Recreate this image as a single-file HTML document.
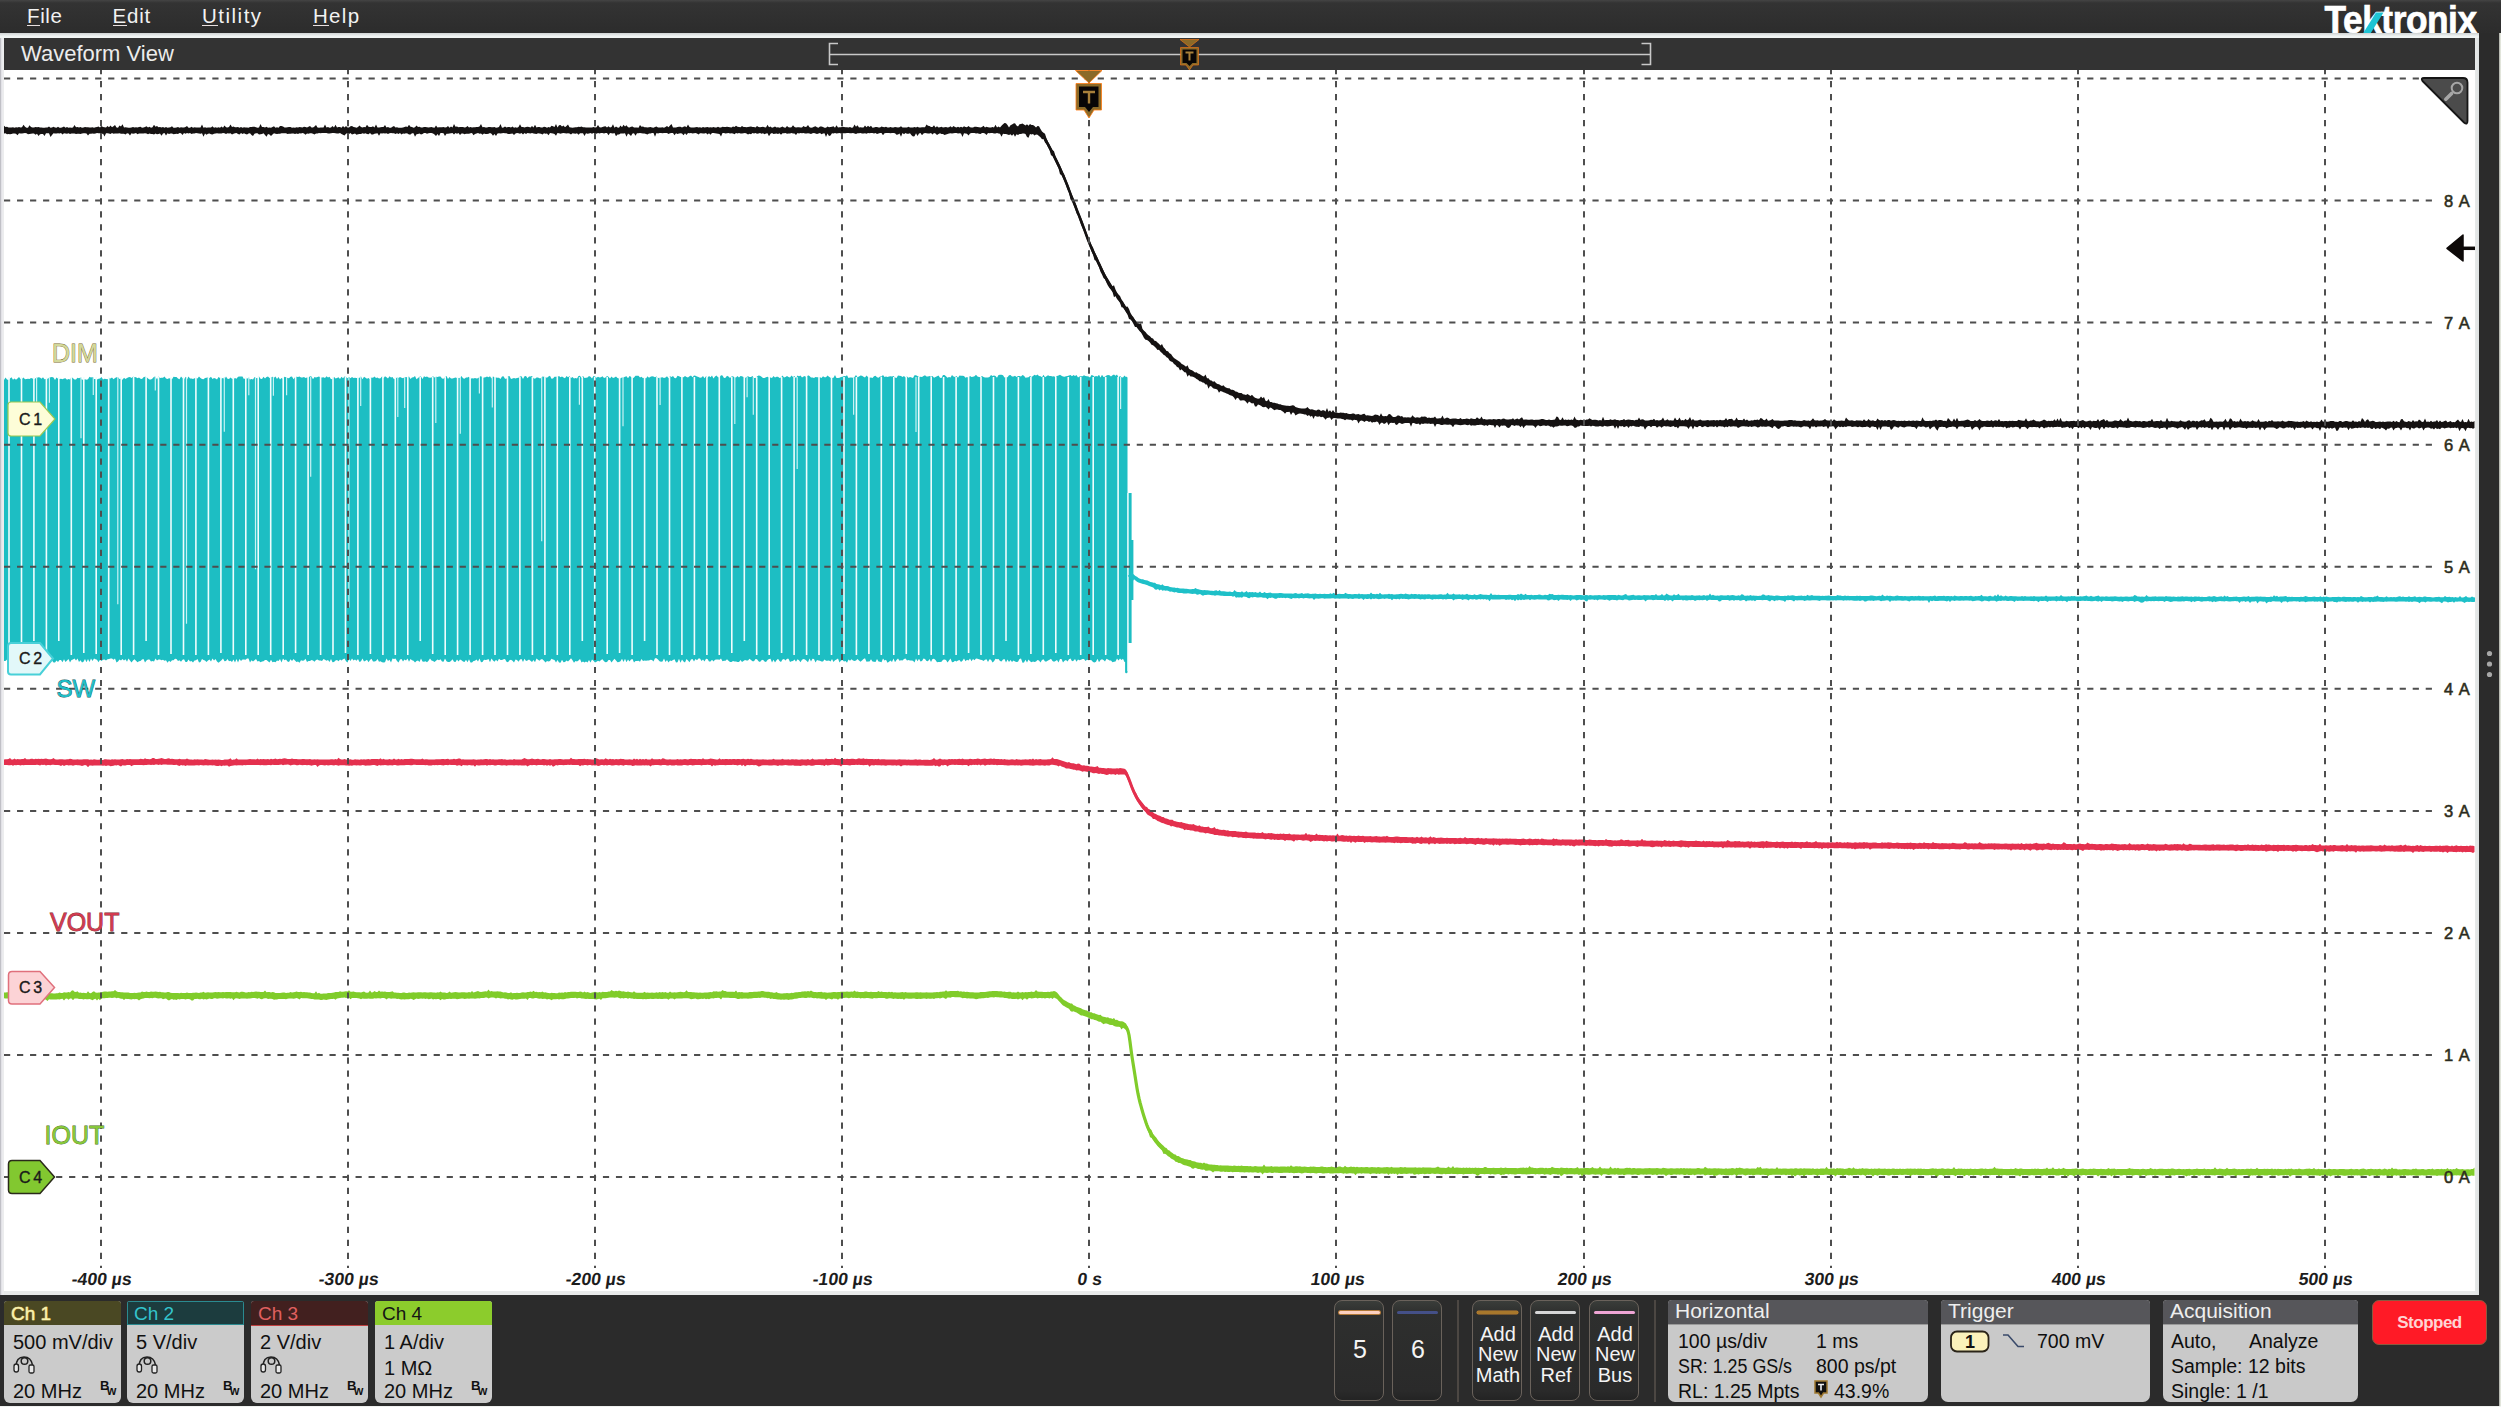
<!DOCTYPE html>
<html><head><meta charset="utf-8">
<style>
html,body{margin:0;padding:0}
body{width:2501px;height:1407px;position:relative;overflow:hidden;background:#2b2b2b;font-family:"Liberation Sans",sans-serif}
.a{position:absolute}
#menubar{left:0;top:0;width:2501px;height:33px;background:linear-gradient(#444 0,#333 3px,#2c2c2c 33px)}
.mi{position:absolute;top:3.5px;color:#f2f2f2;font-size:20.5px;line-height:24px}
.mi u{text-decoration:none;border-bottom:1.5px solid #e8e0e0;display:inline-block;line-height:19px}
#frame{left:0;top:33px;width:2479px;height:1262px;background:linear-gradient(90deg,#c4c4ca 0,#dcdce2 1px,#f0f0f2 3px,#e8eaea 4px,#e8eaea 2474px,#dfe3e3 2479px)}
#tline{left:0;top:33px;width:2479px;height:5px;background:linear-gradient(#cfd3d3 0,#e4e8e8 2px,#f4f8f6 4px,#eef2f2 5px)}
#lstrip{left:0;top:38px;width:1px;height:1257px;background:#c0c0c6}
#hdr{left:4px;top:38px;width:2471px;height:32px;background:#333}
#hdr span{position:absolute;left:17px;top:3px;color:#ececec;font-size:22px;line-height:26px}
#plot{left:4px;top:70px;width:2471px;height:1221px;background:#fff}
#rstrip{left:2498.5px;top:33px;width:2.5px;height:1374px;background:linear-gradient(90deg,#9a9a98 0,#d8dcd0 1px,#f4f6f0 2.5px)}
#bstrip{left:0;top:1406px;width:2501px;height:1px;background:#f0f2f0}
svg{position:absolute;left:0;top:0}
.lbl{position:absolute;font-size:25px;line-height:25px;letter-spacing:0}
.ya{position:absolute;left:2444px;font-size:16px;line-height:16px;color:#333;letter-spacing:0.5px}
.xa{position:absolute;font-size:17px;line-height:17px;font-weight:bold;color:#1c1c1c;text-align:center;width:100px}
/* bottom */
.card{position:absolute;top:1301px;width:117px;height:102px;border-radius:3px 3px 6px 6px;background:#cbcbcb;overflow:hidden}
.card .h{position:absolute;left:0;top:0;width:117px;height:24px}
.card .h span{position:absolute;left:7px;top:2px;font-size:19px;line-height:22px}
.card .t{position:absolute;left:9px;font-size:20px;line-height:22px;color:#111}
.btn{position:absolute;top:1300px;width:50px;height:101px;border:1px solid #6a625b;border-radius:8px;background:linear-gradient(#3a3d3a 0,#2e2f2e 12px,#2a2a2a 90px,#222 101px);box-sizing:border-box}
.btn .bar{position:absolute;left:4px;top:10px;width:41px;height:3px;border-radius:1.5px}
.btn .bt{position:absolute;left:0;width:50px;text-align:center;color:#f4f4f4;font-size:20px;line-height:20.5px}
.sep{position:absolute;top:1300px;width:2px;height:102px;background:#4c4743}
.pan{position:absolute;top:1300px;height:102px;border-radius:4px 4px 7px 7px;background:#c9c9c9;overflow:hidden}
.pan .h{position:absolute;left:0;top:0;width:100%;height:24px;background:#56565a;border-bottom:1px solid #9a9a9a}
.pan .h span{position:absolute;left:7px;top:-1px;color:#eeeeee;font-size:21px;line-height:24px}
.pan .t{position:absolute;font-size:19.5px;line-height:22px;color:#0e0e0e;white-space:nowrap}
</style></head><body>
<div class="a" id="menubar"></div>
<div class="mi" style="left:27px;letter-spacing:0.6px"><u>F</u>ile</div>
<div class="mi" style="left:112.5px;letter-spacing:0.8px"><u>E</u>dit</div>
<div class="mi" style="left:202px;letter-spacing:1.5px"><u>U</u>tility</div>
<div class="mi" style="left:313px;letter-spacing:1.3px"><u>H</u>elp</div>
<svg width="2501" height="40" viewBox="0 0 2501 40" style="left:0;top:0"><g transform="translate(2324.5,33.3) scale(0.905,1)"><text x="0" y="0" font-family="Liberation Sans" font-weight="bold" font-size="39" fill="#fff" stroke="#fff" stroke-width="0.7" letter-spacing="-0.5">Tektronix</text></g>
<path d="M2363,33.5L2376,12.5H2383.5L2370.5,33.5Z" fill="#1ec4d4"/></svg>
<div class="a" id="frame"></div><div class="a" id="tline"></div>
<div class="a" id="lstrip"></div>
<div class="a" id="rstrip"></div><div class="a" id="bstrip"></div>
<div class="a" id="hdr"><span>Waveform View</span></div>
<div class="a" id="plot"></div>

<svg width="2501" height="1407" viewBox="0 0 2501 1407">
  <!-- header timeline -->
  <g stroke="#c8c8c8" fill="none" stroke-width="1.6">
    <path d="M829,54.5H1650.5"/>
    <path d="M838,43.5H829.5V64.5H838"/>
    <path d="M1641.5,43.5H1650.5V64.5H1641.5"/>
  </g>
  <!-- traces -->
  <path d="M4,380 5.5,377.4 7,379.6 8.5,379.9 10,378.5 11.5,377.2 13,379.8 14.5,378.6 16,379.7 17.5,378.6 19,377.1 20.5,378.9 22,378.8 23.5,377.4 25,379.3 26.5,378.9 28,378.8 29.5,379.1 31,378.1 32.5,378.4 34,379.3 35.5,378.2 37,377.8 38.5,377.3 40,377.4 41.5,378.7 43,377.2 44.5,379.2 46,379 47.5,378.7 49,378.1 50.5,377.3 52,377.1 53.5,377.5 55,379.9 56.5,377.6 58,378.7 59.5,379 61,378.7 62.5,379.3 64,378.6 65.5,378.3 67,379.7 68.5,378.9 70,379.4 71.5,377 73,378.3 74.5,379.4 76,379.5 77.5,377.7 79,378.2 80.5,377.6 82,379.8 83.5,379.4 85,379.3 86.5,379.8 88,379.2 89.5,376.8 91,377.4 92.5,377.1 94,378.9 95.5,379.1 97,379.5 98.5,378.7 100,378.6 101.5,376.9 103,379.6 104.5,378.7 106,379 107.5,379.2 109,378.2 110.5,378.5 112,377.4 113.5,379.2 115,378.1 116.5,377.3 118,377.2 119.5,379 121,378.7 122.5,379.7 124,377.7 125.5,378.9 127,378.1 128.5,377.2 130,377.1 131.5,378.1 133,376.7 134.5,376.9 136,377.3 137.5,378.3 139,377.4 140.5,378.8 142,379.1 143.5,377.2 145,376.7 146.5,377.1 148,378.4 149.5,379.4 151,379.4 152.5,378.5 154,376.8 155.5,376.7 157,379.6 158.5,376.6 160,377.9 161.5,377.7 163,377.8 164.5,376.6 166,378.5 167.5,378.9 169,378.3 170.5,378.6 172,379.2 173.5,376.7 175,377 176.5,377 178,378.4 179.5,379.2 181,376.6 182.5,378 184,379.4 185.5,376.7 187,379.6 188.5,376.6 190,378.4 191.5,378.5 193,379 194.5,378.2 196,378.1 197.5,378.6 199,376.6 200.5,378.1 202,379.1 203.5,379.2 205,378 206.5,377.8 208,377.2 209.5,377.9 211,376.7 212.5,378.9 214,378 215.5,378.6 217,379.4 218.5,376.9 220,378.1 221.5,378.6 223,377.9 224.5,379.1 226,376.6 227.5,378.8 229,379.1 230.5,377.4 232,378.8 233.5,379.1 235,378.1 236.5,378.8 238,376.8 239.5,376.4 241,376.5 242.5,376.5 244,379.3 245.5,377.8 247,378.8 248.5,377.7 250,379.4 251.5,379.1 253,379.4 254.5,376.9 256,378 257.5,378.3 259,376.6 260.5,378.7 262,379 263.5,376.7 265,378.4 266.5,376.9 268,376.6 269.5,378 271,377.2 272.5,376.8 274,377.7 275.5,376.4 277,378.9 278.5,377.1 280,379.4 281.5,377.9 283,378.7 284.5,376.7 286,377.2 287.5,378 289,378.3 290.5,376.8 292,376.5 293.5,379.3 295,377.3 296.5,376.8 298,377 299.5,376.6 301,377.5 302.5,377.5 304,377.1 305.5,378 307,377.5 308.5,377.5 310,376.2 311.5,376.4 313,379.2 314.5,377.1 316,377.6 317.5,377 319,376.6 320.5,377.5 322,377.4 323.5,377.2 325,377.9 326.5,376.3 328,377.6 329.5,376.7 331,379.2 332.5,378.7 334,376.8 335.5,378.5 337,378.1 338.5,377.3 340,378.9 341.5,376.7 343,378.3 344.5,376.4 346,377.1 347.5,378.2 349,376.7 350.5,378.3 352,377.1 353.5,377.9 355,377.7 356.5,377.9 358,378.2 359.5,377.7 361,376.5 362.5,379.2 364,376.8 365.5,377.8 367,378.7 368.5,377.9 370,379.2 371.5,377.6 373,377.8 374.5,376.5 376,378.1 377.5,377.4 379,378.6 380.5,378.3 382,376.5 383.5,378.3 385,376.3 386.5,377.3 388,378.4 389.5,376.2 391,377.6 392.5,377 394,379.2 395.5,378.6 397,377.6 398.5,377.9 400,376.9 401.5,377.8 403,378.3 404.5,377.3 406,377 407.5,377.4 409,376.6 410.5,379 412,377.4 413.5,377.2 415,376 416.5,379.2 418,378.1 419.5,376.7 421,376.5 422.5,379 424,376.2 425.5,377 427,376.4 428.5,377.4 430,377.7 431.5,377.5 433,376.2 434.5,377.5 436,376.7 437.5,377.1 439,376.4 440.5,376.4 442,378.4 443.5,378.8 445,377.3 446.5,376.1 448,379 449.5,377 451,378.4 452.5,378.6 454,378 455.5,377.5 457,378.1 458.5,378 460,377.9 461.5,376.1 463,378.2 464.5,378.8 466,377.4 467.5,377.6 469,376.8 470.5,378.7 472,378.2 473.5,378.4 475,378 476.5,378.6 478,378.3 479.5,377.1 481,376.1 482.5,378.1 484,377.6 485.5,377.2 487,376.6 488.5,377.2 490,376.3 491.5,378.6 493,376.6 494.5,377.2 496,377.4 497.5,377.7 499,377.8 500.5,378.9 502,376.4 503.5,376.2 505,378.7 506.5,378.7 508,376.5 509.5,376 511,378.9 512.5,378.5 514,377.9 515.5,378.4 517,377.9 518.5,377.7 520,376.6 521.5,376.2 523,378.9 524.5,376.2 526,376 527.5,378.2 529,376.6 530.5,376.5 532,375.9 533.5,378.2 535,378.7 536.5,377.5 538,377.5 539.5,378.2 541,378.2 542.5,376.5 544,376.8 545.5,377.2 547,377.8 548.5,376.6 550,375.8 551.5,378.8 553,378.4 554.5,376.8 556,376.8 557.5,377.1 559,375.9 560.5,377.3 562,376.4 563.5,377.4 565,378.3 566.5,375.9 568,377.3 569.5,376.2 571,377.9 572.5,377.1 574,378.5 575.5,378 577,378.4 578.5,375.9 580,375.8 581.5,378 583,376 584.5,378 586,377.7 587.5,377.6 589,375.9 590.5,376.7 592,378.6 593.5,376.1 595,376.4 596.5,377.8 598,376.7 599.5,377.4 601,377.2 602.5,376.2 604,378 605.5,377.6 607,376 608.5,376.7 610,378.6 611.5,376.4 613,377.9 614.5,377.6 616,376.5 617.5,378 619,378.6 620.5,378.3 622,377.5 623.5,377.6 625,376.8 626.5,376.2 628,378.3 629.5,376.1 631,376.8 632.5,378.4 634,377.5 635.5,375.8 637,375.8 638.5,375.7 640,377.4 641.5,376.7 643,378.3 644.5,377.6 646,378.4 647.5,376.2 649,377.8 650.5,376.8 652,376.3 653.5,376.6 655,377.3 656.5,376.6 658,377.7 659.5,378.2 661,377.6 662.5,377.3 664,377.9 665.5,377.6 667,376.2 668.5,378.2 670,376.2 671.5,377 673,376.1 674.5,378.1 676,378.2 677.5,375.7 679,376.2 680.5,376.9 682,377.3 683.5,377.2 685,375.9 686.5,376.9 688,377.5 689.5,376.3 691,375.4 692.5,377.3 694,375.4 695.5,375.8 697,376.6 698.5,376.9 700,377.8 701.5,377.4 703,376.1 704.5,378.3 706,376.2 707.5,377.8 709,375.9 710.5,377.2 712,375.6 713.5,378.5 715,376.5 716.5,375.6 718,377.3 719.5,377.6 721,375.3 722.5,375.4 724,378 725.5,377.8 727,375.8 728.5,376.5 730,377.9 731.5,376.5 733,376.3 734.5,377.5 736,377.6 737.5,376.1 739,377.6 740.5,376.1 742,376.3 743.5,376.9 745,378 746.5,376.9 748,376.2 749.5,377.1 751,377.1 752.5,375.9 754,377.9 755.5,377.9 757,376.5 758.5,375.4 760,375.7 761.5,376.8 763,378 764.5,378 766,377.3 767.5,376.8 769,377.4 770.5,377.5 772,378.1 773.5,376.1 775,377.4 776.5,376.7 778,376.8 779.5,377.9 781,377.5 782.5,375.6 784,377.4 785.5,376.9 787,376.1 788.5,377 790,377.5 791.5,375.6 793,377 794.5,376.1 796,378.2 797.5,375.5 799,376.3 800.5,375.5 802,377.4 803.5,376.4 805,375.9 806.5,377.9 808,375.3 809.5,376.1 811,377.5 812.5,377.6 814,378 815.5,377.1 817,377.3 818.5,377.2 820,377.2 821.5,378 823,376.3 824.5,377.3 826,377.3 827.5,375.6 829,376.8 830.5,377.7 832,377.9 833.5,377.8 835,375.1 836.5,377.9 838,378 839.5,377.7 841,377 842.5,376.8 844,376 845.5,376.3 847,375.2 848.5,378.1 850,377.4 851.5,377.5 853,377.7 854.5,377 856,375.1 857.5,377.3 859,376.4 860.5,375.6 862,375.8 863.5,376.8 865,377.5 866.5,375.5 868,377.1 869.5,377.8 871,377.5 872.5,378 874,376.2 875.5,375.7 877,377.2 878.5,377.8 880,376.4 881.5,376.5 883,375.1 884.5,377.1 886,376.6 887.5,377.1 889,376.4 890.5,376.2 892,376.6 893.5,376 895,377.4 896.5,377.9 898,375.5 899.5,375.7 901,375.9 902.5,377.1 904,376.1 905.5,377.6 907,376.6 908.5,377.8 910,377 911.5,377.4 913,377.9 914.5,375.3 916,375.2 917.5,376 919,376.9 920.5,376.8 922,377.1 923.5,375.9 925,375.2 926.5,376.4 928,376.6 929.5,376 931,376.7 932.5,376 934,377.8 935.5,376.9 937,376.2 938.5,375.5 940,377.7 941.5,378 943,375.1 944.5,375.1 946,376.3 947.5,377.7 949,377.1 950.5,377.6 952,374.9 953.5,376.5 955,376.9 956.5,376 958,377.8 959.5,375.5 961,375.7 962.5,375.8 964,376 965.5,377.7 967,377.1 968.5,377.8 970,376 971.5,376.9 973,376.8 974.5,376.2 976,374.8 977.5,376.4 979,376.9 980.5,377.3 982,375.9 983.5,377.1 985,377.5 986.5,377.6 988,377.4 989.5,377 991,375 992.5,376.1 994,375.5 995.5,376.1 997,377.8 998.5,375 1000,374.8 1001.5,374.7 1003,375.3 1004.5,377.4 1006,377.2 1007.5,377.3 1009,375.2 1010.5,374.9 1012,376.6 1013.5,376.5 1015,375.7 1016.5,377 1018,376.1 1019.5,375.9 1021,376.6 1022.5,375.1 1024,375.8 1025.5,377.7 1027,377.5 1028.5,377.2 1030,376.1 1031.5,376.9 1033,376.1 1034.5,374.8 1036,375.6 1037.5,374.6 1039,376.1 1040.5,376.3 1042,377.3 1043.5,374.8 1045,377.2 1046.5,376.3 1048,375.2 1049.5,376.1 1051,376.1 1052.5,376.4 1054,376.3 1055.5,377.3 1057,376 1058.5,375.6 1060,374.8 1061.5,375.8 1063,376.6 1064.5,376.7 1066,376.2 1067.5,376.1 1069,375.6 1070.5,375.1 1072,376.3 1073.5,375.1 1075,376 1076.5,374.9 1078,377.5 1079.5,376.4 1081,376.2 1082.5,376.2 1084,375.3 1085.5,376.1 1087,376.3 1088.5,376.5 1090,377.5 1091.5,374.9 1093,375.5 1094.5,376.8 1096,376 1097.5,376.5 1099,374.7 1100.5,377.5 1102,374.7 1103.5,377.1 1105,376.8 1106.5,375.4 1108,375 1109.5,375.2 1111,376.6 1112.5,375.3 1114,374.5 1115.5,375.8 1117,374.4 1118.5,377.5 1120,376 1121.5,377.2 1123,377.4 1124.5,375.6 1126,377.3 L1126,662.2 1124.5,662.1 1123,658.8 1121.5,659.9 1120,658.5 1118.5,660.4 1117,658.4 1115.5,661.6 1114,661.8 1112.5,662.3 1111,660.6 1109.5,660.5 1108,659.5 1106.5,658.7 1105,661.4 1103.5,659.9 1102,659.2 1100.5,660 1099,662.2 1097.5,658.7 1096,661.7 1094.5,662.5 1093,661.9 1091.5,660.2 1090,659.9 1088.5,660.2 1087,659.7 1085.5,661 1084,659 1082.5,659 1081,659.7 1079.5,660.2 1078,659.6 1076.5,661.7 1075,658.9 1073.5,660.8 1072,661.3 1070.5,658.4 1069,659.2 1067.5,661.4 1066,660 1064.5,660.7 1063,662.5 1061.5,659.1 1060,658.9 1058.5,662.4 1057,659.9 1055.5,661.1 1054,661.8 1052.5,661.1 1051,658.8 1049.5,659.8 1048,660.4 1046.5,661.6 1045,661.4 1043.5,659.2 1042,660 1040.5,662.6 1039,660.4 1037.5,660.1 1036,661.5 1034.5,662.1 1033,661.5 1031.5,662.3 1030,661.3 1028.5,659.6 1027,662.4 1025.5,659.8 1024,662.5 1022.5,662.7 1021,658.5 1019.5,659 1018,661.7 1016.5,661.9 1015,661.4 1013.5,660.5 1012,661.9 1010.5,659.9 1009,662 1007.5,659.6 1006,662.6 1004.5,658.9 1003,659.6 1001.5,661.5 1000,661 998.5,658.9 997,659.3 995.5,658.7 994,661.3 992.5,662.6 991,659.7 989.5,659.3 988,661.9 986.5,659.3 985,659.7 983.5,660.9 982,659.9 980.5,659.7 979,659.3 977.5,658.8 976,658.4 974.5,660.3 973,658.9 971.5,661.2 970,658.5 968.5,660.4 967,659.7 965.5,661.2 964,658.6 962.5,660.7 961,662 959.5,660.1 958,660.6 956.5,661.6 955,660.7 953.5,662.1 952,662.2 950.5,658.6 949,660.6 947.5,662.5 946,660.1 944.5,659.6 943,659.7 941.5,661.8 940,662 938.5,661.9 937,662.2 935.5,660 934,658.8 932.5,659 931,661.9 929.5,659.1 928,661.3 926.5,661.1 925,658.9 923.5,658.6 922,660.9 920.5,661.4 919,658.7 917.5,661.2 916,658.5 914.5,662.4 913,660.7 911.5,660.6 910,660.6 908.5,660 907,660.5 905.5,658.4 904,659 902.5,660.4 901,660.2 899.5,660.7 898,658.6 896.5,659.9 895,662.2 893.5,658.5 892,662 890.5,660.4 889,661.7 887.5,662.7 886,659.7 884.5,660.5 883,658.6 881.5,662.3 880,661.8 878.5,661.5 877,658.9 875.5,661.9 874,661.8 872.5,661.4 871,659.2 869.5,661.4 868,661.4 866.5,661.7 865,658.3 863.5,659 862,660.4 860.5,661.7 859,660.6 857.5,659 856,660.6 854.5,661.1 853,660.4 851.5,659.2 850,660.7 848.5,659.5 847,662.7 845.5,661 844,661.5 842.5,660 841,660.5 839.5,662.6 838,658.6 836.5,659.5 835,660.2 833.5,662.1 832,659 830.5,661.4 829,660.6 827.5,660.8 826,660.8 824.5,659.4 823,661.6 821.5,661.6 820,660.8 818.5,660.6 817,660 815.5,662.6 814,659 812.5,658.8 811,661.6 809.5,658.5 808,662.2 806.5,660.7 805,659.4 803.5,659 802,659.7 800.5,662.2 799,660.2 797.5,659.2 796,661.7 794.5,659.4 793,660.9 791.5,661.2 790,662.1 788.5,658.8 787,658.7 785.5,660.6 784,659.1 782.5,659.6 781,662 779.5,661.1 778,658.8 776.5,660.3 775,662.5 773.5,659.8 772,662.4 770.5,658.8 769,659.1 767.5,659.9 766,661.9 764.5,661.4 763,659.7 761.5,660.2 760,662 758.5,661.2 757,659.3 755.5,659.1 754,661.3 752.5,661.3 751,659.9 749.5,658.7 748,660.5 746.5,660.4 745,659.9 743.5,661.1 742,662 740.5,660 739,662 737.5,662.1 736,661.4 734.5,661.4 733,660.9 731.5,661.9 730,662 728.5,660.8 727,659.3 725.5,660.7 724,660.7 722.5,661.3 721,658.5 719.5,659.7 718,659.5 716.5,659.4 715,659.7 713.5,661.4 712,659.8 710.5,661.4 709,661.4 707.5,658.9 706,658.8 704.5,661.5 703,659.4 701.5,661 700,658.4 698.5,658.6 697,660.2 695.5,659.1 694,661.6 692.5,659 691,659.5 689.5,662.2 688,660.5 686.5,658.9 685,662.4 683.5,661.4 682,659.5 680.5,662.7 679,658.8 677.5,662.3 676,662.6 674.5,659.3 673,660 671.5,660.9 670,660.5 668.5,662.4 667,660 665.5,662 664,658.6 662.5,661.5 661,661.8 659.5,661.2 658,659.5 656.5,658.3 655,658.3 653.5,661.4 652,659.9 650.5,659.7 649,660.4 647.5,660.4 646,660.7 644.5,660.5 643,661.1 641.5,658.9 640,661.7 638.5,660.7 637,661 635.5,660.9 634,662.5 632.5,658.9 631,659.5 629.5,661.5 628,659.6 626.5,662.2 625,658.8 623.5,662 622,658.8 620.5,661.3 619,662.1 617.5,662.3 616,660.6 614.5,658.8 613,660.4 611.5,662.5 610,659.9 608.5,660 607,662.1 605.5,662.2 604,661.2 602.5,659.3 601,660.1 599.5,661.5 598,660.7 596.5,661.7 595,662.6 593.5,660.8 592,659.6 590.5,662.6 589,660.1 587.5,662.6 586,661.5 584.5,662.5 583,661.4 581.5,662.4 580,659.1 578.5,660.6 577,661.4 575.5,661 574,662.7 572.5,660.3 571,658.3 569.5,660.1 568,661.5 566.5,660.4 565,662 563.5,662.2 562,659.7 560.5,662.7 559,662.4 557.5,659.9 556,662.4 554.5,660 553,659.5 551.5,658.8 550,661 548.5,661.6 547,661.1 545.5,662.6 544,660.7 542.5,659.3 541,659.3 539.5,660.8 538,659.7 536.5,658.5 535,662.2 533.5,660 532,662.1 530.5,660.7 529,659.5 527.5,660.6 526,661.1 524.5,658.8 523,662 521.5,658.9 520,659.4 518.5,661.8 517,660 515.5,659.4 514,662.4 512.5,660.7 511,659.7 509.5,660.2 508,662.3 506.5,661.8 505,659.1 503.5,659.2 502,659.9 500.5,660 499,658.7 497.5,661.4 496,659.7 494.5,661.8 493,660.5 491.5,658.5 490,662.3 488.5,659 487,659.7 485.5,660 484,659.7 482.5,662 481,662.2 479.5,658.4 478,661.4 476.5,659.5 475,660.7 473.5,661 472,662.6 470.5,662.5 469,659.2 467.5,662.2 466,659.7 464.5,661.9 463,661.6 461.5,660.3 460,659.5 458.5,661.6 457,659.4 455.5,661.9 454,661.7 452.5,659.3 451,661.1 449.5,662 448,662 446.5,661.3 445,658.6 443.5,661.8 442,661.6 440.5,659.2 439,660.2 437.5,659.4 436,660.8 434.5,661.9 433,661 431.5,660.6 430,658.5 428.5,660.7 427,662.2 425.5,661.3 424,661.8 422.5,661.6 421,658.4 419.5,662.1 418,660.4 416.5,660.9 415,662.6 413.5,660.8 412,660.3 410.5,659.1 409,661.7 407.5,658.6 406,660.5 404.5,659.5 403,661.4 401.5,659.1 400,659.6 398.5,662.6 397,661 395.5,658.6 394,659 392.5,658.4 391,662.5 389.5,659.7 388,661.1 386.5,658.4 385,662.3 383.5,662.6 382,662.2 380.5,661.3 379,661.7 377.5,658.9 376,661.1 374.5,661.4 373,661.4 371.5,658.8 370,659.9 368.5,662.3 367,659.7 365.5,660.7 364,661.6 362.5,658.6 361,661.3 359.5,661.9 358,658.9 356.5,660.8 355,659.6 353.5,660.6 352,658.4 350.5,661 349,658.9 347.5,662.4 346,661.2 344.5,658.5 343,659.3 341.5,660.5 340,659.6 338.5,661.3 337,659.9 335.5,660.4 334,661.9 332.5,662.3 331,658.9 329.5,662.1 328,660 326.5,660.8 325,659.7 323.5,659.1 322,660.9 320.5,660.5 319,660.6 317.5,659.5 316,660.1 314.5,661.7 313,660.4 311.5,659.9 310,661.1 308.5,660.9 307,662 305.5,658.8 304,660.6 302.5,660.8 301,660.3 299.5,662.7 298,661.4 296.5,662.1 295,660.5 293.5,659.1 292,661 290.5,659.2 289,661.9 287.5,661.5 286,659.4 284.5,660.3 283,658.4 281.5,662.6 280,659.1 278.5,660.9 277,660.6 275.5,662.2 274,661.8 272.5,662.3 271,659.7 269.5,662.6 268,661.2 266.5,659.9 265,659.9 263.5,661.2 262,661.4 260.5,662.2 259,660.9 257.5,661.5 256,658.9 254.5,660.2 253,661.6 251.5,660.3 250,662.4 248.5,658.5 247,658.4 245.5,659.8 244,659.4 242.5,659.5 241,661 239.5,658.9 238,662.4 236.5,659.1 235,662.4 233.5,659.6 232,662 230.5,660.7 229,661.3 227.5,659.1 226,661 224.5,661.3 223,658.4 221.5,660.2 220,661.6 218.5,662.7 217,661.4 215.5,659.1 214,660.6 212.5,658.6 211,661.6 209.5,659.6 208,660.6 206.5,662.1 205,660.4 203.5,660 202,659.1 200.5,661.9 199,662.5 197.5,659.1 196,660.3 194.5,660.6 193,662.4 191.5,661.1 190,661.5 188.5,659.5 187,662.1 185.5,662.1 184,659.2 182.5,659.8 181,661.7 179.5,660.2 178,660.9 176.5,658.9 175,658.8 173.5,660.2 172,660.3 170.5,662 169,660.7 167.5,662.7 166,660.3 164.5,660.8 163,659.8 161.5,660.3 160,659.4 158.5,659.4 157,660.6 155.5,658.4 154,661.4 152.5,661 151,661.5 149.5,659.4 148,659.4 146.5,660.4 145,662.6 143.5,658.9 142,659.5 140.5,660.9 139,661.2 137.5,662.3 136,660.8 134.5,659.3 133,660.5 131.5,662.5 130,660.5 128.5,658.5 127,661.7 125.5,659.2 124,660.5 122.5,658.9 121,660.6 119.5,659.6 118,661.4 116.5,662.4 115,658.5 113.5,659.8 112,658.6 110.5,658.5 109,659 107.5,659.2 106,660.6 104.5,659.5 103,659.7 101.5,661.1 100,659.7 98.5,662.3 97,659.7 95.5,659.2 94,658.4 92.5,661 91,658.5 89.5,662 88,658.9 86.5,662.3 85,659 83.5,661.7 82,662.5 80.5,660.3 79,662.1 77.5,658.5 76,660.6 74.5,658.6 73,659.4 71.5,660 70,662.4 68.5,659 67,660.5 65.5,661.9 64,659.3 62.5,662.3 61,660 59.5,660.1 58,662 56.5,660.6 55,662.5 53.5,662.4 52,660.5 50.5,662.5 49,659.6 47.5,659.7 46,659.7 44.5,661.1 43,659 41.5,660.5 40,659.2 38.5,660.8 37,661.4 35.5,660 34,660.4 32.5,660.9 31,662.4 29.5,662.6 28,661.9 26.5,661.9 25,662.2 23.5,660.5 22,661.6 20.5,660.5 19,662 17.5,659.2 16,661.4 14.5,660.7 13,660.6 11.5,660.6 10,659.2 8.5,660.6 7,659.6 5.5,660.9 4,661.1Z" fill="#1dbec3"/>
  <path d="M9,377V655M21.5,377V655M33.9,377V641M46.4,377V655M58.8,377V641M71.3,377V655M83.8,377V653M96.2,377V654M108.7,377V654M121.2,377V655M133.6,377V655M146.1,377V641M158.5,377V655M171,377V654M183.5,377V655M195.9,377V655M208.4,377V655M220.9,377V653M233.3,377V655M245.8,377V655M258.2,377V655M270.7,377V655M283.2,377V655M295.6,377V653M308.1,377V655M320.6,377V655M333,377V655M345.5,377V653M357.9,377V655M370.4,377V654M382.9,377V655M395.3,377V655M407.8,377V655M420.2,377V641M432.7,377V654M445.2,377V655M457.6,377V655M470.1,377V655M482.6,377V655M495,377V655M507.5,377V655M519.9,377V655M532.4,377V655M544.9,377V655M557.3,377V655M569.8,377V655M582.3,377V641M594.7,377V653M607.2,377V654M619.6,377V653M632.1,377V655M644.6,377V641M657,377V655M669.5,377V655M681.9,377V655M694.4,377V655M706.9,377V655M719.3,377V655M731.8,377V653M744.3,377V641M756.7,377V655M769.2,377V655M781.6,377V653M794.1,377V655M806.6,377V655M819,377V655M831.5,377V655M844,377V654M856.4,377V655M868.9,377V654M881.3,377V655M893.8,377V655M906.3,377V654M918.7,377V655M931.2,377V655M943.6,377V655M956.1,377V655M968.6,377V653M981,377V655M993.5,377V655M1006,377V641M1018.4,377V655M1030.9,377V654M1043.3,377V655M1055.8,377V653M1068.3,377V655M1080.7,377V655M1093.2,377V655M1105.7,377V655M1118.1,377V655" stroke="#effdfd" stroke-width="1.6" fill="none"/><path d="M36.6,377V418M49.4,377V402.8M81,377V438.3M93.3,377V394.9M117.8,377V604.2M155.3,377V390.6M186.5,377V623.7M224.3,377V431.7M248.8,377V395.2M255.5,377V569.3M273.4,377V395.7M286.6,377V395.2M310.7,377V476.7M348.9,377V607.5M360.7,377V406.1M397.8,377V417.1M404.7,377V408.1M435.8,377V422.9M460.3,377V433.7M479.4,377V393.6M492.3,377V407.5M541.7,377V541.3M579.4,377V404.8M623,377V426.2M660.1,377V405.1M734.8,377V424.1M747.1,377V397.2M753.3,377V414.8M797.2,377V469M853.6,377V414.8M916,377V432.1M1120.6,377V409" stroke="#c8f2f4" stroke-width="1.2" fill="none"/>
  <path d="M1126.3,378V672" stroke="#1dbec3" stroke-width="2.4" fill="none" stroke-linecap="round"/><path d="M1130,493V643M1131.8,540V600" stroke="#1dbec3" stroke-width="3.2" fill="none"/><path d="M1127.9,493V671" stroke="#effdfd" stroke-width="1.1" fill="none"/>
  <path d="M1131,570.5l1.5,2.8 1.5,1.4 1.5,1.3 1.5,0.7 1.5,1.4 1.5,0.6 1.5,0.5 1.5,0.1 1.5,0.8 1.5,0.1 1.5,0.4 1.5,0.7 1.5,0.7 1.5,0.3 1.5,0.4 1.5,0.1 1.5,1.2 1.5,0.3 1.5,0.2 1.5,0.7 1.5,-0.9 1.5,1.4 1.5,0.3 1.5,0.1 1.5,0.1 1.5,0.8 1.5,0.2 1.5,0.3 1.5,0.1 1.5,0.3 1.5,-0.2 1.5,0.5 1.5,0.2 1.5,0 1.5,0.1 1.5,0.2 1.5,-0 1.5,0.4 1.5,0.1 1.5,0.1 1.5,-0.4 1.5,0 1.5,-0.8 1.5,1 1.5,0.1 1.5,0.6 1.5,0.2 1.5,0.2 1.5,-0.2 1.5,0.3 1.5,-0.1 1.5,0.2 1.5,0.3 1.5,0 1.5,0.2 1.5,-0.3 1.5,-0.3 1.5,0.9 1.5,-1.3 1.5,1.4 1.5,-0 1.5,-0.1 1.5,0.4 1.5,0.1 1.5,0 1.5,-0.1 1.5,0.3 1.5,0 1.5,-1.9 1.5,1.6 1.5,0.4 1.5,0 1.5,0.3 1.5,-1 1.5,1.1 1.5,-0.2 1.5,-1.1 1.5,1.3 1.5,-0.5 1.5,0.4 1.5,-0.4 1.5,0.7 1.5,-0.5 1.5,0.7 1.5,0 1.5,-1.4 1.5,1.5 1.5,0.1 1.5,-1.1 1.5,1.2 1.5,-0.2 1.5,-0.1 1.5,-0.4 1.5,0.8 1.5,0.1 1.5,0 1.5,-0 1.5,0 1.5,-0.2 1.5,0 1.5,0.1 1.5,0.4 1.5,-0 1.5,0 1.5,-0.2 1.5,0 1.5,0.2 1.5,0.1 1.5,-0.5 1.5,-0.2 1.5,0.8 1.5,-0 1.5,-0.2 1.5,-0.6 1.5,0.9 1.5,-0.4 1.5,0.1 1.5,-0.4 1.5,0.5 1.5,0.2 1.5,-0.2 1.5,-0 1.5,-0.2 1.5,0.5 1.5,-0.1 1.5,-0.1 1.5,0.1 1.5,0 1.5,-0.2 1.5,0.3 1.5,0 1.5,0.1 1.5,-0.9 1.5,0.8 1.5,-1.2 1.5,0.9 1.5,0.4 1.5,0 1.5,-0.3 1.5,0.1 1.5,-0 1.5,0.2 1.5,-1.4 1.5,1.1 1.5,0.2 1.5,0 1.5,0.3 1.5,-0.1 1.5,-0.3 1.5,0.2 1.5,0.2 1.5,-0.7 1.5,0.6 1.5,-0.2 1.5,0.2 1.5,-0 1.5,0.1 1.5,-0.2 1.5,0.1 1.5,-1.7 1.5,1.6 1.5,-0.2 1.5,0.3 1.5,-0.4 1.5,0.4 1.5,-1.4 1.5,1.5 1.5,0.1 1.5,-0.2 1.5,0 1.5,0.1 1.5,-0.5 1.5,0.5 1.5,-0.3 1.5,0.4 1.5,-0 1.5,-0.1 1.5,-0 1.5,-0.2 1.5,-0.3 1.5,0.2 1.5,0.3 1.5,-0.9 1.5,0.6 1.5,0.3 1.5,0.2 1.5,-0.8 1.5,0.6 1.5,-0.2 1.5,0 1.5,0.5 1.5,-0.5 1.5,0.3 1.5,-0.2 1.5,0.4 1.5,-0.4 1.5,0.4 1.5,-0.4 1.5,0.1 1.5,0.4 1.5,-0.1 1.5,-0 1.5,-0.1 1.5,0.2 1.5,-0.3 1.5,-0.2 1.5,0.1 1.5,0.4 1.5,-0.2 1.5,-0.1 1.5,-1.7 1.5,1.8 1.5,0.1 1.5,-0.2 1.5,-0.8 1.5,0.9 1.5,-0 1.5,0.1 1.5,-0.4 1.5,0.5 1.5,-0.5 1.5,0.6 1.5,-0.2 1.5,-0.8 1.5,1 1.5,-0.1 1.5,0.2 1.5,0 1.5,-0.7 1.5,0.7 1.5,-0 1.5,-0.3 1.5,-0.6 1.5,0.6 1.5,0.2 1.5,-0.1 1.5,0.1 1.5,0.1 1.5,0 1.5,-1.8 1.5,1.9 1.5,-0.3 1.5,0.1 1.5,0.1 1.5,-0.2 1.5,0.4 1.5,-0.2 1.5,0.1 1.5,-0.1 1.5,0 1.5,-0 1.5,-0.2 1.5,0.1 1.5,0.1 1.5,0.2 1.5,-0.1 1.5,-0.1 1.5,-0.9 1.5,0.8 1.5,-1.3 1.5,1.1 1.5,0.4 1.5,-1.2 1.5,1.2 1.5,0.1 1.5,-0.2 1.5,-0.1 1.5,0.4 1.5,-0.1 1.5,-0 1.5,-0.1 1.5,-0.4 1.5,0.2 1.5,0.4 1.5,-0 1.5,-0.5 1.5,0.2 1.5,0.1 1.5,-1.3 1.5,0.5 1.5,-0.1 1.5,0.8 1.5,-0 1.5,-0 1.5,-0.1 1.5,0.2 1.5,-0.2 1.5,0 1.5,0.1 1.5,0.2 1.5,-0 1.5,0.1 1.5,-0.3 1.5,0.4 1.5,0.1 1.5,-0.1 1.5,-0.2 1.5,0 1.5,-0.1 1.5,0 1.5,0.2 1.5,0.2 1.5,-0.3 1.5,-0.1 1.5,0.4 1.5,-0.5 1.5,0.3 1.5,0.2 1.5,-0.1 1.5,-0.1 1.5,-0 1.5,-0.1 1.5,0.2 1.5,0.1 1.5,-0.5 1.5,0.3 1.5,0.1 1.5,-0.2 1.5,-0.1 1.5,-0.1 1.5,-0 1.5,0.1 1.5,0 1.5,0.4 1.5,-0.7 1.5,0.5 1.5,0.2 1.5,-0.1 1.5,-0.8 1.5,-0.4 1.5,1.4 1.5,-0 1.5,-0.2 1.5,-0.4 1.5,-0.1 1.5,0.6 1.5,0 1.5,-0.1 1.5,-0.1 1.5,0.2 1.5,-0 1.5,-0.5 1.5,0.3 1.5,0 1.5,-0 1.5,0.2 1.5,-0.3 1.5,-0.1 1.5,0.2 1.5,-1.1 1.5,1.3 1.5,0.2 1.5,-0.3 1.5,-1.2 1.5,1.4 1.5,-0.2 1.5,-1.9 1.5,1.1 1.5,0.7 1.5,0.4 1.5,-0 1.5,-1.4 1.5,1 1.5,-0.3 1.5,-1.2 1.5,1.7 1.5,0.1 1.5,0.1 1.5,-0.2 1.5,-0.2 1.5,0.3 1.5,0 1.5,0.1 1.5,-0.6 1.5,0.4 1.5,0.3 1.5,-0.1 1.5,0 1.5,-0.4 1.5,0.5 1.5,-0.1 1.5,-0.6 1.5,0.7 1.5,-0.4 1.5,0.2 1.5,-1.9 1.5,1.9 1.5,-0.7 1.5,0.6 1.5,0.3 1.5,-0.1 1.5,0.1 1.5,-0.4 1.5,0 1.5,0.3 1.5,-0.2 1.5,-0 1.5,-0.3 1.5,0.5 1.5,-0.3 1.5,-0.3 1.5,0.2 1.5,0.6 1.5,-0.1 1.5,-0.5 1.5,0.6 1.5,-1.5 1.5,0.2 1.5,1.2 1.5,0.1 1.5,-0.2 1.5,0.1 1.5,-0.6 1.5,0.6 1.5,-0.2 1.5,0.3 1.5,-0 1.5,0.1 1.5,-0.1 1.5,0 1.5,-1.3 1.5,0.1 1.5,0.9 1.5,0 1.5,-0.5 1.5,0.5 1.5,0.1 1.5,0.1 1.5,0.2 1.5,-0.4 1.5,0.1 1.5,0.2 1.5,0.1 1.5,-0 1.5,-0 1.5,-0.1 1.5,0.1 1.5,-0.7 1.5,0.6 1.5,-0.2 1.5,-0.3 1.5,0.2 1.5,0.4 1.5,0 1.5,-0.2 1.5,0 1.5,-0.1 1.5,0.3 1.5,-0.1 1.5,0.1 1.5,-1.2 1.5,1.1 1.5,-0.2 1.5,-0.7 1.5,0.8 1.5,0 1.5,0.1 1.5,-0.1 1.5,0.1 1.5,0.2 1.5,-0.3 1.5,0.2 1.5,-0.2 1.5,0 1.5,-0.1 1.5,0.1 1.5,0.2 1.5,0.1 1.5,0.1 1.5,-0.2 1.5,-0.8 1.5,0.4 1.5,0.1 1.5,0.3 1.5,0.1 1.5,-0.5 1.5,0.6 1.5,-0.4 1.5,0.2 1.5,0.2 1.5,-0.2 1.5,0.2 1.5,-0.1 1.5,-0.2 1.5,0.1 1.5,-0.1 1.5,0.1 1.5,0.1 1.5,0.1 1.5,-0 1.5,-0.2 1.5,0.2 1.5,-0.6 1.5,0 1.5,0.2 1.5,0.2 1.5,0.3 1.5,-0.2 1.5,-0.3 1.5,0.3 1.5,-1.4 1.5,1.4 1.5,0.2 1.5,-0.6 1.5,0.3 1.5,-0.2 1.5,0.3 1.5,0.2 1.5,-0 1.5,-0.5 1.5,-0.2 1.5,0.5 1.5,-0.1 1.5,0.1 1.5,0.3 1.5,-0.4 1.5,0.3 1.5,0.1 1.5,-0.1 1.5,-0.3 1.5,0.1 1.5,0.3 1.5,-0.4 1.5,0.3 1.5,-0.4 1.5,0.1 1.5,0.3 1.5,-0.3 1.5,0.4 1.5,-0.1 1.5,-0 1.5,0.1 1.5,-0.3 1.5,0.2 1.5,-0.1 1.5,-0.6 1.5,0.9 1.5,-0.3 1.5,-0.1 1.5,0 1.5,0.1 1.5,-0.4 1.5,0.5 1.5,-0.1 1.5,0 1.5,0.2 1.5,-0.2 1.5,0.3 1.5,-0.8 1.5,0.3 1.5,0.4 1.5,-0.1 1.5,-0.3 1.5,0.2 1.5,0.1 1.5,-0.1 1.5,-0 1.5,0.1 1.5,-0.3 1.5,-0.2 1.5,0.6 1.5,0.1 1.5,-0.4 1.5,0.3 1.5,-0.2 1.5,-0.1 1.5,-1.2 1.5,1.4 1.5,0 1.5,0.1 1.5,0.2 1.5,-0.5 1.5,-0.2 1.5,0.7 1.5,-0.1 1.5,-1.3 1.5,1.1 1.5,-2.2 1.5,2.2 1.5,-1 1.5,1.1 1.5,0.2 1.5,-0.9 1.5,0.7 1.5,0.1 1.5,-0.4 1.5,-0.1 1.5,0.4 1.5,-0.1 1.5,0 1.5,0.2 1.5,0.1 1.5,-0.1 1.5,-0.3 1.5,0.4 1.5,-0.4 1.5,0.3 1.5,0.1 1.5,0 1.5,-0.2 1.5,0.2 1.5,-0.5 1.5,0.5 1.5,-0.1 1.5,0.2 1.5,-0.2 1.5,-0.1 1.5,0.2 1.5,-0 1.5,-1.1 1.5,1.2 1.5,-0.1 1.5,0.1 1.5,0 1.5,-0.2 1.5,0.2 1.5,-0.7 1.5,0.7 1.5,0 1.5,-1.6 1.5,1.3 1.5,0.1 1.5,0.1 1.5,-0.1 1.5,-0.1 1.5,0.3 1.5,-0.6 1.5,0.3 1.5,-0.2 1.5,0.4 1.5,0.1 1.5,-0 1.5,-0.4 1.5,0.4 1.5,-0.4 1.5,-0.3 1.5,-0.5 1.5,1.2 1.5,-0.1 1.5,-0.7 1.5,0.7 1.5,0.2 1.5,-0.4 1.5,-0.2 1.5,-0.7 1.5,1.3 1.5,-0.2 1.5,0.1 1.5,0.1 1.5,-0.4 1.5,0.2 1.5,0.2 1.5,-0.1 1.5,-0.2 1.5,0.2 1.5,-0.4 1.5,0.2 1.5,0.4 1.5,-0 1.5,-0.3 1.5,0.2 1.5,0 1.5,-0.1 1.5,-0.2 1.5,0.4 1.5,-0 1.5,-0.2 1.5,-0.2 1.5,-1.4 1.5,0.5 1.5,1.1 1.5,-0.1 1.5,0.3 1.5,-0.3 1.5,0.2 1.5,-0 1.5,-1.7 1.5,1.6 1.5,0.2 1.5,-0.1 1.5,-0.3 1.5,0.2 1.5,-0.3 1.5,0.4 1.5,-0.2 1.5,-0 1.5,0 1.5,-0.1 1.5,0.3 1.5,-0.8 1.5,0.6 1.5,0 1.5,0.1 1.5,0.1 1.5,-0.2 1.5,0.3 1.5,0.1 1.5,-0.3 1.5,0.1 1.5,-0.1 1.5,-0.3 1.5,0.5 1.5,-0.3 1.5,0.1 1.5,0.2 1.5,-0.1 1.5,-0.1 1.5,0.3 1.5,-0.5 1.5,0.2 1.5,0.2 1.5,-0.3 1.5,0.4 1.5,-0.1 1.5,0.1 1.5,-0 1.5,0 1.5,-0.4 1.5,-0.2 1.5,0.4 1.5,-0.1 1.5,-0.5 1.5,0.5 1.5,0.3 1.5,-0.2 1.5,-0.3 1.5,-0.1 1.5,0.7 1.5,-1.6 1.5,1.4 1.5,-0.8 1.5,1 1.5,-0.1 1.5,0 1.5,-0.1 1.5,-0.1 1.5,-0.1 1.5,0.4 1.5,-0.1 1.5,0.1 1.5,-0.3 1.5,-0.3 1.5,0.4 1.5,-0.1 1.5,-0.6 1.5,0.9 1.5,-0.3 1.5,0.1 1.5,-0.1 1.5,-0.3 1.5,0.1 1.5,0.3 1.5,-0.2 1.5,0.1 1.5,-0 1.5,0.1 1.5,0.3 1.5,-0.2 1.5,-0 1.5,-0.3 1.5,0.5 1.5,-1.8 1.5,1.3 1.5,-0.9 1.5,1.4 1.5,-0.5 1.5,-0 1.5,0 1.5,-0.3 1.5,-0.3 1.5,0.9 1.5,-0.1 1.5,0.3 1.5,-0.3 1.5,0.2 1.5,-0 1.5,-0.1 1.5,0 1.5,-0 1.5,-0.1 1.5,0.2 1.5,-0.2 1.5,-0.8 1.5,0.6 1.5,0.3 1.5,0.2 1.5,-0.1 1.5,-0.2 1.5,-0.3 1.5,0.4 1.5,-0 1.5,0.1 1.5,-0.8 1.5,1 1.5,-0.6 1.5,0.3 1.5,-0.5 1.5,0.6 1.5,0.2 1.5,-0 1.5,-0.3 1.5,0.2 1.5,-0 1.5,-0.1 1.5,-0.3 1.5,0.4 1.5,0.1 1.5,-0.4 1.5,-0 1.5,0.3 1.5,-0.2 1.5,-0 1.5,-0 1.5,0.3 1.5,-0.1 1.5,-0.1 1.5,0.2 1.5,-0.1 1.5,0.1 1.5,-1.1 1.5,0.7 1.5,0.4 1.5,0.1 1.5,-0.1 1.5,-0.1 1.5,-0 1.5,-0 1.5,0.1 1.5,-0.8 1.5,0.2 1.5,-1.2 1.5,1.7 1.5,-0.2 1.5,0.2 1.5,0.1 1.5,0.1 1.5,-1.1 1.5,1.1 1.5,-0.1 1.5,-0.3 1.5,0.4 1.5,-0.3 1.5,0.2 1.5,-0.3 1.5,-0.3 1.5,-0.3 1.5,0.7 1.5,-0.6 1.5,0.7 1.5,-0.2 1.5,0.1 1.5,-0.7 1.5,0.8 1.5,-0 1.5,-0.3 1.5,-0.6 1.5,1 1.5,-0.3 1.5,-0.2 1.5,0.4 1.5,0.1 1.5,-0.6 1.5,-0 1.5,0.5 1.5,-0 1.5,-0.2 1.5,0.3 1.5,0.2 1.5,-0.2 1.5,-0.2 1.5,0.1 1.5,-0.4 1.5,0.5 1.5,0 1.5,0.1 1.5,-1.3 1.5,1 1.5,0.1 1.5,-0.3 1.5,0.5 1.5,-0.2 1.5,0.3 1.5,-0.4 1.5,0.4 1.5,0 1.5,-1.3 1.5,1.3 1.5,0 1.5,-0.3 1.5,-1.1 1.5,1.2 1.5,0.3 1.5,-0 1.5,-1 1.5,0.8 1.5,0.2 0,4.2 -1.5,0.2 -1.5,0.2 -1.5,-0.3 -1.5,0.2 -1.5,-0.3 -1.5,0.3 -1.5,1 -1.5,-1.1 -1.5,-0.3 -1.5,-0 -1.5,-0 -1.5,0.2 -1.5,-0.3 -1.5,1.2 -1.5,-1.2 -1.5,0.6 -1.5,-0.1 -1.5,0.4 -1.5,-0.7 -1.5,-0.1 -1.5,0 -1.5,1.7 -1.5,-1 -1.5,-0.7 -1.5,0.1 -1.5,0 -1.5,-0.1 -1.5,-0.1 -1.5,0.3 -1.5,0 -1.5,-0.3 -1.5,0.1 -1.5,0.9 -1.5,-0.7 -1.5,-0 -1.5,0 -1.5,1.4 -1.5,-1.3 -1.5,-0.1 -1.5,-0.4 -1.5,0 -1.5,0.6 -1.5,-0.4 -1.5,0.3 -1.5,-0.3 -1.5,0.1 -1.5,-0.1 -1.5,-0.1 -1.5,-0.1 -1.5,0.2 -1.5,-0 -1.5,0.1 -1.5,0.1 -1.5,-0.2 -1.5,-0.2 -1.5,0 -1.5,-0 -1.5,0.1 -1.5,0.3 -1.5,-0.2 -1.5,0.4 -1.5,-0.2 -1.5,-0.1 -1.5,-0.2 -1.5,-0.1 -1.5,0.3 -1.5,0.1 -1.5,0.3 -1.5,-0.7 -1.5,1.1 -1.5,-1.1 -1.5,-0 -1.5,0.4 -1.5,-0.2 -1.5,0.3 -1.5,-0.4 -1.5,0.1 -1.5,1.2 -1.5,-1.2 -1.5,-0.3 -1.5,0.4 -1.5,-0 -1.5,-0.2 -1.5,0.2 -1.5,-0.1 -1.5,0.3 -1.5,-0.2 -1.5,-0.3 -1.5,-0.1 -1.5,0.5 -1.5,-0.4 -1.5,1 -1.5,-0.5 -1.5,0.2 -1.5,-0.8 -1.5,0.3 -1.5,-0.1 -1.5,0.4 -1.5,-0.5 -1.5,0.1 -1.5,1.3 -1.5,-1.6 -1.5,0.5 -1.5,-0.4 -1.5,0.4 -1.5,-0.2 -1.5,0.2 -1.5,-0.5 -1.5,0.2 -1.5,0.2 -1.5,-0.1 -1.5,0.3 -1.5,0.4 -1.5,-0.7 -1.5,0.1 -1.5,-0.2 -1.5,0.7 -1.5,-0.9 -1.5,0.2 -1.5,-0.1 -1.5,-0 -1.5,0.2 -1.5,-0.1 -1.5,0 -1.5,1 -1.5,-1.2 -1.5,0.4 -1.5,-0.1 -1.5,1.4 -1.5,-1.4 -1.5,0.1 -1.5,-0.1 -1.5,0.1 -1.5,-0.3 -1.5,-0.1 -1.5,0.7 -1.5,-0.2 -1.5,0.4 -1.5,1.3 -1.5,-2 -1.5,0.3 -1.5,-0.3 -1.5,-0.1 -1.5,0.2 -1.5,2 -1.5,-2.4 -1.5,0.4 -1.5,0.1 -1.5,-0.1 -1.5,1.6 -1.5,-1.8 -1.5,-0.1 -1.5,0.9 -1.5,-1 -1.5,0.3 -1.5,-0.2 -1.5,1.7 -1.5,-1.6 -1.5,0 -1.5,-0.2 -1.5,0.1 -1.5,0.1 -1.5,0.1 -1.5,0 -1.5,-0.2 -1.5,-0.1 -1.5,0.3 -1.5,-0.2 -1.5,0.1 -1.5,-0.3 -1.5,0.3 -1.5,0.1 -1.5,0.5 -1.5,-0.6 -1.5,1 -1.5,-1.1 -1.5,0.3 -1.5,-0.4 -1.5,0.1 -1.5,0.1 -1.5,-0 -1.5,0.4 -1.5,-0.1 -1.5,-0.6 -1.5,0 -1.5,0.3 -1.5,0.8 -1.5,-1.1 -1.5,1.2 -1.5,-0.9 -1.5,-0.1 -1.5,-0.2 -1.5,0.1 -1.5,0.3 -1.5,-0.1 -1.5,0.2 -1.5,0 -1.5,-0 -1.5,-0.3 -1.5,-0 -1.5,-0 -1.5,0.6 -1.5,0.1 -1.5,-0.5 -1.5,-0.4 -1.5,0.1 -1.5,1 -1.5,-1.1 -1.5,0.1 -1.5,0 -1.5,0.2 -1.5,-0.2 -1.5,-0.1 -1.5,0.3 -1.5,-0.2 -1.5,0.2 -1.5,-0.2 -1.5,0.1 -1.5,0.2 -1.5,-0.5 -1.5,1.4 -1.5,0.5 -1.5,-0.2 -1.5,-1.1 -1.5,-0.6 -1.5,0.3 -1.5,0.8 -1.5,-1.1 -1.5,0.2 -1.5,-0.1 -1.5,0.5 -1.5,-0.3 -1.5,-0.2 -1.5,-0.1 -1.5,1.1 -1.5,-0.8 -1.5,0.2 -1.5,-0.2 -1.5,-0.2 -1.5,-0.1 -1.5,0.3 -1.5,0.2 -1.5,-0.5 -1.5,0.2 -1.5,-0.1 -1.5,0 -1.5,-0.2 -1.5,0 -1.5,1.1 -1.5,-1.1 -1.5,0.8 -1.5,-0.3 -1.5,-0.5 -1.5,0.2 -1.5,0.3 -1.5,-0.1 -1.5,-0.2 -1.5,0 -1.5,-0.2 -1.5,0.2 -1.5,-0.2 -1.5,-0 -1.5,0.1 -1.5,0.1 -1.5,0.5 -1.5,-0.8 -1.5,0.1 -1.5,-0 -1.5,0 -1.5,0.3 -1.5,-0.3 -1.5,1.4 -1.5,-1.2 -1.5,-0.2 -1.5,0.4 -1.5,-0.4 -1.5,0.2 -1.5,-0.2 -1.5,0.8 -1.5,-0.9 -1.5,0 -1.5,-0 -1.5,0.3 -1.5,-0.3 -1.5,1.4 -1.5,-1 -1.5,-0.4 -1.5,0.2 -1.5,0.1 -1.5,-0.2 -1.5,1.4 -1.5,-1.3 -1.5,-0.1 -1.5,0.4 -1.5,-0.2 -1.5,-0.1 -1.5,-0.2 -1.5,0 -1.5,0.1 -1.5,-0.1 -1.5,0.2 -1.5,-0.1 -1.5,-0 -1.5,-0.1 -1.5,0.4 -1.5,-0.5 -1.5,1.5 -1.5,-1.1 -1.5,-0.3 -1.5,0.1 -1.5,0.1 -1.5,0.1 -1.5,-0.4 -1.5,0.2 -1.5,-0.2 -1.5,0.4 -1.5,-0.2 -1.5,0.3 -1.5,0.7 -1.5,-1 -1.5,-0.1 -1.5,0.1 -1.5,-0.1 -1.5,0.8 -1.5,-0.6 -1.5,-0.2 -1.5,-0.1 -1.5,0.6 -1.5,0.4 -1.5,-0.9 -1.5,-0.1 -1.5,-0.1 -1.5,0.3 -1.5,0.1 -1.5,0.4 -1.5,-0.7 -1.5,0.1 -1.5,-0.1 -1.5,0 -1.5,-0 -1.5,0.1 -1.5,-0.1 -1.5,0.2 -1.5,-0 -1.5,-0.2 -1.5,-0.1 -1.5,0.5 -1.5,-0.4 -1.5,-0.1 -1.5,1.5 -1.5,-1.5 -1.5,0.9 -1.5,-0.5 -1.5,-0.1 -1.5,0 -1.5,-0.1 -1.5,0.1 -1.5,0.1 -1.5,-0 -1.5,0 -1.5,-0.4 -1.5,0.7 -1.5,-0.6 -1.5,2.4 -1.5,-2.6 -1.5,0.1 -1.5,-0.1 -1.5,0.3 -1.5,-0.2 -1.5,0.3 -1.5,-0.2 -1.5,-0.2 -1.5,0.1 -1.5,0.2 -1.5,-0.1 -1.5,-0.1 -1.5,1 -1.5,-0.6 -1.5,-0.5 -1.5,0 -1.5,0.4 -1.5,-0.1 -1.5,-0.2 -1.5,0.1 -1.5,-0 -1.5,0.1 -1.5,-0.3 -1.5,0.4 -1.5,-0.4 -1.5,1.5 -1.5,-1.4 -1.5,-0.2 -1.5,0.2 -1.5,0.2 -1.5,-0 -1.5,0.5 -1.5,-0.8 -1.5,-0.1 -1.5,0.1 -1.5,0.2 -1.5,0.3 -1.5,-0.5 -1.5,0.3 -1.5,-0.3 -1.5,0.3 -1.5,0.9 -1.5,-0 -1.5,-1.4 -1.5,0.4 -1.5,0.4 -1.5,-0.6 -1.5,0.4 -1.5,0 -1.5,-0 -1.5,-0.3 -1.5,-0.2 -1.5,0.2 -1.5,-0.3 -1.5,0.3 -1.5,-0.3 -1.5,0.5 -1.5,-0.5 -1.5,0.1 -1.5,-0 -1.5,-0.1 -1.5,0.4 -1.5,-0.4 -1.5,0.3 -1.5,-0.3 -1.5,0.2 -1.5,0 -1.5,-0 -1.5,-0.2 -1.5,0.1 -1.5,-0.1 -1.5,0.1 -1.5,0.6 -1.5,-0.5 -1.5,-0.1 -1.5,-0 -1.5,-0.1 -1.5,0.1 -1.5,0.2 -1.5,-0 -1.5,-0.3 -1.5,0.3 -1.5,0.4 -1.5,-0.6 -1.5,-0.1 -1.5,0.1 -1.5,-0.1 -1.5,0.2 -1.5,-0.3 -1.5,1.3 -1.5,-1 -1.5,-0.3 -1.5,-0 -1.5,0.1 -1.5,-0.2 -1.5,1.9 -1.5,-1.2 -1.5,-0.2 -1.5,-0.2 -1.5,-0.2 -1.5,0.5 -1.5,-0.3 -1.5,1 -1.5,-1 -1.5,-0.2 -1.5,1.3 -1.5,-0.7 -1.5,-0.7 -1.5,0.1 -1.5,-0 -1.5,0.1 -1.5,-0.1 -1.5,-0.1 -1.5,0.1 -1.5,0 -1.5,1.2 -1.5,-1.1 -1.5,0.5 -1.5,-0.4 -1.5,0.2 -1.5,-0.1 -1.5,1 -1.5,-1.3 -1.5,-0 -1.5,0.5 -1.5,0.2 -1.5,-0.9 -1.5,0.3 -1.5,-0.1 -1.5,0.6 -1.5,-0.7 -1.5,0.2 -1.5,0.6 -1.5,-0.7 -1.5,-0 -1.5,-0 -1.5,-0.2 -1.5,-0 -1.5,1.3 -1.5,0.3 -1.5,-1.6 -1.5,0 -1.5,0.2 -1.5,-0.2 -1.5,0.1 -1.5,-0.2 -1.5,0.3 -1.5,0.9 -1.5,-1.2 -1.5,0.1 -1.5,0.3 -1.5,-0.2 -1.5,0.2 -1.5,-0.1 -1.5,0.2 -1.5,0.7 -1.5,-1.1 -1.5,-0 -1.5,0.4 -1.5,-0.3 -1.5,0.6 -1.5,-0.2 -1.5,-0.4 -1.5,0.6 -1.5,-0.8 -1.5,0.1 -1.5,-0 -1.5,0.1 -1.5,-0.1 -1.5,0.2 -1.5,1.4 -1.5,-1.6 -1.5,0.1 -1.5,0.7 -1.5,-1 -1.5,1.3 -1.5,-1 -1.5,-0.1 -1.5,0.1 -1.5,0.1 -1.5,-0.1 -1.5,-0.3 -1.5,0.2 -1.5,0.4 -1.5,-0.6 -1.5,0.1 -1.5,-0.1 -1.5,0.2 -1.5,1.5 -1.5,-1.7 -1.5,0 -1.5,0.2 -1.5,0.2 -1.5,-0.1 -1.5,-0.2 -1.5,0.1 -1.5,-0.2 -1.5,0.2 -1.5,0.3 -1.5,0.2 -1.5,-0.7 -1.5,-0.1 -1.5,0 -1.5,0.7 -1.5,-0.3 -1.5,-0.2 -1.5,-0.1 -1.5,0.8 -1.5,-0.6 -1.5,0.2 -1.5,-0.4 -1.5,0.2 -1.5,0.8 -1.5,-0.7 -1.5,-0.5 -1.5,0.6 -1.5,-0.4 -1.5,-0.1 -1.5,-0.1 -1.5,0.1 -1.5,1 -1.5,-1 -1.5,0.5 -1.5,-0.5 -1.5,-0 -1.5,0.1 -1.5,-0.1 -1.5,1.8 -1.5,-0.4 -1.5,-1.3 -1.5,0 -1.5,0.2 -1.5,-0.4 -1.5,0.5 -1.5,0.4 -1.5,-0.8 -1.5,0 -1.5,0 -1.5,1.4 -1.5,-1.4 -1.5,0.5 -1.5,-0.3 -1.5,-0.1 -1.5,0.1 -1.5,-0.2 -1.5,-0.1 -1.5,1.6 -1.5,-1.3 -1.5,0.1 -1.5,0.3 -1.5,-0.8 -1.5,-0 -1.5,0.8 -1.5,0.4 -1.5,-1 -1.5,0 -1.5,-0.1 -1.5,-0 -1.5,-0.1 -1.5,0.1 -1.5,-0.2 -1.5,0.3 -1.5,0.1 -1.5,-0.1 -1.5,-0.3 -1.5,0.9 -1.5,-0.9 -1.5,0.2 -1.5,0 -1.5,0.4 -1.5,-0.5 -1.5,0.8 -1.5,-0.6 -1.5,0.9 -1.5,-1.2 -1.5,1.9 -1.5,-1.6 -1.5,0.7 -1.5,-1 -1.5,0.5 -1.5,-0.4 -1.5,0.5 -1.5,-0.7 -1.5,-0 -1.5,0.1 -1.5,0.1 -1.5,0.1 -1.5,-0.1 -1.5,0 -1.5,0.2 -1.5,-0.2 -1.5,-0.2 -1.5,2.1 -1.5,-2.1 -1.5,0.5 -1.5,-0.6 -1.5,0.5 -1.5,-0.5 -1.5,0.3 -1.5,-0.3 -1.5,0.4 -1.5,0.2 -1.5,-0.7 -1.5,0.4 -1.5,-0.1 -1.5,-0.2 -1.5,1.3 -1.5,-0.9 -1.5,-0.3 -1.5,-0 -1.5,0.9 -1.5,-1 -1.5,-0.1 -1.5,-0.1 -1.5,0.3 -1.5,0.1 -1.5,1.1 -1.5,-1.4 -1.5,0 -1.5,-0.1 -1.5,0 -1.5,0.5 -1.5,-0.3 -1.5,0.4 -1.5,-0.5 -1.5,0.1 -1.5,0.2 -1.5,-0.2 -1.5,0.1 -1.5,-0.3 -1.5,0.9 -1.5,-0.5 -1.5,-0.6 -1.5,0.3 -1.5,-0.2 -1.5,0.7 -1.5,-0.3 -1.5,-0.3 -1.5,0.5 -1.5,-0.4 -1.5,-0.2 -1.5,0 -1.5,0.1 -1.5,-0.2 -1.5,-0 -1.5,0.4 -1.5,0.5 -1.5,-0.7 -1.5,0.1 -1.5,-0.2 -1.5,0.2 -1.5,-0.4 -1.5,0.8 -1.5,-0.6 -1.5,0.4 -1.5,-0.3 -1.5,-0.2 -1.5,1.6 -1.5,-1.5 -1.5,0.1 -1.5,-0.3 -1.5,-0 -1.5,0.3 -1.5,-0.4 -1.5,0.3 -1.5,0.1 -1.5,0.3 -1.5,-0.5 -1.5,-0.2 -1.5,0.4 -1.5,-0.5 -1.5,1.1 -1.5,-1 -1.5,0.4 -1.5,0.1 -1.5,-0.5 -1.5,1.6 -1.5,-1.5 -1.5,-0 -1.5,0.3 -1.5,-0.4 -1.5,0.1 -1.5,-0.2 -1.5,0.5 -1.5,-0.2 -1.5,-0.2 -1.5,0.6 -1.5,-0.5 -1.5,-0.2 -1.5,0 -1.5,0 -1.5,-0 -1.5,0.4 -1.5,-0.4 -1.5,-0 -1.5,0.4 -1.5,-0.6 -1.5,0.1 -1.5,0.1 -1.5,0.1 -1.5,0 -1.5,-0.1 -1.5,0.4 -1.5,-0.5 -1.5,0 -1.5,0.2 -1.5,0.2 -1.5,-0.1 -1.5,-0.2 -1.5,1.5 -1.5,-1.6 -1.5,-0 -1.5,0.1 -1.5,-0.2 -1.5,-0.1 -1.5,-0.1 -1.5,0.4 -1.5,-0.3 -1.5,-0 -1.5,0.5 -1.5,-0.5 -1.5,0.2 -1.5,-0 -1.5,-0.4 -1.5,1 -1.5,-0.5 -1.5,-0.4 -1.5,-0.3 -1.5,0.5 -1.5,-0.5 -1.5,0.3 -1.5,-0.2 -1.5,0.2 -1.5,-0.2 -1.5,0.9 -1.5,0 -1.5,-0.7 -1.5,-0.5 -1.5,0.6 -1.5,-0.3 -1.5,1.5 -1.5,-1.6 -1.5,-0 -1.5,0 -1.5,-0.4 -1.5,-0.1 -1.5,0.2 -1.5,0.2 -1.5,-0.6 -1.5,-0 -1.5,0.6 -1.5,-0.6 -1.5,1.2 -1.5,-0.3 -1.5,-1 -1.5,-0.1 -1.5,-0.2 -1.5,1.1 -1.5,-0.5 -1.5,0.2 -1.5,-0.1 -1.5,0.5 -1.5,-1.7 -1.5,0.6 -1.5,-0.6 -1.5,-0 -1.5,-0.1 -1.5,0 -1.5,-0 -1.5,0.1 -1.5,-0.3 -1.5,0 -1.5,-0.2 -1.5,-0.3 -1.5,-0.1 -1.5,0.5 -1.5,-0.4 -1.5,-0.1 -1.5,-0.1 -1.5,-0.3 -1.5,0 -1.5,0.2 -1.5,-0 -1.5,0.7 -1.5,-0.8 -1.5,-0.8 -1.5,0.3 -1.5,0.4 -1.5,-1 -1.5,-0.1 -1.5,0.3 -1.5,-0.2 -1.5,-0.2 -1.5,-0.3 -1.5,0.1 -1.5,-0 -1.5,-0 -1.5,-0.4 -1.5,-0.1 -1.5,0.1 -1.5,-0.2 -1.5,-0.7 -1.5,0.3 -1.5,-0.4 -1.5,-0.6 -1.5,0.3 -1.5,-0.8 -1.5,-0.3 -1.5,0.1 -1.5,-0.4 -1.5,0.4 -1.5,-1.1 -1.5,0.9 -1.5,-1.6 -1.5,0.8 -1.5,-0.2 -1.5,-1.8 -1.5,-0.7 -1.5,-0.6 -1.5,-0.5 -1.5,-0.7 -1.5,-0.4 -1.5,-0.6 -1.5,-0.2 -1.5,-0.6 -1.5,-0.4 -1.5,-0.6 -1.5,-0.7 -1.5,-1.1 -1.5,-1.3 -1.5,-0.9 -1.5,-3.2z" fill="#1ec0c8"/>
  <path d="M1129,575Q1131,578 1134,579" stroke="#1ec0c8" stroke-width="3" fill="none"/>
  <path d="M4,125.8l1.5,1.3 1.5,-0.4 1.5,0.8 1.5,-0 1.5,0.1 1.5,-0.3 1.5,0.4 1.5,-0.5 1.5,0.2 1.5,-0.4 1.5,0.5 1.5,-0.2 1.5,-2.6 1.5,2 1.5,1.1 1.5,-0.1 1.5,-2.4 1.5,1.7 1.5,0.4 1.5,0.2 1.5,-0.5 1.5,0.2 1.5,-0.3 1.5,0.6 1.5,0 1.5,0.2 1.5,-0.1 1.5,-0.1 1.5,0 1.5,-1.2 1.5,1.3 1.5,-0.2 1.5,-0.8 1.5,0.9 1.5,0.1 1.5,-1 1.5,1.1 1.5,-0.1 1.5,-0.4 1.5,-0.9 1.5,1.4 1.5,-0.9 1.5,0.9 1.5,-0.2 1.5,0.1 1.5,-0.3 1.5,-2.5 1.5,2.3 1.5,-0.3 1.5,0.5 1.5,-0.3 1.5,0.6 1.5,-0.1 1.5,-0.5 1.5,0.1 1.5,-0 1.5,0.3 1.5,0 1.5,-0.3 1.5,0.5 1.5,-0.4 1.5,-0.4 1.5,-0.5 1.5,1 1.5,-1.3 1.5,0.9 1.5,0.3 1.5,0.1 1.5,-1.4 1.5,1.2 1.5,-1.7 1.5,1.8 1.5,-1.1 1.5,-1.2 1.5,2.4 1.5,0.4 1.5,-2.3 1.5,1.1 1.5,-2.4 1.5,3.2 1.5,-0.1 1.5,0.1 1.5,0.4 1.5,-0 1.5,-0.3 1.5,-0.5 1.5,0.5 1.5,-0.2 1.5,0.1 1.5,-0.5 1.5,-0.1 1.5,0.9 1.5,-0.2 1.5,-0.4 1.5,-0.9 1.5,1.2 1.5,-0.6 1.5,0.9 1.5,-0.4 1.5,-2.6 1.5,2 1.5,-0.8 1.5,1.4 1.5,-0.2 1.5,0.4 1.5,-0.5 1.5,0.8 1.5,-0.7 1.5,0.7 1.5,-0.3 1.5,-0.2 1.5,-1 1.5,1.5 1.5,-0.1 1.5,-0.1 1.5,-0.7 1.5,0.8 1.5,-0.5 1.5,0.2 1.5,0.1 1.5,-0.4 1.5,-1.1 1.5,1.7 1.5,0.1 1.5,-1 1.5,0.9 1.5,-0.4 1.5,0.2 1.5,-0.1 1.5,0.2 1.5,-0.1 1.5,-2.9 1.5,3.2 1.5,-0.5 1.5,0.4 1.5,-0.1 1.5,-0 1.5,-0 1.5,-1.4 1.5,1.6 1.5,-0.5 1.5,0.4 1.5,-0.4 1.5,0.4 1.5,-1.3 1.5,1.3 1.5,-2.2 1.5,1.8 1.5,0.2 1.5,-0.6 1.5,-2.3 1.5,2.4 1.5,-0.5 1.5,0.8 1.5,-0 1.5,-0.3 1.5,0.8 1.5,-0.7 1.5,0.7 1.5,-0.5 1.5,0.2 1.5,-0.1 1.5,0.3 1.5,-0.6 1.5,-0.1 1.5,-0.2 1.5,-0 1.5,0.5 1.5,0.5 1.5,-0.4 1.5,-3.4 1.5,3.1 1.5,0 1.5,0.5 1.5,-0.8 1.5,1 1.5,-0.2 1.5,0.1 1.5,-0.6 1.5,-0.8 1.5,1.5 1.5,-0.5 1.5,0.4 1.5,-1.6 1.5,-0.2 1.5,0.7 1.5,1 1.5,-0.2 1.5,-0.1 1.5,-0.3 1.5,0.1 1.5,0.7 1.5,-0.3 1.5,0.2 1.5,-0.5 1.5,0.4 1.5,-0.6 1.5,0.3 1.5,0.2 1.5,-0.8 1.5,0.4 1.5,0.5 1.5,-0.8 1.5,-0.7 1.5,1.3 1.5,0.1 1.5,-1 1.5,-1.5 1.5,2.5 1.5,0.2 1.5,-0.1 1.5,-0.2 1.5,0.1 1.5,-3 1.5,3.1 1.5,-0.5 1.5,0.6 1.5,-0.1 1.5,-1.5 1.5,1.5 1.5,-2.9 1.5,2.7 1.5,-0.4 1.5,-0 1.5,0.7 1.5,-1.8 1.5,1.7 1.5,-1.7 1.5,1.6 1.5,0.1 1.5,-1.3 1.5,-0.2 1.5,1 1.5,0.2 1.5,0.4 1.5,-0.7 1.5,-1.6 1.5,1.6 1.5,0.6 1.5,-0.7 1.5,0.4 1.5,-2.5 1.5,1.9 1.5,0.2 1.5,0.2 1.5,-0.8 1.5,1.3 1.5,-3.2 1.5,3.2 1.5,0 1.5,-0.4 1.5,-0.3 1.5,0.2 1.5,-2.2 1.5,2.6 1.5,-0.4 1.5,0.6 1.5,0 1.5,-0.9 1.5,-0.7 1.5,1.3 1.5,-0.2 1.5,0.5 1.5,-0 1.5,0 1.5,-0.3 1.5,-0.3 1.5,-0.5 1.5,0.3 1.5,-2.1 1.5,1.9 1.5,0.2 1.5,0.8 1.5,-0.4 1.5,-1.8 1.5,1.6 1.5,-0.4 1.5,0.9 1.5,-0 1.5,-0.5 1.5,0 1.5,0.1 1.5,0.4 1.5,-0.3 1.5,-0.2 1.5,0.4 1.5,0.2 1.5,-2.3 1.5,2 1.5,-0.1 1.5,0 1.5,-0.1 1.5,-0.2 1.5,0.4 1.5,-0.2 1.5,-1.2 1.5,1.7 1.5,-1.3 1.5,1 1.5,-3.5 1.5,2.8 1.5,-0.3 1.5,0.8 1.5,-0.3 1.5,0 1.5,-0 1.5,0.6 1.5,-0.3 1.5,-1.3 1.5,1.6 1.5,-0.6 1.5,0.5 1.5,-0.2 1.5,-0 1.5,-0.1 1.5,-0.2 1.5,-0.4 1.5,-2.5 1.5,3.3 1.5,-0.4 1.5,0.7 1.5,-0.1 1.5,-0.5 1.5,-0 1.5,0.2 1.5,0 1.5,-0.2 1.5,0.7 1.5,-0.1 1.5,-0.6 1.5,-2.9 1.5,3.6 1.5,-0.1 1.5,-1 1.5,0.9 1.5,-0.4 1.5,0 1.5,0.3 1.5,-0.8 1.5,1.1 1.5,-0.4 1.5,0.4 1.5,-0.8 1.5,-2.6 1.5,2.6 1.5,0 1.5,0.7 1.5,-0.5 1.5,-0.4 1.5,0.4 1.5,0.3 1.5,-1.3 1.5,1.4 1.5,-2.8 1.5,2.8 1.5,-0.5 1.5,0 1.5,0.5 1.5,-0.1 1.5,-0.7 1.5,0.3 1.5,0.7 1.5,-0.8 1.5,0.5 1.5,-1.7 1.5,0.5 1.5,0.8 1.5,-3.1 1.5,3.7 1.5,-2.4 1.5,-0.2 1.5,1.4 1.5,-0.8 1.5,1.7 1.5,-1.4 1.5,-1.5 1.5,2.8 1.5,0.2 1.5,0.3 1.5,-0.2 1.5,-0.2 1.5,-0 1.5,-0.5 1.5,0.2 1.5,-0.4 1.5,0.7 1.5,-0.1 1.5,0.4 1.5,0 1.5,-0 1.5,-0.1 1.5,0.1 1.5,-0.6 1.5,0.6 1.5,-0.4 1.5,-2.2 1.5,2.3 1.5,0.3 1.5,-0.7 1.5,-0.5 1.5,-0.1 1.5,1.2 1.5,-1.2 1.5,1.2 1.5,-0.6 1.5,-2.6 1.5,3.4 1.5,-1.1 1.5,0.9 1.5,0.2 1.5,-2.2 1.5,1.7 1.5,-2.4 1.5,1.6 1.5,-1.2 1.5,2 1.5,0.2 1.5,-0.6 1.5,-0.3 1.5,1 1.5,-0 1.5,-0 1.5,0.2 1.5,-2.6 1.5,1.7 1.5,-0.2 1.5,0.7 1.5,0 1.5,0.3 1.5,-0.4 1.5,-0.2 1.5,0.6 1.5,0.1 1.5,-0.7 1.5,-0.5 1.5,0.9 1.5,0.2 1.5,-0.2 1.5,-0.1 1.5,0.4 1.5,-0.7 1.5,-0.9 1.5,1.2 1.5,-1.7 1.5,-1.5 1.5,3.3 1.5,0.2 1.5,-0.1 1.5,-0.4 1.5,-0.4 1.5,0 1.5,0.7 1.5,-0.6 1.5,-0.5 1.5,1 1.5,-2.7 1.5,2.3 1.5,0.7 1.5,-0.1 1.5,-0.1 1.5,-0.2 1.5,-0.1 1.5,0.5 1.5,-0.3 1.5,0.4 1.5,-0.6 1.5,0.4 1.5,-0.3 1.5,-0.1 1.5,0.3 1.5,-0.1 1.5,0.3 1.5,-0.5 1.5,0.3 1.5,-0 1.5,-0.6 1.5,0.8 1.5,-0.1 1.5,-0.8 1.5,0.2 1.5,0.2 1.5,-0.3 1.5,0.3 1.5,0.2 1.5,0.3 1.5,-1.1 1.5,0.4 1.5,-1.2 1.5,1.1 1.5,0.2 1.5,0.2 1.5,-1.3 1.5,1.1 1.5,0 1.5,0.3 1.5,-0.3 1.5,-0.3 1.5,-0.3 1.5,0.6 1.5,0.1 1.5,0.5 1.5,-1.5 1.5,0.8 1.5,0.3 1.5,-0.3 1.5,-0.2 1.5,0.6 1.5,0.3 1.5,-2.9 1.5,2.6 1.5,-0.9 1.5,1.3 1.5,-0.5 1.5,-0.7 1.5,1.1 1.5,-0.4 1.5,0.5 1.5,-0.5 1.5,-0.8 1.5,1 1.5,0.3 1.5,-1.7 1.5,1.2 1.5,0.2 1.5,-0.1 1.5,-2 1.5,1.7 1.5,0.4 1.5,-0.2 1.5,0 1.5,0.2 1.5,0.1 1.5,-1.6 1.5,1.1 1.5,-0.2 1.5,-1.7 1.5,2.2 1.5,0.4 1.5,-0.2 1.5,-0.8 1.5,-0.5 1.5,1 1.5,0.5 1.5,-1.2 1.5,0 1.5,0.4 1.5,0.8 1.5,-0 1.5,-1.3 1.5,0.9 1.5,-0.3 1.5,-0.2 1.5,-0.6 1.5,1.5 1.5,-2.5 1.5,2.4 1.5,-0.4 1.5,-0 1.5,-0.5 1.5,0.4 1.5,0.2 1.5,-0.1 1.5,0.2 1.5,-0.5 1.5,0.8 1.5,-0.3 1.5,-2.8 1.5,2.1 1.5,-1.5 1.5,2.4 1.5,-0.3 1.5,0.3 1.5,-0.2 1.5,-1.9 1.5,1.8 1.5,-1.6 1.5,1.2 1.5,-1.1 1.5,1.9 1.5,-0.2 1.5,-0.5 1.5,0.1 1.5,0.4 1.5,0.1 1.5,-1.2 1.5,0.5 1.5,0.4 1.5,-0.5 1.5,0.8 1.5,-0.2 1.5,-0.3 1.5,0.3 1.5,-0 1.5,-0.3 1.5,0.2 1.5,0.2 1.5,-0.3 1.5,-0.9 1.5,1.1 1.5,0.2 1.5,-0 1.5,-0.2 1.5,-0.6 1.5,0.6 1.5,0.2 1.5,-0.1 1.5,-0.5 1.5,0.5 1.5,-0.8 1.5,0.7 1.5,0 1.5,-0.1 1.5,-0.1 1.5,0.1 1.5,-2.8 1.5,1.3 1.5,0.3 1.5,0.8 1.5,-0 1.5,-1.6 1.5,2.3 1.5,-1.4 1.5,1.3 1.5,-0.2 1.5,-0.6 1.5,0.9 1.5,-0.4 1.5,-0.3 1.5,0.7 1.5,-0.4 1.5,-0.9 1.5,1.2 1.5,-1.5 1.5,1.1 1.5,0.4 1.5,-0.8 1.5,0.8 1.5,-0.8 1.5,0.8 1.5,-1.2 1.5,0.8 1.5,0.1 1.5,-1.3 1.5,1.4 1.5,0.3 1.5,-0.1 1.5,-0.8 1.5,0 1.5,0.3 1.5,0.2 1.5,0.4 1.5,-0.6 1.5,-1.3 1.5,1.9 1.5,-0.8 1.5,0.5 1.5,0.1 1.5,0.2 1.5,-0.6 1.5,0.4 1.5,-2.6 1.5,2.7 1.5,-1.1 1.5,1 1.5,-1.6 1.5,-1.6 1.5,-1.1 1.5,0.2 1.5,1.7 1.5,2.4 1.5,-2.2 1.5,-0.8 1.5,-1 1.5,-0.1 1.5,2.3 1.5,0.9 1.5,-2.3 1.5,-0.2 1.5,-0.4 1.5,1 1.5,0.9 1.5,-1.3 1.5,1.6 1.5,-1.7 1.5,0.9 1.5,0 1.5,0.9 1.5,1.5 1.5,-1.4 1.5,0.3 1.5,2.7 1.5,2.6 1.5,1.2 1.5,0.9 1.5,4.8 1.5,3.2 1.5,2.6 1.5,3 1.5,2.8 1.5,1.2 1.5,4.9 1.5,3.1 1.5,3 1.5,3 1.5,3.4 1.5,3.9 1.5,2.4 1.5,4.2 1.5,3.8 1.5,3.5 1.5,4.8 1.5,3.7 1.5,3.2 1.5,3.8 1.5,3.6 1.5,4.8 1.5,3.8 1.5,3.2 1.5,3.9 1.5,4.7 1.5,3.5 1.5,4.6 1.5,3.6 1.5,3.7 1.5,3.7 1.5,2.3 1.5,4 1.5,3.1 1.5,2.9 1.5,3.9 1.5,2.6 1.5,3.6 1.5,3.3 1.5,3 1.5,2.8 1.5,2.1 1.5,2.6 1.5,2.5 1.5,2.5 1.5,-1 1.5,4.1 1.5,3 1.5,2.2 1.5,1.4 1.5,3.5 1.5,2 1.5,2.4 1.5,2.8 1.5,-0.2 1.5,2.5 1.5,4 1.5,2.6 1.5,1.7 1.5,2.4 1.5,1.8 1.5,1.5 1.5,1.1 1.5,-0.9 1.5,5.7 1.5,1.9 1.5,1.1 1.5,2 1.5,1.3 1.5,1.1 1.5,1.6 1.5,0.5 1.5,2.3 1.5,0.2 1.5,1.7 1.5,1.2 1.5,1.8 1.5,-1.6 1.5,3.3 1.5,1.5 1.5,2.1 1.5,0.4 1.5,2 1.5,0.7 1.5,2.3 1.5,1.6 1.5,1.2 1.5,0.9 1.5,1.1 1.5,0.9 1.5,1.8 1.5,0.8 1.5,0.8 1.5,1.3 1.5,-1.4 1.5,3.5 1.5,0.9 1.5,0.6 1.5,1 1.5,1.2 1.5,-0.2 1.5,1.2 1.5,0.5 1.5,1 1.5,1 1.5,0.5 1.5,-2 1.5,3.8 1.5,-0.1 1.5,2 1.5,0.4 1.5,1.1 1.5,-0.5 1.5,1.9 1.5,0.8 1.5,0.4 1.5,0.9 1.5,0.9 1.5,-0.8 1.5,1.8 1.5,0.6 1.5,0.6 1.5,-0 1.5,1.5 1.5,-0.1 1.5,0.6 1.5,1.1 1.5,0.4 1.5,1 1.5,0.3 1.5,-0.2 1.5,1.4 1.5,0.3 1.5,0.3 1.5,-1 1.5,1.2 1.5,1 1.5,-1.3 1.5,1.6 1.5,1.3 1.5,0.6 1.5,0.4 1.5,-0.1 1.5,-2 1.5,1.6 1.5,-1.2 1.5,3.7 1.5,0.5 1.5,-2.1 1.5,2.9 1.5,0 1.5,0.7 1.5,0.1 1.5,0.4 1.5,0.2 1.5,0.8 1.5,0.1 1.5,0.6 1.5,0.4 1.5,0.2 1.5,0.2 1.5,0 1.5,0.4 1.5,-0.4 1.5,-0.5 1.5,0.2 1.5,1.7 1.5,0.3 1.5,0.5 1.5,0.3 1.5,0.2 1.5,0.1 1.5,-0 1.5,-0.2 1.5,-1.4 1.5,1.9 1.5,0.8 1.5,-0.3 1.5,0.4 1.5,0.5 1.5,0.3 1.5,-1.1 1.5,0.4 1.5,1.2 1.5,-0.7 1.5,-0.1 1.5,1.3 1.5,-3.4 1.5,3.6 1.5,-1.5 1.5,2 1.5,-2.1 1.5,2.2 1.5,0.3 1.5,0.2 1.5,0.2 1.5,-0.6 1.5,0.4 1.5,0 1.5,0.5 1.5,-0.4 1.5,0.8 1.5,0.3 1.5,0.1 1.5,-0.5 1.5,-0.1 1.5,1 1.5,-0.2 1.5,-0.2 1.5,0.6 1.5,0.1 1.5,-0.9 1.5,-0.1 1.5,1.6 1.5,-0.1 1.5,0.1 1.5,0.4 1.5,0.1 1.5,-0.3 1.5,-1 1.5,0.1 1.5,0.4 1.5,1.1 1.5,-2.9 1.5,2.7 1.5,0.3 1.5,-0.3 1.5,0.3 1.5,-2.1 1.5,-0.3 1.5,1.5 1.5,1.6 1.5,0 1.5,-0.2 1.5,-1.4 1.5,0.1 1.5,1.1 1.5,-0.6 1.5,1.4 1.5,-0.1 1.5,0.2 1.5,-0.3 1.5,0.4 1.5,-0.2 1.5,-2.2 1.5,1.9 1.5,0.6 1.5,-0.5 1.5,0.3 1.5,0.3 1.5,-1.4 1.5,0.4 1.5,-0.2 1.5,0.1 1.5,1.2 1.5,-0.3 1.5,0.5 1.5,-0.3 1.5,-0.1 1.5,-1.1 1.5,1.8 1.5,0.1 1.5,-0.3 1.5,-0 1.5,-2.7 1.5,3.3 1.5,-0.5 1.5,-0.8 1.5,0.6 1.5,0.9 1.5,-0.3 1.5,-0.1 1.5,0 1.5,-0.1 1.5,0.4 1.5,0.2 1.5,-1.2 1.5,1.3 1.5,-0.2 1.5,-0 1.5,-0.4 1.5,0.1 1.5,0.5 1.5,-0.9 1.5,0.5 1.5,0.3 1.5,-0 1.5,-1.8 1.5,1.2 1.5,0.5 1.5,-2.5 1.5,2.7 1.5,-0.3 1.5,0.5 1.5,0.1 1.5,-0.3 1.5,0.1 1.5,0.2 1.5,-0.5 1.5,0.3 1.5,0.1 1.5,-0.4 1.5,0 1.5,0.6 1.5,-0.8 1.5,-0.4 1.5,0.9 1.5,0.3 1.5,0 1.5,-0.3 1.5,-0 1.5,-1 1.5,1.5 1.5,-0.9 1.5,-0.3 1.5,0.8 1.5,-1.1 1.5,-1.1 1.5,2.5 1.5,-0.2 1.5,0.1 1.5,0.2 1.5,0 1.5,-0.2 1.5,-0.2 1.5,0.5 1.5,-0.1 1.5,0 1.5,-0.1 1.5,-0.1 1.5,-0.5 1.5,-0 1.5,0.5 1.5,0.5 1.5,-0.2 1.5,-0.5 1.5,0.7 1.5,-0.1 1.5,-0.2 1.5,-0.2 1.5,-3 1.5,0.5 1.5,2.6 1.5,0.2 1.5,-2.6 1.5,2.7 1.5,-0.4 1.5,0.3 1.5,-0.4 1.5,0.5 1.5,-0.4 1.5,0.5 1.5,-3.5 1.5,2.8 1.5,0.5 1.5,0.4 1.5,-0.6 1.5,0.3 1.5,0.3 1.5,-0.1 1.5,-0.8 1.5,-0 1.5,-1.2 1.5,1 1.5,0.9 1.5,-0.4 1.5,0.1 1.5,0.1 1.5,0.5 1.5,-0.3 1.5,0.3 1.5,-3.6 1.5,3.4 1.5,-0.2 1.5,-0.1 1.5,0.2 1.5,-0.8 1.5,0.8 1.5,-0.3 1.5,-0.5 1.5,0.6 1.5,0 1.5,0.5 1.5,-0.4 1.5,0 1.5,-1 1.5,1.3 1.5,-0.5 1.5,-0.2 1.5,0.2 1.5,0.3 1.5,-0.1 1.5,0.4 1.5,-0.7 1.5,0.3 1.5,-2.4 1.5,2.5 1.5,-0.8 1.5,0.1 1.5,1.2 1.5,-0 1.5,-0.1 1.5,-0.2 1.5,-0.5 1.5,0.2 1.5,-1.3 1.5,1.7 1.5,-0.5 1.5,0.5 1.5,-0.2 1.5,-0.4 1.5,-2.4 1.5,3.1 1.5,-0.3 1.5,-1 1.5,1.2 1.5,-0.1 1.5,0.1 1.5,-0 1.5,-2.8 1.5,2.4 1.5,0.1 1.5,-2.5 1.5,3 1.5,-0.5 1.5,0.3 1.5,-1.7 1.5,1.6 1.5,-0.8 1.5,-2.4 1.5,3.5 1.5,-1.6 1.5,1.5 1.5,-0 1.5,0 1.5,-0.4 1.5,-0.5 1.5,0.8 1.5,0.2 1.5,-0.2 1.5,-0.1 1.5,-0.3 1.5,0.4 1.5,-0.1 1.5,-0.1 1.5,-0.2 1.5,0.4 1.5,-0.3 1.5,0.3 1.5,-0.6 1.5,0.4 1.5,-0 1.5,-0.1 1.5,-2.2 1.5,2.3 1.5,-1.1 1.5,-0.2 1.5,-0.1 1.5,1.8 1.5,-0.4 1.5,-2.8 1.5,2.6 1.5,-0 1.5,0.1 1.5,0.1 1.5,-1.6 1.5,1.8 1.5,-0.9 1.5,1.2 1.5,0 1.5,-0.5 1.5,0.2 1.5,-0.6 1.5,0.2 1.5,-0.6 1.5,0.8 1.5,-2.1 1.5,0.4 1.5,1.5 1.5,0.3 1.5,-1.7 1.5,2.1 1.5,-0.2 1.5,-0.5 1.5,-1 1.5,1.4 1.5,0.2 1.5,-0.1 1.5,0.1 1.5,0.1 1.5,0 1.5,0 1.5,-0.1 1.5,-0 1.5,-0.2 1.5,-0.3 1.5,-0.2 1.5,0.1 1.5,0.6 1.5,-0.3 1.5,0.4 1.5,-0 1.5,0 1.5,0.2 1.5,-0.2 1.5,-0.8 1.5,0.7 1.5,0.2 1.5,-0.4 1.5,0.5 1.5,-0.9 1.5,-1.7 1.5,2 1.5,0.3 1.5,-0.3 1.5,0.5 1.5,-0.2 1.5,-0 1.5,-0.6 1.5,-0.9 1.5,1.2 1.5,0.3 1.5,-0 1.5,-0 1.5,0.3 1.5,-1.6 1.5,1.2 1.5,0.4 1.5,-0.1 1.5,0 1.5,-0.4 1.5,0.4 1.5,0.1 1.5,-3.3 1.5,1.7 1.5,1.2 1.5,0.1 1.5,-0.4 1.5,0.5 1.5,0.2 1.5,-0.6 1.5,0.2 1.5,-0 1.5,0.1 1.5,0.3 1.5,-1.6 1.5,1.4 1.5,0.2 1.5,-1.9 1.5,1.5 1.5,0.3 1.5,-0.6 1.5,0.7 1.5,0.1 1.5,-2.4 1.5,1.5 1.5,0.5 1.5,-0.6 1.5,0.8 1.5,-0.9 1.5,0.9 1.5,-0.9 1.5,0.2 1.5,0.6 1.5,-0.4 1.5,-0.2 1.5,0.5 1.5,0.5 1.5,-0.3 1.5,0.2 1.5,-0.3 1.5,0.3 1.5,-0.6 1.5,0.6 1.5,0 1.5,-0.4 1.5,0.5 1.5,-0.3 1.5,-0.4 1.5,0.5 1.5,-0.4 1.5,0.3 1.5,0.1 1.5,0 1.5,-3.7 1.5,3 1.5,0.8 1.5,0.1 1.5,-0.1 1.5,-0.3 1.5,0.4 1.5,-0.5 1.5,0 1.5,-1 1.5,1.2 1.5,-0.8 1.5,-0.1 1.5,0.4 1.5,0.6 1.5,-0.1 1.5,0.4 1.5,-3.3 1.5,1.7 1.5,1.6 1.5,-0 1.5,-2.6 1.5,2.5 1.5,-3.4 1.5,3.3 1.5,-0 1.5,-0.3 1.5,0 1.5,-0.2 1.5,-0.4 1.5,-0.7 1.5,0.7 1.5,1 1.5,-0.1 1.5,-0.1 1.5,-1 1.5,1.2 1.5,-0.5 1.5,-1.7 1.5,1.7 1.5,0.4 1.5,-0.1 1.5,-0 1.5,-0.5 1.5,0.4 1.5,0.1 1.5,-0.8 1.5,1.2 1.5,-0.8 1.5,-0.2 1.5,0.7 1.5,-2.1 1.5,2.4 1.5,-0.4 1.5,0.4 1.5,-0.3 1.5,0 1.5,0.3 1.5,-0.6 1.5,0.2 1.5,-0.2 1.5,0.2 1.5,0.2 1.5,-0 1.5,-1.4 1.5,0.5 1.5,0.4 1.5,0.2 1.5,0 1.5,-2.5 1.5,2.8 1.5,0.2 1.5,-0.8 1.5,-0.1 1.5,-0.8 1.5,1 1.5,0.7 1.5,0 1.5,0.1 1.5,-0.5 1.5,-0.5 1.5,-1 1.5,0.8 1.5,1.1 1.5,-0.5 1.5,0.3 1.5,-0.3 1.5,0.2 1.5,-1.7 1.5,2 1.5,-2.8 1.5,2.7 1.5,-3.4 1.5,3.5 1.5,0.2 1.5,-0.1 1.5,-0.6 1.5,0.5 1.5,-0 1.5,-0.3 1.5,-0 1.5,-0.3 1.5,0.5 1.5,-0.1 1.5,0.1 1.5,-0.1 1.5,-0.5 1.5,-0.5 1.5,0.8 1.5,0.5 1.5,-0.1 1.5,-0.5 1.5,-0.3 1.5,0.9 1.5,-0.6 1.5,0.1 1.5,0.2 1.5,-2.2 1.5,2.6 1.5,-1.2 1.5,-0.6 1.5,-0.8 1.5,2.3 1.5,-1.5 1.5,1.7 1.5,0.1 1.5,-0.1 1.5,-0.1 1.5,-0.7 1.5,-0.1 1.5,0.5 1.5,-0.1 1.5,-1.8 1.5,1.7 1.5,0.7 1.5,-1 1.5,0.2 1.5,-3.3 1.5,3.4 1.5,0.2 1.5,0.6 1.5,-0.4 1.5,-0.4 1.5,0.1 1.5,0.3 1.5,-0.3 1.5,0.8 1.5,-0.8 1.5,0.2 1.5,0.4 1.5,-0.1 1.5,-0.7 1.5,0.3 1.5,-2.3 1.5,2.9 1.5,-0.4 1.5,-0.1 1.5,-0 1.5,0.2 1.5,-1.4 1.5,1.6 1.5,0.1 1.5,0 1.5,-3.9 1.5,3.2 1.5,0.6 1.5,-0.8 1.5,0.6 1.5,-0 1.5,0.2 1.5,0.1 1.5,0 1.5,-1.4 1.5,1.1 1.5,0.2 1.5,0.2 1.5,-0.1 1.5,-1 1.5,-0.3 1.5,1.5 1.5,-1.1 1.5,0.1 1.5,0.8 1.5,-0.9 1.5,1 1.5,-0.8 1.5,-0.6 1.5,0.1 1.5,-1.2 1.5,2.3 1.5,-0.2 1.5,-0.4 1.5,-3.1 1.5,1.1 1.5,2.8 1.5,0.1 1.5,-0.2 1.5,0.1 1.5,-0.2 1.5,0.1 1.5,0.1 1.5,-0.8 1.5,-2.1 1.5,2.9 1.5,-0.1 1.5,-3.4 1.5,0.9 1.5,2.4 1.5,-0.5 1.5,0.8 1.5,-0.5 1.5,0.5 1.5,-3.2 1.5,2.6 1.5,0.4 1.5,-0.6 1.5,0.4 1.5,-0.3 1.5,0.6 1.5,-0.3 1.5,-1.1 1.5,0.9 1.5,0.2 1.5,0.4 1.5,-2.9 1.5,2.8 1.5,-0 1.5,0 1.5,-0.1 1.5,-0.6 1.5,0.9 1.5,-1.2 1.5,0.6 1.5,-1.3 1.5,1.5 1.5,0 1.5,-0.1 1.5,-0.1 1.5,0.3 1.5,-0.2 1.5,-0.8 1.5,1 1.5,0.1 1.5,-0.3 1.5,-0.6 1.5,0.3 1.5,0 1.5,0.2 1.5,0.2 1.5,0.3 1.5,-0.2 1.5,0.3 1.5,-0.1 1.5,0 1.5,-0.9 1.5,1 1.5,-1.5 1.5,1 1.5,0.5 1.5,-0.7 1.5,0.8 1.5,-0.2 1.5,0.2 1.5,-0.4 1.5,0.4 1.5,-0.2 1.5,-2.3 1.5,2.2 1.5,-0.4 1.5,0.2 1.5,0.3 1.5,-0.3 1.5,-0.5 1.5,0 1.5,0.1 1.5,0.7 1.5,-0.1 1.5,0.2 1.5,-0.9 1.5,0.1 1.5,0.8 1.5,-0.4 1.5,-0.6 1.5,0.1 1.5,0.5 1.5,0.3 1.5,-0 1.5,-1.6 1.5,1.5 1.5,-0.1 1.5,0.3 1.5,-0.9 1.5,0.8 1.5,-3.9 1.5,1.7 1.5,2.3 1.5,-2 1.5,-0.6 1.5,2.2 1.5,-0.3 1.5,-0.5 1.5,0.3 1.5,1.1 1.5,-0.2 1.5,-0.1 1.5,-0.3 1.5,0.4 1.5,-0.4 1.5,0.5 1.5,-0.2 1.5,-0.3 1.5,-0 1.5,-0 1.5,0.4 1.5,-1.2 1.5,1.4 1.5,-1.2 1.5,1.2 1.5,0.1 1.5,-3 1.5,-0.2 1.5,2.2 1.5,0.5 1.5,0.4 1.5,-1 1.5,0.4 1.5,0.4 1.5,-2 1.5,1.9 1.5,-0.6 1.5,0.4 1.5,-2 1.5,1 1.5,1.3 1.5,-0.1 1.5,-3.2 1.5,3.4 1.5,-0.4 1.5,0.3 1.5,-1.2 1.5,1.4 1.5,-0.7 1.5,0.1 1.5,-1.5 1.5,2.2 1.5,-1.7 1.5,1.5 1.5,-0.3 1.5,-0.6 1.5,-0.6 1.5,1.7 1.5,-0.5 1.5,-0.6 1.5,1.1 1.5,-0.2 1.5,0.2 1.5,-1.4 1.5,-1.4 1.5,2.1 1.5,0.5 1.5,-3 1.5,3.2 1.5,-0.1 1.5,0.2 1.5,-3.5 1.5,3.3 1.5,-0.6 1.5,0.4 1.5,-0.9 0,7 -1.5,0.7 -1.5,-0.6 -1.5,0.2 -1.5,-0.5 -1.5,0.3 -1.5,3.2 -1.5,-2.7 -1.5,-0.7 -1.5,0.3 -1.5,3 -1.5,-3.6 -1.5,0.6 -1.5,-0.6 -1.5,0.3 -1.5,-0.2 -1.5,0.5 -1.5,-0.6 -1.5,0.2 -1.5,0.2 -1.5,0.6 -1.5,-0.9 -1.5,0.1 -1.5,1.5 -1.5,-0.9 -1.5,0.5 -1.5,-1.1 -1.5,1.8 -1.5,-1.3 -1.5,0.4 -1.5,-1 -1.5,-0.1 -1.5,0.1 -1.5,0.2 -1.5,2.6 -1.5,-3 -1.5,0.6 -1.5,0.5 -1.5,-1.1 -1.5,-0 -1.5,1.1 -1.5,0 -1.5,-1 -1.5,2.8 -1.5,-2.5 -1.5,0.4 -1.5,-0.8 -1.5,0.2 -1.5,0 -1.5,2.8 -1.5,-2.5 -1.5,-0.5 -1.5,0.5 -1.5,0.2 -1.5,2.4 -1.5,-3.1 -1.5,0.2 -1.5,1.1 -1.5,-0.3 -1.5,2 -1.5,-1.6 -1.5,-0.6 -1.5,-0.7 -1.5,1.6 -1.5,-0.9 -1.5,-0.1 -1.5,1.1 -1.5,-1.8 -1.5,1.6 -1.5,-0.4 -1.5,-1.1 -1.5,0.4 -1.5,-0.6 -1.5,0.5 -1.5,-0.5 -1.5,0.2 -1.5,0.3 -1.5,-0.5 -1.5,0.8 -1.5,-0.5 -1.5,0.2 -1.5,0.5 -1.5,0.3 -1.5,-1.2 -1.5,2.8 -1.5,-2.7 -1.5,0.2 -1.5,-0.3 -1.5,0.4 -1.5,-0.5 -1.5,0.2 -1.5,2.8 -1.5,0.5 -1.5,-3.5 -1.5,0.6 -1.5,0.7 -1.5,-0.9 -1.5,1 -1.5,-1.3 -1.5,1.4 -1.5,-1.1 -1.5,-0.2 -1.5,-0.3 -1.5,3.8 -1.5,-3.1 -1.5,0.2 -1.5,-0.6 -1.5,-0 -1.5,1.9 -1.5,-2.1 -1.5,0.1 -1.5,0.3 -1.5,-0.1 -1.5,1.2 -1.5,-1.5 -1.5,-0.1 -1.5,0.8 -1.5,-0.4 -1.5,0.2 -1.5,-0.6 -1.5,3 -1.5,-2.9 -1.5,0.7 -1.5,-0.8 -1.5,0.5 -1.5,-0.5 -1.5,0.4 -1.5,0.7 -1.5,-0.2 -1.5,-0.6 -1.5,-0.3 -1.5,1.3 -1.5,0.3 -1.5,-0.9 -1.5,-0.6 -1.5,0.2 -1.5,0 -1.5,-0.2 -1.5,-0 -1.5,0.5 -1.5,2.4 -1.5,-2.5 -1.5,-0.3 -1.5,3 -1.5,-3 -1.5,0.2 -1.5,0.2 -1.5,-0.5 -1.5,0.5 -1.5,-0.1 -1.5,0 -1.5,-0.1 -1.5,1.4 -1.5,-1.4 -1.5,0.3 -1.5,-0.3 -1.5,-0.2 -1.5,-0.3 -1.5,0.3 -1.5,0.2 -1.5,0.3 -1.5,-0.9 -1.5,0.8 -1.5,2.1 -1.5,-2.8 -1.5,0.2 -1.5,-0.2 -1.5,3.3 -1.5,-3.4 -1.5,0 -1.5,0.5 -1.5,2.1 -1.5,-2 -1.5,-0.5 -1.5,0.4 -1.5,2.7 -1.5,-2.9 -1.5,0.9 -1.5,-1 -1.5,0 -1.5,0.7 -1.5,-0.9 -1.5,0.7 -1.5,-0.8 -1.5,0.7 -1.5,2.3 -1.5,-2.7 -1.5,0.2 -1.5,-0.3 -1.5,0.6 -1.5,0.5 -1.5,1.6 -1.5,-2.6 -1.5,2.5 -1.5,-1.8 -1.5,-1 -1.5,0.6 -1.5,0.1 -1.5,1.1 -1.5,-1.1 -1.5,-0.3 -1.5,-0.4 -1.5,0.2 -1.5,0.5 -1.5,-0.1 -1.5,2.4 -1.5,-2.3 -1.5,-0.3 -1.5,0.5 -1.5,0.2 -1.5,0.8 -1.5,-1.5 -1.5,0.4 -1.5,0.1 -1.5,-0.3 -1.5,-0.5 -1.5,0.1 -1.5,0.6 -1.5,-0.8 -1.5,0.5 -1.5,0.3 -1.5,0.1 -1.5,-0.5 -1.5,-0.2 -1.5,-0 -1.5,-0.2 -1.5,0.8 -1.5,-0.5 -1.5,-0.2 -1.5,-0.1 -1.5,0.7 -1.5,0.1 -1.5,0.1 -1.5,-0.3 -1.5,-0.1 -1.5,-0.2 -1.5,-0.1 -1.5,-0.3 -1.5,1.9 -1.5,-1.5 -1.5,0.5 -1.5,0.2 -1.5,-0.2 -1.5,-0.7 -1.5,0.6 -1.5,-0.5 -1.5,-0.2 -1.5,2.2 -1.5,-2.2 -1.5,0.3 -1.5,2.9 -1.5,-2.7 -1.5,0.4 -1.5,0.1 -1.5,-0.4 -1.5,-0.6 -1.5,2.9 -1.5,-2.3 -1.5,-0.7 -1.5,0.1 -1.5,1.5 -1.5,-1.7 -1.5,1.5 -1.5,-1.2 -1.5,1.1 -1.5,-1.1 -1.5,-0.1 -1.5,-0.1 -1.5,2.4 -1.5,-2 -1.5,1 -1.5,-1.6 -1.5,0.4 -1.5,0.5 -1.5,-0.1 -1.5,0.5 -1.5,-1.2 -1.5,0.1 -1.5,-0.2 -1.5,0.2 -1.5,0.2 -1.5,0.4 -1.5,-0.7 -1.5,0.6 -1.5,-0.7 -1.5,0.8 -1.5,-0 -1.5,0.9 -1.5,-1.4 -1.5,-0.3 -1.5,1.7 -1.5,-1.5 -1.5,0.4 -1.5,-0.3 -1.5,-0.1 -1.5,0.3 -1.5,-0.1 -1.5,0.1 -1.5,2 -1.5,-1.7 -1.5,-0.8 -1.5,0.3 -1.5,0.1 -1.5,2.5 -1.5,-2.4 -1.5,-0.1 -1.5,-0.3 -1.5,0.5 -1.5,0.3 -1.5,-0.9 -1.5,1 -1.5,-0.1 -1.5,0.8 -1.5,-1.8 -1.5,0.9 -1.5,-0.5 -1.5,-0.3 -1.5,0.4 -1.5,-0.3 -1.5,0.3 -1.5,-0.5 -1.5,1.1 -1.5,-1 -1.5,0.3 -1.5,0 -1.5,0.1 -1.5,-0.3 -1.5,-0.2 -1.5,0.7 -1.5,0.3 -1.5,2.9 -1.5,-3.1 -1.5,-0.7 -1.5,0.3 -1.5,1.3 -1.5,1.8 -1.5,-3.5 -1.5,0.4 -1.5,-0 -1.5,-0.1 -1.5,0.8 -1.5,-1.1 -1.5,0 -1.5,0 -1.5,0.2 -1.5,2.6 -1.5,-2.4 -1.5,-0.2 -1.5,-0.2 -1.5,0.3 -1.5,0.1 -1.5,0.6 -1.5,1 -1.5,-1.5 -1.5,-0.1 -1.5,-0.2 -1.5,0.3 -1.5,0.1 -1.5,3.6 -1.5,-1.8 -1.5,-2.4 -1.5,0.2 -1.5,0.9 -1.5,1.9 -1.5,-3.2 -1.5,0.8 -1.5,0.2 -1.5,-0.8 -1.5,-0.2 -1.5,0.6 -1.5,-0.4 -1.5,-0.2 -1.5,2.8 -1.5,-1.9 -1.5,-0.2 -1.5,-0.1 -1.5,-0.6 -1.5,0 -1.5,0.2 -1.5,0.1 -1.5,0.8 -1.5,-0.3 -1.5,-0.5 -1.5,-0.4 -1.5,1.5 -1.5,-0.5 -1.5,-0.8 -1.5,0.1 -1.5,2.2 -1.5,1.2 -1.5,-3.3 -1.5,0.2 -1.5,-0.3 -1.5,-0.2 -1.5,0.2 -1.5,0.1 -1.5,3.3 -1.5,-3.5 -1.5,3.4 -1.5,-3 -1.5,0 -1.5,-0.4 -1.5,-0 -1.5,1.5 -1.5,-0.9 -1.5,-0.5 -1.5,0.5 -1.5,-0.2 -1.5,0.4 -1.5,-0.3 -1.5,-0.6 -1.5,0.9 -1.5,-0.5 -1.5,-0.3 -1.5,0.2 -1.5,0.4 -1.5,-0.8 -1.5,-0.1 -1.5,0 -1.5,0.7 -1.5,-0.4 -1.5,0.8 -1.5,-0.9 -1.5,0.8 -1.5,-0.9 -1.5,1.1 -1.5,2 -1.5,-2.8 -1.5,-0.3 -1.5,0.1 -1.5,0.1 -1.5,2.6 -1.5,-2.9 -1.5,0.2 -1.5,0.6 -1.5,-0.7 -1.5,0.3 -1.5,-0.1 -1.5,-0.1 -1.5,1 -1.5,-1.2 -1.5,0.5 -1.5,-0.4 -1.5,2.9 -1.5,-2.3 -1.5,-0.4 -1.5,0 -1.5,-0.3 -1.5,0.5 -1.5,0.8 -1.5,-0.5 -1.5,-0.6 -1.5,0.4 -1.5,-0.2 -1.5,0.2 -1.5,-0.6 -1.5,0.4 -1.5,0.4 -1.5,0.1 -1.5,-0.8 -1.5,-0.2 -1.5,0.4 -1.5,0.1 -1.5,1.7 -1.5,0.8 -1.5,-0.8 -1.5,-1.8 -1.5,-0.4 -1.5,2.2 -1.5,-1.1 -1.5,-0.8 -1.5,-0.1 -1.5,0.4 -1.5,0.1 -1.5,-0.2 -1.5,0.1 -1.5,-0.5 -1.5,1 -1.5,0.2 -1.5,-0.9 -1.5,-0.3 -1.5,0.4 -1.5,0.3 -1.5,-0.6 -1.5,0.7 -1.5,-0.6 -1.5,0.2 -1.5,-0.3 -1.5,-0.1 -1.5,0.4 -1.5,0.6 -1.5,0.8 -1.5,-1.5 -1.5,-0 -1.5,-0.3 -1.5,0.4 -1.5,0.1 -1.5,-0.7 -1.5,1.2 -1.5,-0.6 -1.5,1 -1.5,-1 -1.5,-0.1 -1.5,-0.3 -1.5,0.1 -1.5,1.2 -1.5,-1.5 -1.5,1 -1.5,-0.5 -1.5,-0.1 -1.5,0.2 -1.5,0.7 -1.5,-0.5 -1.5,-0.8 -1.5,0.8 -1.5,0.4 -1.5,-1.1 -1.5,-0.2 -1.5,1.3 -1.5,-0.3 -1.5,-0.9 -1.5,3.6 -1.5,-3.4 -1.5,0.4 -1.5,2.5 -1.5,-2.3 -1.5,-0.2 -1.5,-0.3 -1.5,-0 -1.5,0 -1.5,-0.1 -1.5,2.4 -1.5,-1.9 -1.5,0.5 -1.5,-1.1 -1.5,0.3 -1.5,0.5 -1.5,-0.5 -1.5,-0.2 -1.5,0.3 -1.5,-0.6 -1.5,0.6 -1.5,1.3 -1.5,-1.6 -1.5,0.4 -1.5,1.1 -1.5,-1.6 -1.5,0 -1.5,-0 -1.5,1.1 -1.5,-1.2 -1.5,-0.1 -1.5,1.4 -1.5,2.4 -1.5,-3.2 -1.5,0.1 -1.5,-0.6 -1.5,0.9 -1.5,-0.1 -1.5,-0 -1.5,-0.6 -1.5,-0.4 -1.5,0.6 -1.5,-0.5 -1.5,2 -1.5,-1.9 -1.5,0.5 -1.5,0.7 -1.5,-1.3 -1.5,0.5 -1.5,-0.6 -1.5,3.3 -1.5,-3.3 -1.5,2.9 -1.5,-2.9 -1.5,-0.1 -1.5,0.4 -1.5,0.1 -1.5,0.4 -1.5,-0.4 -1.5,-0.4 -1.5,1 -1.5,-0.2 -1.5,-0.7 -1.5,0.5 -1.5,0 -1.5,0.1 -1.5,-0.5 -1.5,-0.3 -1.5,0.8 -1.5,-0.7 -1.5,0.1 -1.5,0.1 -1.5,-0.1 -1.5,0.1 -1.5,-0.3 -1.5,-0.1 -1.5,1 -1.5,-0.1 -1.5,1.2 -1.5,0 -1.5,-1.8 -1.5,-0.3 -1.5,0 -1.5,0.5 -1.5,0.2 -1.5,-0.7 -1.5,-0 -1.5,0.2 -1.5,-0 -1.5,-0.2 -1.5,0.6 -1.5,0.2 -1.5,-0 -1.5,1.3 -1.5,-1.3 -1.5,0.3 -1.5,-0.9 -1.5,-0.2 -1.5,0.3 -1.5,-0.4 -1.5,-0.1 -1.5,0.5 -1.5,0.3 -1.5,-0.9 -1.5,0.4 -1.5,2.4 -1.5,-2.2 -1.5,-0.3 -1.5,-0.1 -1.5,-0 -1.5,0 -1.5,-0.2 -1.5,0.8 -1.5,2.1 -1.5,-2.7 -1.5,1.7 -1.5,-1.7 -1.5,0.1 -1.5,-0.4 -1.5,0.8 -1.5,-0.7 -1.5,-0.2 -1.5,2.2 -1.5,0.7 -1.5,-0.5 -1.5,-1.7 -1.5,-0.4 -1.5,0.4 -1.5,-0.4 -1.5,2.2 -1.5,-2.2 -1.5,-0.4 -1.5,3 -1.5,-2.7 -1.5,-0 -1.5,-0.4 -1.5,-0.1 -1.5,1.1 -1.5,-0.9 -1.5,0.8 -1.5,-0.6 -1.5,-0.5 -1.5,0 -1.5,0.2 -1.5,-0 -1.5,0.5 -1.5,0.2 -1.5,-0.3 -1.5,0.4 -1.5,-1.1 -1.5,0.7 -1.5,-0.4 -1.5,-0.3 -1.5,0.2 -1.5,0.2 -1.5,0.3 -1.5,-0.2 -1.5,-0.4 -1.5,-0.3 -1.5,0.4 -1.5,2.4 -1.5,-2 -1.5,-0.7 -1.5,0.3 -1.5,0 -1.5,-0.3 -1.5,0.1 -1.5,0.3 -1.5,0.1 -1.5,-0.7 -1.5,-0.3 -1.5,0.1 -1.5,2.9 -1.5,-3.3 -1.5,0 -1.5,0.4 -1.5,-0.6 -1.5,0.2 -1.5,-0.2 -1.5,-0 -1.5,0.5 -1.5,-0.6 -1.5,1.6 -1.5,-1.4 -1.5,0.3 -1.5,-0.2 -1.5,-0.6 -1.5,-0.1 -1.5,3.7 -1.5,-3.6 -1.5,-0 -1.5,0 -1.5,-0.1 -1.5,0.5 -1.5,0.5 -1.5,-0.8 -1.5,-0.4 -1.5,1.7 -1.5,0.6 -1.5,-2.3 -1.5,0.1 -1.5,-0.1 -1.5,0.1 -1.5,2.4 -1.5,-3.2 -1.5,1.1 -1.5,0.9 -1.5,-1.4 -1.5,0 -1.5,2.4 -1.5,-3.1 -1.5,-0.4 -1.5,0.7 -1.5,-0.3 -1.5,0.7 -1.5,-1.5 -1.5,0.7 -1.5,-1 -1.5,-0.1 -1.5,1.3 -1.5,-1.2 -1.5,-0.4 -1.5,0.5 -1.5,2.4 -1.5,-3.1 -1.5,-0.4 -1.5,-0.1 -1.5,1 -1.5,-1.1 -1.5,0.1 -1.5,-0.4 -1.5,-0.2 -1.5,1 -1.5,-0.9 -1.5,-0.3 -1.5,-0.5 -1.5,0.1 -1.5,-0.2 -1.5,-0.2 -1.5,-0.2 -1.5,0.3 -1.5,1.8 -1.5,-2.5 -1.5,0.2 -1.5,0.1 -1.5,1.8 -1.5,-2 -1.5,-0.9 -1.5,0.4 -1.5,-0.9 -1.5,0.4 -1.5,-0.3 -1.5,-0.6 -1.5,3.2 -1.5,-3.2 -1.5,1 -1.5,-1.8 -1.5,0.9 -1.5,-1.4 -1.5,-0.1 -1.5,-0.4 -1.5,-0.2 -1.5,-0.2 -1.5,0.2 -1.5,0.6 -1.5,1.1 -1.5,-2.8 -1.5,-0.1 -1.5,2.4 -1.5,-3.2 -1.5,0.3 -1.5,-0.2 -1.5,1.8 -1.5,-1.7 -1.5,-1 -1.5,-1 -1.5,-0.1 -1.5,-0.5 -1.5,-0 -1.5,0.9 -1.5,-1 -1.5,-1.2 -1.5,-0.6 -1.5,2 -1.5,-1.8 -1.5,-1 -1.5,0.6 -1.5,-0.2 -1.5,-1.3 -1.5,-0.7 -1.5,-0.5 -1.5,2 -1.5,-0.2 -1.5,-3.5 -1.5,0.7 -1.5,-1.2 -1.5,-0.8 -1.5,2.1 -1.5,-2 -1.5,-1.1 -1.5,-0.4 -1.5,0.2 -1.5,0 -1.5,-2.1 -1.5,-0.5 -1.5,2.1 -1.5,-2.5 -1.5,-1.3 -1.5,-0.6 -1.5,-0.6 -1.5,-0.8 -1.5,-0.5 -1.5,-0.8 -1.5,-0.5 -1.5,-0.7 -1.5,-0.7 -1.5,1.8 -1.5,-2.9 -1.5,-0.7 -1.5,-0.4 -1.5,-0.5 -1.5,-1.6 -1.5,-0.7 -1.5,2.9 -1.5,-4.4 -1.5,0.2 -1.5,-1.9 -1.5,-0.2 -1.5,-1.1 -1.5,-0.2 -1.5,-1.4 -1.5,-0.9 -1.5,-1.1 -1.5,-0.9 -1.5,-0.4 -1.5,-0.1 -1.5,-1.7 -1.5,2.1 -1.5,-4.2 -1.5,-0.3 -1.5,-1.5 -1.5,-1.5 -1.5,1.3 -1.5,-3.1 -1.5,-0.4 -1.5,-2 -1.5,-1.2 -1.5,-1.8 -1.5,-0.7 -1.5,-1 -1.5,-2.4 -1.5,-0.7 -1.5,-1.7 -1.5,-0.9 -1.5,-1.7 -1.5,-1.3 -1.5,-1.9 -1.5,0.2 -1.5,-2.1 -1.5,-1.4 -1.5,-1.3 -1.5,-0.5 -1.5,-2.2 -1.5,-1.5 -1.5,-0.9 -1.5,-0.4 -1.5,-1.8 -1.5,-2.8 -1.5,-2.5 -1.5,-1.6 -1.5,-1.9 -1.5,-2 -1.5,-0 -1.5,-3 -1.5,-2.8 -1.5,-1.9 -1.5,-0.3 -1.5,-4.5 -1.5,-2.3 -1.5,-2.5 -1.5,-2.4 -1.5,-0.1 -1.5,-4.6 -1.5,-1.9 -1.5,-1.8 -1.5,-2.9 -1.5,1.1 -1.5,-5.3 -1.5,-2.2 -1.5,-1.6 -1.5,-2.4 -1.5,-3 -1.5,-3.5 -1.5,-1.2 -1.5,-3.5 -1.5,-2.8 -1.5,-4.5 -1.5,-3.2 -1.5,-3.2 -1.5,-0.7 -1.5,-5.7 -1.5,-2.9 -1.5,-4.2 -1.5,-3.7 -1.5,-3.8 -1.5,-4.2 -1.5,-4.1 -1.5,-3.5 -1.5,-3.2 -1.5,-4.8 -1.5,-4.3 -1.5,-2.5 -1.5,-4.8 -1.5,-3.8 -1.5,-4 -1.5,-1.2 -1.5,-6.6 -1.5,-3.3 -1.5,-4.2 -1.5,-3.7 -1.5,-3.6 -1.5,-3 -1.5,-0.8 -1.5,-6.1 -1.5,-2.9 -1.5,-3.1 -1.5,-3.1 -1.5,-3.1 -1.5,-0.7 -1.5,-5.2 -1.5,-2.9 -1.5,-2.9 -1.5,-1.8 -1.5,-3.4 -1.5,0.2 -1.5,-2 -1.5,-1.1 -1.5,-1.3 -1.5,-0.3 -1.5,0.9 -1.5,-1.3 -1.5,0.5 -1.5,-0.5 -1.5,3.6 -1.5,-0.6 -1.5,-3.1 -1.5,-0.6 -1.5,0.2 -1.5,0.3 -1.5,0.1 -1.5,0.9 -1.5,-0.6 -1.5,2.5 -1.5,-2.8 -1.5,1.7 -1.5,-1.5 -1.5,0.7 -1.5,-0.5 -1.5,-0.4 -1.5,-0.1 -1.5,-0.2 -1.5,3.1 -1.5,-3.1 -1.5,-0.1 -1.5,-0.5 -1.5,0.4 -1.5,0 -1.5,-0.5 -1.5,0 -1.5,0.2 -1.5,-0.2 -1.5,1.9 -1.5,-1.4 -1.5,-0.5 -1.5,-0 -1.5,0.9 -1.5,-0.1 -1.5,-0.5 -1.5,0.2 -1.5,-0.4 -1.5,-0.2 -1.5,0 -1.5,0.6 -1.5,2 -1.5,-1.7 -1.5,-0.3 -1.5,-0.2 -1.5,3.7 -1.5,-3.4 -1.5,-0.3 -1.5,0.1 -1.5,-0.3 -1.5,-0.2 -1.5,0.4 -1.5,0.3 -1.5,-0.4 -1.5,0.2 -1.5,0.5 -1.5,0.6 -1.5,0.4 -1.5,-1 -1.5,0 -1.5,-0.6 -1.5,0.8 -1.5,1 -1.5,-1.5 -1.5,-0.7 -1.5,1.7 -1.5,-1.5 -1.5,0.3 -1.5,0.1 -1.5,-0.2 -1.5,-0.3 -1.5,0.5 -1.5,1.8 -1.5,-2.2 -1.5,0.5 -1.5,2.5 -1.5,-2.8 -1.5,2.9 -1.5,0.2 -1.5,-1.2 -1.5,-2 -1.5,0.5 -1.5,0.1 -1.5,-0.8 -1.5,1.3 -1.5,-1.2 -1.5,3.6 -1.5,-3.2 -1.5,1.1 -1.5,0.2 -1.5,-1.5 -1.5,-0.3 -1.5,0.1 -1.5,0.1 -1.5,-0.2 -1.5,-0 -1.5,0 -1.5,0.2 -1.5,2.1 -1.5,-2.2 -1.5,0 -1.5,0.4 -1.5,0.4 -1.5,-0.9 -1.5,0.5 -1.5,-0.6 -1.5,0 -1.5,0.4 -1.5,-0.4 -1.5,0.9 -1.5,-0.5 -1.5,0.1 -1.5,0 -1.5,-0.3 -1.5,0.2 -1.5,-0.1 -1.5,0.7 -1.5,-0.3 -1.5,-0.6 -1.5,0.2 -1.5,-0 -1.5,-0.2 -1.5,0.1 -1.5,0.1 -1.5,0.1 -1.5,-0.1 -1.5,0.3 -1.5,-0.4 -1.5,0.2 -1.5,0.1 -1.5,-0.3 -1.5,0.3 -1.5,-0.2 -1.5,2.4 -1.5,0.3 -1.5,-2.4 -1.5,3.4 -1.5,-3.7 -1.5,0.4 -1.5,0.7 -1.5,-1.4 -1.5,0.6 -1.5,0.4 -1.5,-0.4 -1.5,-0.4 -1.5,0.1 -1.5,0.9 -1.5,-0.7 -1.5,-0.1 -1.5,0.2 -1.5,0.1 -1.5,-0.7 -1.5,0.3 -1.5,-0.1 -1.5,0.5 -1.5,-0.6 -1.5,2 -1.5,-1.6 -1.5,0.2 -1.5,-0.6 -1.5,0.4 -1.5,-0 -1.5,0.3 -1.5,-0.6 -1.5,0.2 -1.5,0 -1.5,1.5 -1.5,-1.5 -1.5,0.8 -1.5,-0.6 -1.5,0.3 -1.5,0.3 -1.5,-1 -1.5,0.6 -1.5,2.5 -1.5,-2.9 -1.5,0.1 -1.5,0.8 -1.5,-1 -1.5,0.6 -1.5,-0.7 -1.5,0.3 -1.5,0.4 -1.5,-0.8 -1.5,0.5 -1.5,-0.5 -1.5,1.2 -1.5,-0.5 -1.5,0.7 -1.5,-0.9 -1.5,-0.5 -1.5,0.2 -1.5,0.4 -1.5,-0.1 -1.5,-0.5 -1.5,0.4 -1.5,-0.4 -1.5,1.2 -1.5,-0.6 -1.5,-0.4 -1.5,0.3 -1.5,-0.4 -1.5,0.1 -1.5,0.3 -1.5,-0.4 -1.5,-0.2 -1.5,3.6 -1.5,-2.6 -1.5,-0.2 -1.5,-0.3 -1.5,-0.2 -1.5,-0.1 -1.5,0 -1.5,1.6 -1.5,-1.4 -1.5,1.1 -1.5,-1.4 -1.5,0.6 -1.5,-0.2 -1.5,-0.2 -1.5,0.1 -1.5,1.1 -1.5,-0.9 -1.5,-0.4 -1.5,0.1 -1.5,0.2 -1.5,-0.4 -1.5,0.3 -1.5,-0.4 -1.5,2 -1.5,-1.6 -1.5,2 -1.5,-1.8 -1.5,-0.2 -1.5,0.2 -1.5,0.4 -1.5,-0.7 -1.5,2 -1.5,-2.2 -1.5,0.1 -1.5,0.2 -1.5,0.6 -1.5,-0.8 -1.5,-0.1 -1.5,0.1 -1.5,0.2 -1.5,-0.3 -1.5,-0 -1.5,0.4 -1.5,-0.3 -1.5,3.6 -1.5,-3.6 -1.5,0 -1.5,0.4 -1.5,-0.1 -1.5,1.2 -1.5,-0.5 -1.5,-0.5 -1.5,-0 -1.5,-0.3 -1.5,-0.3 -1.5,0.3 -1.5,-0 -1.5,2.5 -1.5,-2.5 -1.5,0.3 -1.5,2.3 -1.5,-1.3 -1.5,-1 -1.5,3.1 -1.5,-3.5 -1.5,0.4 -1.5,-0.2 -1.5,0.1 -1.5,0.9 -1.5,0.2 -1.5,1.6 -1.5,-3.1 -1.5,0.3 -1.5,-0.1 -1.5,-0.2 -1.5,2.2 -1.5,-2.3 -1.5,0 -1.5,0.6 -1.5,-0.6 -1.5,-0 -1.5,0.6 -1.5,-0.6 -1.5,0.8 -1.5,-0.5 -1.5,-0.3 -1.5,0.7 -1.5,-0.7 -1.5,0.4 -1.5,0.4 -1.5,-0.5 -1.5,2.8 -1.5,-2.9 -1.5,0 -1.5,0.1 -1.5,1.5 -1.5,-1.5 -1.5,0.4 -1.5,-0.3 -1.5,-0.2 -1.5,1.2 -1.5,-0.8 -1.5,-0.3 -1.5,0.2 -1.5,-0.3 -1.5,-0.2 -1.5,0.3 -1.5,0.4 -1.5,-0.4 -1.5,-0.3 -1.5,2.7 -1.5,-1.7 -1.5,-0.4 -1.5,-0.3 -1.5,-0.3 -1.5,2.2 -1.5,-1.7 -1.5,0.3 -1.5,-0.6 -1.5,1.3 -1.5,-0.8 -1.5,-0.3 -1.5,-0.1 -1.5,0.7 -1.5,-0.3 -1.5,-0.3 -1.5,-0.4 -1.5,0.5 -1.5,-0.2 -1.5,-0.2 -1.5,0.9 -1.5,-0.9 -1.5,1.3 -1.5,-1.3 -1.5,0.6 -1.5,-0.4 -1.5,-0.3 -1.5,0.5 -1.5,1.5 -1.5,-1.6 -1.5,0.4 -1.5,0.3 -1.5,-0 -1.5,-0.8 -1.5,-0.1 -1.5,-0.2 -1.5,0.3 -1.5,0.2 -1.5,-0.2 -1.5,0.1 -1.5,2.5 -1.5,-2 -1.5,1.8 -1.5,-2 -1.5,-0.6 -1.5,0.6 -1.5,0.3 -1.5,-0.1 -1.5,-0.5 -1.5,1.3 -1.5,-1.1 -1.5,0.2 -1.5,-0.8 -1.5,0.4 -1.5,0.5 -1.5,1.4 -1.5,-2.2 -1.5,0.1 -1.5,0.6 -1.5,-0 -1.5,-0.1 -1.5,0.5 -1.5,-0.8 -1.5,0.1 -1.5,1.5 -1.5,-1.9 -1.5,0.7 -1.5,-0.7 -1.5,1.5 -1.5,-1.6 -1.5,0.3 -1.5,0.1 -1.5,0.4 -1.5,0 -1.5,2.2 -1.5,-2.8 -1.5,-0.2 -1.5,0 -1.5,3.1 -1.5,-2.1 -1.5,2.1 -1.5,-1.7 -1.5,-0.8 -1.5,-0.6 -1.5,-0 -1.5,0.2 -1.5,0.6 -1.5,-0.7 -1.5,0 -1.5,0.8 -1.5,0.7 -1.5,-1.2 -1.5,0.5 -1.5,0.4 -1.5,2.4 -1.5,-3.5 -1.5,0 -1.5,1.2 -1.5,-0 -1.5,-1 -1.5,-0.2 -1.5,0.5 -1.5,-0.3 -1.5,1 -1.5,-1.3 -1.5,0.8 -1.5,-0.7 -1.5,0.9 -1.5,-0.8 -1.5,-0.1 -1.5,-0.1 -1.5,0.1 -1.5,0.7 -1.5,-0.6 -1.5,0.1 -1.5,-0.2 -1.5,0.2 -1.5,-0.2 -1.5,2.5 -1.5,-2.5 -1.5,0.3 -1.5,0.3 -1.5,0.7 -1.5,-0.1 -1.5,-1.4 -1.5,1.3 -1.5,-0.4 -1.5,-0.6 -1.5,0.4 -1.5,-0.5 -1.5,0.7 -1.5,0 -1.5,0.3 -1.5,0.5 -1.5,-1.1 -1.5,0.5 -1.5,0.3 -1.5,-1.3 -1.5,1 -1.5,-1 -1.5,0.6 -1.5,1.7 -1.5,-0.7 -1.5,-0.6 -1.5,-1 -1.5,0.3 -1.5,-0 -1.5,-0.1 -1.5,-0.2 -1.5,-0 -1.5,0.2 -1.5,0.1 -1.5,0.1 -1.5,-0.5 -1.5,0.1 -1.5,0 -1.5,-0.1 -1.5,0.2 -1.5,-0.1 -1.5,0.5 -1.5,-0.2 -1.5,1.1 -1.5,-0.8 -1.5,-0.4 -1.5,-0 -1.5,0.4 -1.5,-0.3 -1.5,1.4 -1.5,-1.2 -1.5,-0.5 -1.5,0.4 -1.5,-0.3 -1.5,0.9 -1.5,-0.7 -1.5,0.7 -1.5,-0.5 -1.5,-0.2 -1.5,0.3 -1.5,0.1 -1.5,0.1 -1.5,-0.7 -1.5,-0 -1.5,-0 -1.5,0 -1.5,0.6 -1.5,0 -1.5,0.2 -1.5,-0.3 -1.5,-0.4 -1.5,1.2 -1.5,1.4 -1.5,-1.4 -1.5,-0.5 -1.5,2.8 -1.5,-1.7 -1.5,-1.9 -1.5,0.7 -1.5,0.3 -1.5,0.4 -1.5,-1.4 -1.5,0.1 -1.5,0.5 -1.5,2.3 -1.5,-1.1 -1.5,-1.8 -1.5,0.3 -1.5,1.1 -1.5,-0.5 -1.5,-0.9 -1.5,0.7 -1.5,-0.8 -1.5,1.5 -1.5,-0.6 -1.5,-0.9 -1.5,0.2 -1.5,0.4 -1.5,0.9 -1.5,-1.4 -1.5,0.2 -1.5,-0.1 -1.5,0.8 -1.5,-0.9 -1.5,-0.1 -1.5,0.4 -1.5,0 -1.5,0 -1.5,-0.3 -1.5,0.2 -1.5,0.4 -1.5,0.6 -1.5,-0.1 -1.5,-0.9 -1.5,0.4 -1.5,0.9 -1.5,-1.2 -1.5,3.2 -1.5,-3.4 -1.5,0.5 -1.5,-0.2 -1.5,-0.4 -1.5,-0.1 -1.5,0.3 -1.5,0.2 -1.5,0.4 -1.5,-0.9 -1.5,0.3 -1.5,-0.3 -1.5,0.6 -1.5,-0.6 -1.5,1.9 -1.5,-1.8 -1.5,-0.1 -1.5,0.8 -1.5,-0.1 -1.5,0.1 -1.5,0.3 -1.5,-0.6 -1.5,-0.1 -1.5,0.5 -1.5,-0.7 -1.5,2.1 -1.5,-2.3 -1.5,0.3 -1.5,2.3 -1.5,-2.1 -1.5,0.4 -1.5,0.2 -1.5,-0.8 -1.5,1.2 -1.5,-0.7 -1.5,-0 -1.5,-0.5 -1.5,0.8 -1.5,-0.6 -1.5,-0.4 -1.5,0.4 -1.5,-0.1 -1.5,0.1 -1.5,-0.1 -1.5,0.8 -1.5,-1.2 -1.5,0.5 -1.5,0.2 -1.5,-0.6 -1.5,2.3 -1.5,-1.9 -1.5,-0.4 -1.5,1.3 -1.5,-0.8 -1.5,-0 -1.5,-0 -1.5,-0.4 -1.5,0.1 -1.5,0.1 -1.5,-0.1 -1.5,0.4 -1.5,-0.7 -1.5,0.8 -1.5,-0.5 -1.5,-0.2 -1.5,-0 -1.5,3.4 -1.5,-3.1 -1.5,0.9 -1.5,-1.2 -1.5,0.1 -1.5,-0.2 -1.5,0.3 -1.5,0.4 -1.5,-0.2 -1.5,0.1 -1.5,-0 -1.5,1.9 -1.5,-2.2 -1.5,-0.1 -1.5,-0.1 -1.5,0.3 -1.5,0.4 -1.5,-0.2 -1.5,-0 -1.5,0.3 -1.5,-0.6 -1.5,0 -1.5,0.2 -1.5,0.5 -1.5,-0.8 -1.5,0.5 -1.5,-0.3 -1.5,-0.3 -1.5,1.3 -1.5,-1.4 -1.5,0.4 -1.5,-0.3 -1.5,0.4 -1.5,-0.2 -1.5,-0.2 -1.5,1.8 -1.5,2.1 -1.5,-3.9 -1.5,0.1 -1.5,0 -1.5,2.7 -1.5,-2.1 -1.5,0 -1.5,0.4 -1.5,1.6 -1.5,-2.2 -1.5,1 -1.5,-1.3 -1.5,-0 -1.5,0.4 -1.5,0.1 -1.5,0.4 -1.5,-1.1 -1.5,-0.1 -1.5,0.1 -1.5,0.2 -1.5,0.1 -1.5,-0.2 -1.5,1.9 -1.5,-1.4 -1.5,-0.3 -1.5,-0.1 -1.5,0.6 -1.5,0.2 -1.5,-0.1 -1.5,0.1 -1.5,-0.9 -1.5,0.3z" fill="#151212"/>
  <path d="M1037,130.9 1038.5,131.5 1040,132.5 1041.5,133.9 1043,135.7 1044.5,137.9 1046,140.6 1047.5,143.5 1049,146.4 1050.5,149.2 1052,152 1053.5,155 1055,158 1056.5,161.1 1058,164.2 1059.5,167.5 1061,170.7 1062.5,174.1 1064,177.5 1065.5,181.1 1067,184.8 1068.5,188.7 1070,192.6 1071.5,196.6 1073,200.5 1074.5,204.3 1076,208 1077.5,211.8 1079,215.6 1080.5,219.4 1082,223.3 1083.5,227.3 1085,231.4 1086.5,235.5 1088,239.5 1089.5,243.3 1091,246.9 1092.5,250.3 1094,253.6 1095.5,256.8 1097,259.9 1098.5,263.1 1100,266.3 1101.5,269.4 1103,272.5 1104.5,275.5 1106,278.4 1107.5,281.2 1109,283.8 1110.5,286.2 1112,288.5 1113.5,290.7 1115,292.8 1116.5,294.9 1118,297.1 1119.5,299.3 1121,301.6 1122.5,303.9 1124,306.2 1125.5,308.6 1127,310.9 1128.5,313.2 1130,315.5 1131.5,317.7 1133,319.8 1134.5,321.9 1136,323.8 1137.5,325.7 1139,327.6 1140.5,329.4 1142,331.2 1143.5,332.9 1145,334.5 1146.5,336.1 1148,337.7 1149.5,339.2 1151,340.7 1152.5,342.1 1154,343.3 1155.5,344.5 1157,345.6 1158.5,346.7 1160,347.9 1161.5,349.1 1163,350.4 1164.5,351.7 1166,353.1 1167.5,354.5 1169,355.9 1170.5,357.3 1172,358.7 1173.5,360.1 1175,361.5 1176.5,362.8 1178,364 1179.5,365.2 1181,366.3 1182.5,367.4 1184,368.4 1185.5,369.4 1187,370.4 1188.5,371.4 1190,372.3 1191.5,373.2 1193,374 1194.5,374.9 1196,375.7 1197.5,376.5 1199,377.3 1200.5,378.1 1202,378.9 1203.5,379.7 1205,380.5 1206.5,381.3 1208,382.1 1209.5,382.8 1211,383.6 1212.5,384.3 1214,385.1 1215.5,385.8 1217,386.5 1218.5,387.2 1220,387.9 1221.5,388.5 1223,389.2 1224.5,389.9 1226,390.5 1227.5,391.2 1229,391.8 1230.5,392.4 1232,393 1233.5,393.6 1235,394.2 1236.5,394.8 1238,395.3 1239.5,395.8" stroke="#151212" stroke-width="2.6" fill="none" stroke-linejoin="round"/>
  <path d="M4,759.5l1.5,-0.2 1.5,-0.1 1.5,-0.1 1.5,-1.1 1.5,1.4 1.5,0.1 1.5,-0.9 1.5,0.8 1.5,-0.5 1.5,0.4 1.5,0 1.5,-0.2 1.5,0 1.5,-1.1 1.5,1.3 1.5,-0 1.5,-0.1 1.5,-0.4 1.5,-0 1.5,0.4 1.5,-0.4 1.5,0.2 1.5,-0.3 1.5,0.3 1.5,-0.3 1.5,0.4 1.5,-0.3 1.5,-0.2 1.5,0.5 1.5,0.1 1.5,-0 1.5,-0.3 1.5,-0.9 1.5,1.2 1.5,0.2 1.5,-0 1.5,-0.1 1.5,-0.1 1.5,0.1 1.5,0.3 1.5,-0.1 1.5,-0.3 1.5,0.1 1.5,-0.5 1.5,0.3 1.5,0.4 1.5,-0.1 1.5,0 1.5,-0.1 1.5,0.3 1.5,-0.1 1.5,0.1 1.5,-0.3 1.5,-0 1.5,-0.1 1.5,-0 1.5,0.5 1.5,-0.2 1.5,0.3 1.5,-0.6 1.5,0.4 1.5,0.2 1.5,-0.1 1.5,-0.3 1.5,0.6 1.5,0 1.5,-0.8 1.5,0.1 1.5,0.3 1.5,0 1.5,0.2 1.5,-0.5 1.5,0.1 1.5,-0.1 1.5,0.1 1.5,0.2 1.5,-0 1.5,-0.4 1.5,-0.1 1.5,0.3 1.5,0.1 1.5,-0.5 1.5,0.2 1.5,-0.3 1.5,0.4 1.5,-0.1 1.5,0 1.5,-0 1.5,0.1 1.5,-0.1 1.5,-0.5 1.5,0.2 1.5,0.4 1.5,-1.1 1.5,0.8 1.5,0 1.5,0.3 1.5,-0.3 1.5,-1 1.5,0 1.5,1.1 1.5,-0.2 1.5,-0.1 1.5,-0.3 1.5,-0.4 1.5,0.5 1.5,0.3 1.5,0.1 1.5,-0.4 1.5,-0.3 1.5,0.8 1.5,-0.3 1.5,0.3 1.5,0.1 1.5,0 1.5,0.1 1.5,-0.6 1.5,0.5 1.5,0.1 1.5,-0 1.5,-0.1 1.5,-0.7 1.5,0.8 1.5,0.1 1.5,0 1.5,0.3 1.5,-0.4 1.5,0.3 1.5,-0.3 1.5,0.2 1.5,-0.1 1.5,0.2 1.5,0.1 1.5,-0.7 1.5,0.2 1.5,0.2 1.5,0.3 1.5,-0 1.5,-0.2 1.5,0.2 1.5,-0.2 1.5,0.2 1.5,-0.1 1.5,0.2 1.5,0.1 1.5,0 1.5,-0.4 1.5,0.1 1.5,-0 1.5,-0.3 1.5,-1 1.5,1.6 1.5,-0.3 1.5,0 1.5,-1.3 1.5,1.2 1.5,-0.1 1.5,0.2 1.5,-0.1 1.5,-0.1 1.5,-0 1.5,0.1 1.5,-0.3 1.5,-0.2 1.5,0.2 1.5,0.1 1.5,-0.1 1.5,0.2 1.5,-0.8 1.5,0.8 1.5,-0.3 1.5,0.2 1.5,-0.4 1.5,0.4 1.5,0 1.5,-0.2 1.5,0.3 1.5,-0.6 1.5,0.4 1.5,-0.2 1.5,-0.4 1.5,0.6 1.5,-0.3 1.5,-0.2 1.5,0.4 1.5,-0.7 1.5,-0.1 1.5,0.2 1.5,0.5 1.5,0.1 1.5,-0.1 1.5,-0.4 1.5,0.4 1.5,-0 1.5,-0 1.5,0.2 1.5,0.1 1.5,0 1.5,-0.2 1.5,0 1.5,0.1 1.5,-0 1.5,0.1 1.5,-0.4 1.5,0.7 1.5,-0.1 1.5,-0.2 1.5,0.1 1.5,-0.1 1.5,0.2 1.5,-0.1 1.5,0.1 1.5,-0.1 1.5,0.1 1.5,-0 1.5,0 1.5,-0 1.5,-0.3 1.5,0.1 1.5,0.2 1.5,-0.4 1.5,0.4 1.5,-1.8 1.5,1.4 1.5,0.5 1.5,-0.1 1.5,-0.4 1.5,0.4 1.5,0.2 1.5,-0.1 1.5,-0.3 1.5,0.5 1.5,-0.1 1.5,-0.4 1.5,0.3 1.5,-0.2 1.5,0.3 1.5,-0.5 1.5,0.4 1.5,-0.3 1.5,0.1 1.5,-0.2 1.5,-0.1 1.5,0.4 1.5,-0.5 1.5,-0 1.5,0.1 1.5,0 1.5,-0 1.5,0.2 1.5,-1.1 1.5,1.2 1.5,-0.6 1.5,0.8 1.5,-0.1 1.5,-0.1 1.5,-0.4 1.5,0.5 1.5,0.1 1.5,-1 1.5,0.8 1.5,-0 1.5,-0.6 1.5,0.6 1.5,-0.3 1.5,0.3 1.5,-0.5 1.5,0.1 1.5,0.1 1.5,0 1.5,-0.3 1.5,0 1.5,0.2 1.5,0.3 1.5,-0 1.5,-0.1 1.5,0.1 1.5,-0.1 1.5,-0.6 1.5,0.9 1.5,-0.3 1.5,0.1 1.5,0.1 1.5,0.1 1.5,0 1.5,0.1 1.5,-0.1 1.5,-0.3 1.5,0 1.5,0.1 1.5,-0.1 1.5,-0.1 1.5,-0.2 1.5,0.4 1.5,-0.2 1.5,-0.3 1.5,0.6 1.5,-0.2 1.5,-0 1.5,-0.5 1.5,0.6 1.5,-0.4 1.5,-0.3 1.5,0 1.5,0.9 1.5,-0.2 1.5,0.2 1.5,-0.1 1.5,0.1 1.5,-0 1.5,0.1 1.5,-0.2 1.5,-0.1 1.5,0.3 1.5,0.1 1.5,-0.3 1.5,0 1.5,-0.2 1.5,0.2 1.5,-0.1 1.5,-0.3 1.5,0.1 1.5,0.4 1.5,-0.4 1.5,0.4 1.5,-0.2 1.5,0.2 1.5,-0 1.5,0 1.5,-0.3 1.5,0 1.5,-0.2 1.5,0.5 1.5,-0.2 1.5,0.4 1.5,-0 1.5,-0.1 1.5,0 1.5,0.1 1.5,-0.8 1.5,0.5 1.5,0.1 1.5,-0.1 1.5,-0 1.5,0.1 1.5,-0.7 1.5,-0.9 1.5,0.9 1.5,0.4 1.5,-0 1.5,-0.2 1.5,-0.4 1.5,0.4 1.5,0.3 1.5,-0.2 1.5,-0.3 1.5,0.4 1.5,0.2 1.5,-0.3 1.5,-0.2 1.5,0.4 1.5,0.2 1.5,-0.1 1.5,-0.3 1.5,0.4 1.5,-0 1.5,-0.3 1.5,0.1 1.5,-0.1 1.5,-0.3 1.5,0.2 1.5,0.1 1.5,0.3 1.5,-0.3 1.5,0 1.5,0.1 1.5,-0 1.5,-1.6 1.5,1.4 1.5,0 1.5,0.2 1.5,-0.1 1.5,-0.3 1.5,0.2 1.5,-0.1 1.5,-0.1 1.5,-0.1 1.5,0.5 1.5,-0.3 1.5,0.3 1.5,0 1.5,0.2 1.5,-0.1 1.5,-0.2 1.5,-0.9 1.5,0.7 1.5,0.6 1.5,-0.3 1.5,-0 1.5,0.2 1.5,-1.2 1.5,0.6 1.5,0.5 1.5,-0.6 1.5,0.4 1.5,-0.1 1.5,0.4 1.5,-0.4 1.5,0.1 1.5,-0 1.5,-0.4 1.5,0.3 1.5,-0.1 1.5,0.4 1.5,0.1 1.5,0 1.5,-0.3 1.5,0.4 1.5,0.1 1.5,-1.3 1.5,1 1.5,-0.6 1.5,0.9 1.5,-0.9 1.5,0.8 1.5,-0.5 1.5,0.4 1.5,-0.7 1.5,0.6 1.5,0.1 1.5,0.1 1.5,-1.3 1.5,1 1.5,-0.1 1.5,0 1.5,-0 1.5,-0.2 1.5,0.4 1.5,-1.2 1.5,0.3 1.5,0.7 1.5,0.2 1.5,0.2 1.5,-0.4 1.5,0.4 1.5,-0.1 1.5,0.1 1.5,0 1.5,-0.6 1.5,0.6 1.5,-0.4 1.5,0.4 1.5,-0.3 1.5,-0.4 1.5,0.3 1.5,0.2 1.5,-0.4 1.5,-0.3 1.5,0.4 1.5,-0.1 1.5,0.1 1.5,0.2 1.5,-0.4 1.5,0.2 1.5,0.2 1.5,-1 1.5,0.9 1.5,0.1 1.5,-0 1.5,-0.4 1.5,-0.4 1.5,0.3 1.5,0.3 1.5,0.2 1.5,0.1 1.5,0 1.5,-1.1 1.5,1.1 1.5,-0.4 1.5,0.3 1.5,-0.3 1.5,-0.1 1.5,0.4 1.5,-0.2 1.5,0.2 1.5,-0.2 1.5,-0.1 1.5,0.2 1.5,-0.2 1.5,-0 1.5,0.2 1.5,-0.1 1.5,-0.4 1.5,0.6 1.5,0 1.5,-0.5 1.5,0.5 1.5,-0.5 1.5,0.4 1.5,0.3 1.5,0.1 1.5,-0.3 1.5,0.3 1.5,-0.2 1.5,0.1 1.5,-0.2 1.5,0.2 1.5,0 1.5,0.2 1.5,-0.3 1.5,-0 1.5,0.1 1.5,-0.7 1.5,0.6 1.5,0.1 1.5,-0.1 1.5,0.2 1.5,-0.1 1.5,-0.8 1.5,0.7 1.5,0.2 1.5,0 1.5,-0.4 1.5,0.5 1.5,-0.5 1.5,0.1 1.5,0.3 1.5,-0.4 1.5,0.4 1.5,0.2 1.5,-0.2 1.5,-0.4 1.5,0.4 1.5,0 1.5,-0.1 1.5,-0.5 1.5,0.7 1.5,-0.2 1.5,-0.9 1.5,0.9 1.5,0 1.5,-0.1 1.5,-0.1 1.5,0 1.5,-0 1.5,-0.1 1.5,0.2 1.5,-1 1.5,0.7 1.5,-0 1.5,-0 1.5,-0.4 1.5,0.5 1.5,-1.4 1.5,1.1 1.5,0.1 1.5,0.2 1.5,-0.1 1.5,-0.1 1.5,0.1 1.5,0.1 1.5,-0.4 1.5,0.3 1.5,-0.1 1.5,-0.2 1.5,-0.1 1.5,0.4 1.5,0.1 1.5,-0.5 1.5,-0.5 1.5,0.6 1.5,-0.1 1.5,-0.4 1.5,0.7 1.5,-0.2 1.5,0.1 1.5,0.2 1.5,-0 1.5,-0.2 1.5,0.3 1.5,-0.1 1.5,0.1 1.5,-0.5 1.5,0.8 1.5,-0.2 1.5,-0 1.5,-0.1 1.5,0.3 1.5,-0 1.5,0 1.5,-0.1 1.5,0.1 1.5,0.1 1.5,-0.2 1.5,0.3 1.5,-0.2 1.5,-0.3 1.5,0.2 1.5,0 1.5,0 1.5,0.2 1.5,0.1 1.5,-0.1 1.5,0.2 1.5,-0 1.5,-0.1 1.5,-0.3 1.5,-0.1 1.5,0.4 1.5,-0.2 1.5,0.1 1.5,0.3 1.5,-0.2 1.5,0 1.5,0.1 1.5,-0.1 1.5,0.2 1.5,-0.1 1.5,-0.6 1.5,-1.2 1.5,1.4 1.5,0.3 1.5,-0.4 1.5,-0.7 1.5,0.6 1.5,0.2 1.5,-0.2 1.5,0.2 1.5,-0 1.5,-0.3 1.5,0.1 1.5,-0.1 1.5,0.2 1.5,-0.2 1.5,0.2 1.5,-0.3 1.5,-0.2 1.5,0.5 1.5,-0.7 1.5,0.7 1.5,-0.1 1.5,0.1 1.5,-0 1.5,-0.5 1.5,0.3 1.5,0.1 1.5,-0.2 1.5,0.1 1.5,-0.7 1.5,0.4 1.5,0.4 1.5,-0.2 1.5,-0.2 1.5,-0.4 1.5,0.7 1.5,-0.1 1.5,-0.3 1.5,-0.2 1.5,0.5 1.5,-0.4 1.5,0.4 1.5,0.1 1.5,-0.2 1.5,0.4 1.5,-0.4 1.5,0.6 1.5,-0.6 1.5,0.5 1.5,0.2 1.5,0.1 1.5,-0.3 1.5,-0.1 1.5,0.2 1.5,0.2 1.5,-0.6 1.5,0.5 1.5,-0.1 1.5,0.2 1.5,-0.3 1.5,0.2 1.5,-0.4 1.5,0.2 1.5,0.2 1.5,-0.6 1.5,0.6 1.5,-1 1.5,1.1 1.5,-0.6 1.5,0.4 1.5,-0.3 1.5,-0.2 1.5,0.5 1.5,0 1.5,0 1.5,-0 1.5,-0.2 1.5,-0 1.5,-0.2 1.5,-1.9 1.5,1.8 1.5,0.1 1.5,-0.1 1.5,0.6 1.5,0.3 1.5,0.5 1.5,0.5 1.5,0.7 1.5,0.5 1.5,0.5 1.5,-0.6 1.5,1 1.5,0.2 1.5,0.1 1.5,0.5 1.5,0.5 1.5,-0.9 1.5,0.3 1.5,1.2 1.5,0.5 1.5,-0.2 1.5,0.6 1.5,0 1.5,0.3 1.5,0.4 1.5,0.1 1.5,0.1 1.5,0.2 1.5,-0.1 1.5,-0.9 1.5,1.8 1.5,0.1 1.5,0.3 1.5,-0.1 1.5,0.3 1.5,0.1 1.5,-0.3 1.5,0.1 1.5,0.1 1.5,0.2 1.5,-0 1.5,0.1 1.5,-0.3 1.5,0.3 1.5,-0.7 1.5,0.4 1.5,0.3 1.5,0.2 1.5,1 1.5,2.8 1.5,3.8 1.5,4.2 1.5,4.1 1.5,3.5 1.5,3 1.5,2.6 1.5,3 1.5,2.4 1.5,1.7 1.5,1.8 1.5,2.1 1.5,1.8 1.5,0.5 1.5,1.9 1.5,0.5 1.5,1.9 1.5,0.9 1.5,1.1 1.5,0.6 1.5,1.1 1.5,0.5 1.5,0.5 1.5,0.9 1.5,-0.1 1.5,1.4 1.5,0.3 1.5,0.3 1.5,0.9 1.5,0 1.5,0 1.5,1.2 1.5,0.3 1.5,0.5 1.5,0.1 1.5,0.4 1.5,-0.2 1.5,0.7 1.5,0.3 1.5,0.4 1.5,0.3 1.5,0.5 1.5,-0.1 1.5,0.4 1.5,-0.5 1.5,1 1.5,0.5 1.5,0.3 1.5,-0.7 1.5,1.3 1.5,0.1 1.5,0.3 1.5,0.2 1.5,-0.2 1.5,-0.3 1.5,1.3 1.5,0.3 1.5,-0.2 1.5,-0.9 1.5,1.9 1.5,-0.2 1.5,0.6 1.5,0.3 1.5,0.2 1.5,-0.2 1.5,0.4 1.5,0.3 1.5,-0.2 1.5,0.7 1.5,0.1 1.5,0.1 1.5,0 1.5,-0 1.5,0.3 1.5,0.1 1.5,0.3 1.5,-0.1 1.5,0.3 1.5,-0.1 1.5,-0.3 1.5,0.6 1.5,0.2 1.5,-0 1.5,0.1 1.5,-0.1 1.5,0.2 1.5,0.3 1.5,-0.2 1.5,0.4 1.5,-0.2 1.5,-0.9 1.5,1.2 1.5,0.1 1.5,0.1 1.5,-0.5 1.5,0.3 1.5,-0.2 1.5,0.5 1.5,0.3 1.5,0.1 1.5,-0.1 1.5,0.1 1.5,-0.4 1.5,0.6 1.5,-0.7 1.5,0.6 1.5,-0 1.5,-0 1.5,-0.4 1.5,0.8 1.5,-0 1.5,-0.2 1.5,0.4 1.5,-0.1 1.5,-0.1 1.5,0.3 1.5,-0.2 1.5,-0.1 1.5,0 1.5,-1.7 1.5,2 1.5,-0.5 1.5,0.5 1.5,0.1 1.5,0.1 1.5,0 1.5,-1.4 1.5,1.4 1.5,-0.1 1.5,0.3 1.5,-0.1 1.5,0.2 1.5,-0.3 1.5,0.4 1.5,0.1 1.5,-0.1 1.5,0.2 1.5,-0.3 1.5,0.2 1.5,0.1 1.5,-2.1 1.5,2.3 1.5,-0.3 1.5,-0.3 1.5,0.2 1.5,0.4 1.5,-0.2 1.5,0.4 1.5,-0.5 1.5,0.4 1.5,0.1 1.5,-0.1 1.5,0.2 1.5,0.1 1.5,-0.5 1.5,0.4 1.5,0.1 1.5,-0.4 1.5,0.6 1.5,0 1.5,-0.1 1.5,0.1 1.5,-0.2 1.5,0.4 1.5,0.1 1.5,-0.4 1.5,-0.3 1.5,0.7 1.5,-0.2 1.5,0.3 1.5,-0.3 1.5,-0.2 1.5,0.3 1.5,-0.8 1.5,1.1 1.5,0.2 1.5,0.1 1.5,-0.1 1.5,-0.2 1.5,-0.3 1.5,0.1 1.5,0.1 1.5,0.2 1.5,0.2 1.5,-0.1 1.5,0.1 1.5,-0.1 1.5,0.2 1.5,0.1 1.5,0 1.5,-0.3 1.5,0.4 1.5,0.1 1.5,-0.8 1.5,0.9 1.5,-0.2 1.5,-1 1.5,1.2 1.5,-0.1 1.5,-0.2 1.5,0.4 1.5,-0.1 1.5,-1.3 1.5,1.5 1.5,-0.9 1.5,0.6 1.5,0.4 1.5,-0.2 1.5,0.1 1.5,-0.3 1.5,0.2 1.5,0.2 1.5,-0 1.5,-0.1 1.5,0.2 1.5,0 1.5,0 1.5,-0 1.5,-0.1 1.5,0 1.5,0.3 1.5,-0.1 1.5,-0.4 1.5,0.5 1.5,0 1.5,-1.3 1.5,1.1 1.5,0.3 1.5,-0.2 1.5,-0.1 1.5,-0.1 1.5,0.4 1.5,-0.1 1.5,-0.3 1.5,-0.1 1.5,0.6 1.5,-0.4 1.5,0.5 1.5,0.1 1.5,-0.6 1.5,0.4 1.5,-0 1.5,0.2 1.5,-0.1 1.5,-0.2 1.5,0.2 1.5,0.1 1.5,0.2 1.5,-0.4 1.5,0.4 1.5,-0.2 1.5,0.2 1.5,-0.2 1.5,-0.1 1.5,0.2 1.5,-0.1 1.5,0.1 1.5,0.1 1.5,-0.1 1.5,-0 1.5,0.2 1.5,0.2 1.5,0 1.5,-0.4 1.5,-0.2 1.5,0.6 1.5,0.1 1.5,-0.3 1.5,-0.3 1.5,0.1 1.5,0.6 1.5,-0.4 1.5,-0.1 1.5,0.2 1.5,-0.3 1.5,0.7 1.5,-0.9 1.5,0.2 1.5,0.6 1.5,-0 1.5,0.2 1.5,-0 1.5,0 1.5,0.1 1.5,-1.3 1.5,1 1.5,-0.6 1.5,0.9 1.5,-0 1.5,0.1 1.5,-0.5 1.5,0.4 1.5,-0.2 1.5,0.2 1.5,-0.1 1.5,-0.1 1.5,0.1 1.5,0.3 1.5,-0 1.5,-0.5 1.5,0.5 1.5,-0.4 1.5,0.2 1.5,-0.1 1.5,-0.1 1.5,0.3 1.5,0.3 1.5,0.1 1.5,-0.5 1.5,0.1 1.5,0.3 1.5,0.1 1.5,-0.2 1.5,0.3 1.5,-0.1 1.5,0 1.5,-0.1 1.5,-0 1.5,0.3 1.5,-1.3 1.5,0.9 1.5,0.1 1.5,0.1 1.5,0.1 1.5,0.2 1.5,-0.1 1.5,0.1 1.5,-0.1 1.5,-0.1 1.5,-0.9 1.5,0.4 1.5,0.7 1.5,-0.3 1.5,-0 1.5,-0.4 1.5,0.7 1.5,0.1 1.5,0.1 1.5,-0.1 1.5,-0.1 1.5,-0.1 1.5,0.3 1.5,0 1.5,-1.8 1.5,1.7 1.5,-0.2 1.5,0.4 1.5,-0 1.5,0 1.5,-0.3 1.5,0.2 1.5,0.2 1.5,-0.1 1.5,-0.1 1.5,0.2 1.5,-0.1 1.5,0.1 1.5,0.1 1.5,-1 1.5,0.7 1.5,0.4 1.5,-0.4 1.5,0.4 1.5,-0 1.5,-0.5 1.5,0.5 1.5,-0 1.5,-0 1.5,-0.3 1.5,-0.5 1.5,0.3 1.5,0.3 1.5,-0.1 1.5,0.3 1.5,-0.1 1.5,0.2 1.5,-0.2 1.5,0 1.5,0 1.5,-0.4 1.5,0.4 1.5,-0 1.5,0.3 1.5,0.2 1.5,-0.9 1.5,0.9 1.5,-0.4 1.5,0.3 1.5,-0.4 1.5,0.6 1.5,-0.6 1.5,0.5 1.5,-0 1.5,0 1.5,-0 1.5,0.1 1.5,-0.2 1.5,0.3 1.5,-0.3 1.5,0.3 1.5,-1.5 1.5,0.7 1.5,0.8 1.5,-0.2 1.5,0.2 1.5,-0.5 1.5,0.1 1.5,-0 1.5,-0.1 1.5,0.6 1.5,-0.1 1.5,0.1 1.5,0 1.5,-0.3 1.5,-0.1 1.5,0.5 1.5,-0.6 1.5,0.7 1.5,-0.5 1.5,0.5 1.5,-0.2 1.5,0.1 1.5,-0.3 1.5,-0.3 1.5,-0 1.5,0.6 1.5,-1.1 1.5,0.7 1.5,0.4 1.5,-0.1 1.5,0.4 1.5,-0.1 1.5,-0.1 1.5,-0.3 1.5,0.3 1.5,0 1.5,-0.2 1.5,-0.3 1.5,0.5 1.5,0.1 1.5,-0.1 1.5,-0 1.5,-0 1.5,-0.3 1.5,0.7 1.5,-0.5 1.5,0.3 1.5,-0.1 1.5,0.2 1.5,-0.2 1.5,-0.1 1.5,0.3 1.5,-0.1 1.5,-0.8 1.5,0.9 1.5,-0.1 1.5,0.3 1.5,-0.1 1.5,-0.4 1.5,-0.8 1.5,1.2 1.5,0 1.5,0 1.5,0.1 1.5,-0.1 1.5,0.2 1.5,-0.1 1.5,-0.2 1.5,0.4 1.5,-0.1 1.5,-0.2 1.5,0.2 1.5,0.1 1.5,-0.8 1.5,0.8 1.5,-0.6 1.5,0.6 1.5,0.1 1.5,-0.5 1.5,0.5 1.5,-0.6 1.5,0.5 1.5,-0.2 1.5,0.3 1.5,0 1.5,-0.4 1.5,0.2 1.5,0.2 1.5,-0.5 1.5,0.3 1.5,0 1.5,-0.5 1.5,0.6 1.5,-0.3 1.5,0.5 1.5,-0 1.5,-0 1.5,-0.2 1.5,-0.2 1.5,0.2 1.5,0.3 1.5,0.1 1.5,-0.1 1.5,-0.6 1.5,0.5 1.5,-0.3 1.5,0.3 1.5,-0.5 1.5,0.3 1.5,-0 1.5,0.3 1.5,0.1 1.5,-0.1 1.5,-0.5 1.5,0.4 1.5,0.2 1.5,0.1 1.5,-0.1 1.5,0.1 1.5,-0.2 1.5,-0.1 1.5,0.2 1.5,-0.4 1.5,0.3 1.5,0.1 1.5,-0.1 1.5,0.3 1.5,0.1 1.5,-0.5 1.5,0.2 1.5,0.2 1.5,-1 1.5,0.7 1.5,0.2 1.5,-0 1.5,0.1 1.5,-0 1.5,-1.3 1.5,1.2 1.5,0 1.5,0.1 1.5,-0 1.5,0.2 1.5,-0.4 1.5,0.2 1.5,0.1 1.5,-0 1.5,0.1 1.5,-0.2 1.5,0.3 1.5,-0.8 1.5,0.4 1.5,0.2 1.5,0.1 1.5,-0 1.5,-0 1.5,0.1 1.5,-0.1 1.5,-1.1 1.5,0.2 1.5,0.9 1.5,-0.1 1.5,0.1 1.5,-0.2 1.5,0.3 1.5,-0.3 1.5,0.4 1.5,-0 1.5,-1.5 1.5,0.8 1.5,0.7 1.5,0.1 1.5,-0.2 1.5,0.2 1.5,-0.4 1.5,0.1 1.5,-0.2 1.5,0.3 1.5,-0.2 1.5,0.2 1.5,-0.1 1.5,0.2 1.5,0.2 1.5,-0.1 1.5,0.1 1.5,-0.2 1.5,-0.1 1.5,0.3 1.5,-0 1.5,-0 1.5,-0.2 1.5,0.1 1.5,0.1 1.5,0 1.5,-0.2 1.5,0.3 1.5,-0.8 1.5,0.8 1.5,0 1.5,-0.4 1.5,0.3 1.5,-0 1.5,-0.4 1.5,0.5 1.5,-0.3 1.5,-0.3 1.5,-0.5 1.5,0.7 1.5,0.3 1.5,0 1.5,-0 1.5,-0.3 1.5,0.4 1.5,-0.6 1.5,-0.6 1.5,0.8 1.5,0.5 1.5,-0.4 1.5,0.4 1.5,0.1 1.5,-0.2 1.5,0.1 1.5,0.2 1.5,-0.1 1.5,-1.8 1.5,0.4 1.5,1.3 1.5,0.1 1.5,0 1.5,-0.2 1.5,0.3 1.5,-0.4 1.5,0.4 1.5,0 1.5,-0.5 1.5,-0.1 1.5,0.5 1.5,-0.2 1.5,0.3 1.5,-0.2 1.5,-1.6 1.5,1.2 1.5,0.3 1.5,-0.1 1.5,0.1 1.5,0.2 1.5,0.2 1.5,0 1.5,-0.3 1.5,0.1 1.5,0.1 1.5,0.2 1.5,-0.5 1.5,0 1.5,0.4 1.5,-0 1.5,-0.8 1.5,0.3 1.5,0.3 1.5,-0.1 1.5,0.2 1.5,0 1.5,0.3 1.5,-0.2 1.5,0 1.5,-0.4 1.5,0.5 1.5,-0 1.5,-1.3 1.5,1.2 1.5,0.2 1.5,-0.2 1.5,0.2 1.5,-0.2 1.5,-0.1 1.5,0.3 1.5,-0.4 1.5,-0 1.5,0.5 1.5,-0 1.5,-1 1.5,0.7 1.5,-0 1.5,0.2 1.5,-0.6 1.5,0.4 1.5,0.2 1.5,0 1.5,0 1.5,-0.1 1.5,0.1 1.5,0.1 1.5,-0.8 1.5,0.4 1.5,0.5 1.5,-0.3 1.5,-0.1 1.5,0.3 1.5,-0.6 1.5,0.3 1.5,-0.2 1.5,0.1 1.5,0 1.5,0.5 1.5,-1.4 1.5,1.3 1.5,0.1 1.5,-0 1.5,-0.9 1.5,0.2 1.5,0.7 1.5,0.1 1.5,-0 1.5,-0 1.5,-0.1 1.5,0 1.5,0.2 1.5,-0.1 1.5,-0.4 1.5,0.2 1.5,0.1 1.5,0.1 1.5,0 1.5,-0.4 1.5,-0.1 1.5,0.6 1.5,-0.3 1.5,-0.1 1.5,0 1.5,0.3 1.5,-0.1 1.5,-0.3 1.5,0.5 1.5,-0.1 1.5,-0.1 1.5,-0.2 1.5,0.1 1.5,-0.1 1.5,0.5 1.5,-0.3 1.5,-0.1 1.5,0.4 1.5,-0 1.5,0.1 1.5,-0 1.5,-0.3 1.5,0.1 1.5,-0.6 1.5,0.6 1.5,0.1 1.5,-0.5 1.5,0.6 1.5,-0.3 1.5,0.1 1.5,0.2 1.5,0.1 1.5,-0.6 1.5,0.3 1.5,0.1 1.5,-0.7 1.5,0.5 1.5,-0.3 1.5,0.5 1.5,0.3 1.5,-0.5 1.5,0.3 1.5,-0 1.5,-0.4 1.5,0.2 1.5,0.2 1.5,-0.1 1.5,-0.2 1.5,0.4 1.5,-0.1 1.5,-0.1 1.5,0.2 1.5,-0 1.5,-0.3 1.5,0.2 1.5,-0.3 1.5,0.3 1.5,0.1 1.5,-0 1.5,0 1.5,0.2 1.5,-0.4 1.5,-0 1.5,0.4 1.5,-0.4 1.5,0.3 1.5,-1.4 1.5,1.2 1.5,-0 1.5,0.1 1.5,-0 1.5,-1.5 1.5,1.8 1.5,-0.1 1.5,0.1 1.5,-0.2 1.5,0.2 1.5,-0.1 1.5,-0.5 1.5,0.5 1.5,-0.5 1.5,-0 1.5,0.6 1.5,-0 1.5,-0.1 1.5,-0.1 1.5,-0.2 1.5,0.5 1.5,0 1.5,-1.6 1.5,1.6 1.5,-0.1 1.5,-0.5 1.5,0.4 1.5,-0.1 1.5,-0 1.5,0.4 1.5,-0.3 1.5,0.3 1.5,-0.3 1.5,0.1 1.5,0.2 1.5,-0.2 1.5,0.1 1.5,-0 1.5,-0.3 1.5,0.3 1.5,0.2 1.5,-0.1 1.5,-0 1.5,0.1 1.5,-0.7 1.5,0.4 1.5,0.3 1.5,-1.4 1.5,1.1 1.5,0.3 1.5,-0.2 1.5,0.1 1.5,-0.4 1.5,0.5 1.5,-0.1 1.5,-0.3 1.5,0.2 1.5,-0.3 1.5,-0.5 1.5,1 1.5,-0.6 1.5,-0.8 1.5,1.4 1.5,-0.3 1.5,0.2 1.5,0.2 1.5,-0.2 1.5,0.2 1.5,-0.3 1.5,-0.6 1.5,1 1.5,-0.9 1.5,0.7 1.5,0.1 1.5,-0.1 1.5,0.2 1.5,0 1.5,-0.2 1.5,0.3 1.5,-0.2 1.5,0.2 1.5,-0.4 1.5,0.1 1.5,0.3 1.5,-0.5 1.5,0.3 1.5,-0.1 1.5,0 1.5,-0.2 1.5,-0 1.5,0.5 1.5,0.1 1.5,-0.6 1.5,0.6 1.5,-0.5 1.5,-0.4 1.5,0.8 1.5,-0.2 1.5,-0.1 1.5,0.2 1.5,-0 1.5,0.1 1.5,-0.3 1.5,0.4 1.5,-0.7 1.5,0.3 1.5,-0 1.5,0.4 0,5.8 -1.5,1.1 -1.5,-0.9 -1.5,-0.2 -1.5,-0 -1.5,-0.1 -1.5,0.4 -1.5,-0.6 -1.5,0.9 -1.5,-0.8 -1.5,0.3 -1.5,-0.3 -1.5,0.4 -1.5,-0.3 -1.5,0 -1.5,-0.2 -1.5,0.1 -1.5,-0 -1.5,1.2 -1.5,-1.2 -1.5,-0.1 -1.5,0.8 -1.5,-0.8 -1.5,0.2 -1.5,-0.3 -1.5,0.2 -1.5,-0.1 -1.5,0.1 -1.5,-0.2 -1.5,0.5 -1.5,-0.5 -1.5,-0.1 -1.5,0 -1.5,-0 -1.5,0.4 -1.5,-0.2 -1.5,-0.2 -1.5,0.4 -1.5,-0.5 -1.5,0.1 -1.5,-0 -1.5,1.4 -1.5,-1.1 -1.5,-0.2 -1.5,-0.2 -1.5,0.1 -1.5,-0.1 -1.5,0.5 -1.5,-0.5 -1.5,0.4 -1.5,0 -1.5,-0.1 -1.5,-0.3 -1.5,0.3 -1.5,-0.1 -1.5,-0.3 -1.5,0.3 -1.5,-0.3 -1.5,-0 -1.5,-0 -1.5,0.1 -1.5,0.2 -1.5,0.1 -1.5,-0.3 -1.5,-0.2 -1.5,0.2 -1.5,0.2 -1.5,-0.3 -1.5,-0 -1.5,0.3 -1.5,-0.2 -1.5,0 -1.5,0 -1.5,0 -1.5,0.3 -1.5,-0.4 -1.5,0.5 -1.5,-0.4 -1.5,-0.3 -1.5,1.7 -1.5,-1.4 -1.5,-0.1 -1.5,0 -1.5,0.2 -1.5,-0.4 -1.5,0.8 -1.5,-0.5 -1.5,-0.1 -1.5,0.2 -1.5,-0.1 -1.5,-0.1 -1.5,-0.1 -1.5,-0.1 -1.5,-0.1 -1.5,0.8 -1.5,-0.5 -1.5,0.2 -1.5,0.3 -1.5,-0.6 -1.5,0.5 -1.5,-0.5 -1.5,0.4 -1.5,-0.7 -1.5,0.3 -1.5,0.5 -1.5,0.6 -1.5,-0.5 -1.5,-0.9 -1.5,-0 -1.5,0 -1.5,0.4 -1.5,-0.1 -1.5,-0.1 -1.5,0 -1.5,-0.2 -1.5,0.4 -1.5,-0.2 -1.5,-0.3 -1.5,0.2 -1.5,0.8 -1.5,-0.7 -1.5,0.7 -1.5,-0.8 -1.5,-0.2 -1.5,0.1 -1.5,-0.1 -1.5,-0 -1.5,0.4 -1.5,-0.5 -1.5,0.4 -1.5,-0.3 -1.5,1.2 -1.5,-1.1 -1.5,0.2 -1.5,0.2 -1.5,-0.6 -1.5,0 -1.5,0.2 -1.5,0.4 -1.5,0.4 -1.5,-0.9 -1.5,0.2 -1.5,-0.3 -1.5,0.1 -1.5,0.2 -1.5,-0.3 -1.5,0.1 -1.5,0.3 -1.5,-0.4 -1.5,0 -1.5,0.1 -1.5,-0.2 -1.5,0.1 -1.5,-0.1 -1.5,0.1 -1.5,0.2 -1.5,0.1 -1.5,-0.4 -1.5,0.1 -1.5,0.6 -1.5,-0.6 -1.5,-0.1 -1.5,-0.1 -1.5,0.1 -1.5,0.2 -1.5,-0.3 -1.5,0.1 -1.5,-0.1 -1.5,0 -1.5,-0.1 -1.5,0.3 -1.5,-0.1 -1.5,-0.1 -1.5,0 -1.5,0.3 -1.5,-0.4 -1.5,0.4 -1.5,-0.1 -1.5,-0.1 -1.5,0.1 -1.5,-0.3 -1.5,0.1 -1.5,0 -1.5,-0.1 -1.5,0.1 -1.5,-0.2 -1.5,0 -1.5,0.3 -1.5,-0.3 -1.5,0.1 -1.5,0 -1.5,0.7 -1.5,-0.4 -1.5,-0.2 -1.5,-0.2 -1.5,0.5 -1.5,-0.5 -1.5,0 -1.5,0.4 -1.5,-0.3 -1.5,-0.2 -1.5,0.2 -1.5,-0 -1.5,0.3 -1.5,-0.2 -1.5,-0.2 -1.5,-0.2 -1.5,0.7 -1.5,-0.4 -1.5,0.1 -1.5,0.4 -1.5,-0.7 -1.5,1.3 -1.5,-1 -1.5,0.1 -1.5,0.1 -1.5,-0.3 -1.5,0.6 -1.5,-0.9 -1.5,-0 -1.5,0.1 -1.5,-0.2 -1.5,0.1 -1.5,0.3 -1.5,0.4 -1.5,-0.8 -1.5,0.7 -1.5,-0.7 -1.5,0.3 -1.5,-0.2 -1.5,0.3 -1.5,-0.3 -1.5,0.2 -1.5,-0.3 -1.5,0.4 -1.5,-0.3 -1.5,-0.2 -1.5,0.5 -1.5,0.7 -1.5,-0.9 -1.5,-0.1 -1.5,0.7 -1.5,-0.8 -1.5,0.3 -1.5,-0.2 -1.5,0.1 -1.5,-0.2 -1.5,0.5 -1.5,-0.2 -1.5,0.4 -1.5,-0.7 -1.5,-0.1 -1.5,0.3 -1.5,-0.1 -1.5,-0.3 -1.5,0 -1.5,0 -1.5,0.1 -1.5,-0.1 -1.5,0 -1.5,0 -1.5,1.2 -1.5,-0.7 -1.5,-0.6 -1.5,0.1 -1.5,0.3 -1.5,-0.1 -1.5,-0.3 -1.5,0.5 -1.5,-0.3 -1.5,-0.2 -1.5,0.2 -1.5,0.2 -1.5,-0.4 -1.5,0.4 -1.5,-0.3 -1.5,0.1 -1.5,-0.2 -1.5,0.6 -1.5,-0.7 -1.5,0.3 -1.5,-0.3 -1.5,0.6 -1.5,-0.2 -1.5,-0.3 -1.5,-0.1 -1.5,0 -1.5,0.2 -1.5,0.6 -1.5,-0.6 -1.5,-0 -1.5,0.4 -1.5,0.2 -1.5,-0.8 -1.5,-0.1 -1.5,0.1 -1.5,1.1 -1.5,-0.8 -1.5,-0.3 -1.5,-0.1 -1.5,1 -1.5,-1 -1.5,0.2 -1.5,0.2 -1.5,-0.5 -1.5,0.1 -1.5,0.2 -1.5,-0.2 -1.5,0 -1.5,1.3 -1.5,-1.2 -1.5,0.2 -1.5,-0.5 -1.5,0.1 -1.5,-0.1 -1.5,0.3 -1.5,-0.3 -1.5,0.2 -1.5,-0 -1.5,-0.2 -1.5,0.6 -1.5,-0.7 -1.5,0.1 -1.5,0 -1.5,-0.1 -1.5,-0 -1.5,0.1 -1.5,0.2 -1.5,0.1 -1.5,-0.2 -1.5,-0.2 -1.5,-0 -1.5,0.1 -1.5,-0.1 -1.5,0.3 -1.5,-0.5 -1.5,0 -1.5,0.4 -1.5,0.2 -1.5,-0.6 -1.5,0 -1.5,0 -1.5,0.1 -1.5,0.3 -1.5,-0.2 -1.5,0.1 -1.5,-0 -1.5,-0.3 -1.5,0.1 -1.5,-0 -1.5,0.3 -1.5,-0.4 -1.5,-0.1 -1.5,0.2 -1.5,0.2 -1.5,0 -1.5,-0 -1.5,-0.1 -1.5,-0.4 -1.5,0.3 -1.5,-0.1 -1.5,0.1 -1.5,0 -1.5,-0.3 -1.5,0.7 -1.5,-0.7 -1.5,0 -1.5,0.3 -1.5,-0.3 -1.5,0.3 -1.5,-0.4 -1.5,0.3 -1.5,-0.3 -1.5,0.3 -1.5,1.1 -1.5,-1.4 -1.5,0.5 -1.5,-0.5 -1.5,0.5 -1.5,-0.5 -1.5,0.5 -1.5,-0.4 -1.5,0.3 -1.5,-0.5 -1.5,0.5 -1.5,-0.5 -1.5,-0 -1.5,0.1 -1.5,-0.1 -1.5,0 -1.5,0.5 -1.5,-0.4 -1.5,-0.2 -1.5,-0 -1.5,0 -1.5,0.2 -1.5,-0.1 -1.5,-0.2 -1.5,0.1 -1.5,0.1 -1.5,-0 -1.5,-0.2 -1.5,0.4 -1.5,1 -1.5,-1.5 -1.5,0.2 -1.5,-0.2 -1.5,0.6 -1.5,-0.3 -1.5,0.1 -1.5,-0.3 -1.5,0.4 -1.5,0 -1.5,0.7 -1.5,-0.9 -1.5,0.3 -1.5,-0.6 -1.5,0.1 -1.5,0.1 -1.5,-0.2 -1.5,-0.1 -1.5,0.1 -1.5,-0.1 -1.5,-0.1 -1.5,0.2 -1.5,-0.1 -1.5,-0 -1.5,0.1 -1.5,-0.2 -1.5,0.1 -1.5,-0.1 -1.5,0.7 -1.5,-0.7 -1.5,0.1 -1.5,-0.2 -1.5,1.2 -1.5,-1.1 -1.5,0.3 -1.5,-0.3 -1.5,-0.1 -1.5,0.3 -1.5,-0.3 -1.5,0 -1.5,-0.1 -1.5,0.1 -1.5,0.1 -1.5,-0 -1.5,-0.1 -1.5,-0.2 -1.5,1.2 -1.5,-1.1 -1.5,-0.1 -1.5,0.1 -1.5,-0 -1.5,0.2 -1.5,-0.1 -1.5,-0 -1.5,-0.3 -1.5,1 -1.5,-0.9 -1.5,0.8 -1.5,-0.6 -1.5,-0.3 -1.5,0.8 -1.5,-0.9 -1.5,0.4 -1.5,0.1 -1.5,-0.5 -1.5,-0.1 -1.5,0.3 -1.5,0 -1.5,0 -1.5,0.2 -1.5,-0.4 -1.5,0.9 -1.5,-0.7 -1.5,0.1 -1.5,-0 -1.5,-0.5 -1.5,0.1 -1.5,0.3 -1.5,-0.4 -1.5,0 -1.5,1.4 -1.5,-1.3 -1.5,-0.2 -1.5,0.1 -1.5,0.3 -1.5,-0.4 -1.5,0.1 -1.5,-0 -1.5,0.2 -1.5,-0.2 -1.5,0.3 -1.5,-0.4 -1.5,0.1 -1.5,0.2 -1.5,-0.4 -1.5,0.2 -1.5,-0 -1.5,-0.1 -1.5,1.2 -1.5,-1.2 -1.5,-0.2 -1.5,0.3 -1.5,-0.1 -1.5,-0 -1.5,0.1 -1.5,-0.3 -1.5,-0.1 -1.5,-0.1 -1.5,0.1 -1.5,0.2 -1.5,0 -1.5,-0.1 -1.5,0 -1.5,-0.1 -1.5,-0.1 -1.5,0.2 -1.5,-0.1 -1.5,-0.1 -1.5,0.1 -1.5,-0.3 -1.5,0 -1.5,1 -1.5,-0.6 -1.5,0.1 -1.5,-0.5 -1.5,0 -1.5,0.7 -1.5,-0.5 -1.5,-0.1 -1.5,-0.2 -1.5,-0.1 -1.5,0.2 -1.5,-0.2 -1.5,0.6 -1.5,-0.3 -1.5,-0.3 -1.5,0.2 -1.5,-0.2 -1.5,-0.1 -1.5,1 -1.5,-0.9 -1.5,0.2 -1.5,-0.2 -1.5,-0.1 -1.5,0.5 -1.5,0.3 -1.5,-0.3 -1.5,-0.5 -1.5,-0 -1.5,-0 -1.5,-0 -1.5,0.2 -1.5,-0.4 -1.5,0.1 -1.5,0 -1.5,0.7 -1.5,-0.5 -1.5,-0.4 -1.5,-0 -1.5,0.1 -1.5,0.3 -1.5,-0 -1.5,-0.4 -1.5,0.1 -1.5,-0.1 -1.5,-0 -1.5,0 -1.5,0.1 -1.5,-0.3 -1.5,0.3 -1.5,-0.1 -1.5,-0.1 -1.5,0.7 -1.5,-0.3 -1.5,0.1 -1.5,-0.5 -1.5,-0.2 -1.5,-0 -1.5,0.2 -1.5,-0.3 -1.5,0.1 -1.5,0.6 -1.5,-0.6 -1.5,0.4 -1.5,-0.2 -1.5,-0.2 -1.5,-0 -1.5,0 -1.5,-0.3 -1.5,0.4 -1.5,-0.1 -1.5,-0.3 -1.5,0.1 -1.5,0 -1.5,0.2 -1.5,-0.3 -1.5,-0.1 -1.5,1.1 -1.5,-0.3 -1.5,-0.7 -1.5,0.5 -1.5,-0.7 -1.5,0.1 -1.5,0.3 -1.5,-0.4 -1.5,-0 -1.5,0.4 -1.5,-0.2 -1.5,-0.1 -1.5,-0.2 -1.5,0.2 -1.5,0.7 -1.5,-0.8 -1.5,0 -1.5,-0.1 -1.5,-0 -1.5,-0.2 -1.5,0.2 -1.5,0 -1.5,-0.1 -1.5,-0.3 -1.5,0 -1.5,0.5 -1.5,-0.2 -1.5,-0.2 -1.5,0.3 -1.5,-0.2 -1.5,0.5 -1.5,-0.7 -1.5,-0.1 -1.5,0.2 -1.5,0.1 -1.5,0 -1.5,0.5 -1.5,-0.5 -1.5,-0.3 -1.5,0.4 -1.5,-0.3 -1.5,-0.2 -1.5,-0.1 -1.5,-0 -1.5,0.2 -1.5,0 -1.5,-0.1 -1.5,-0.1 -1.5,0.1 -1.5,0.3 -1.5,0.9 -1.5,-1.4 -1.5,0.5 -1.5,-0.7 -1.5,1.6 -1.5,-1.3 -1.5,0.2 -1.5,-0.2 -1.5,-0.4 -1.5,0.2 -1.5,0.4 -1.5,0 -1.5,-0.5 -1.5,-0 -1.5,-0.2 -1.5,0.1 -1.5,0.9 -1.5,-0.7 -1.5,-0.2 -1.5,-0.3 -1.5,0 -1.5,0.1 -1.5,0.3 -1.5,-0.4 -1.5,-0.1 -1.5,0.1 -1.5,0.3 -1.5,-0 -1.5,-0.3 -1.5,0.2 -1.5,0.2 -1.5,-0.6 -1.5,0.1 -1.5,0.4 -1.5,-0.6 -1.5,0.4 -1.5,-0.3 -1.5,0.2 -1.5,-0 -1.5,0 -1.5,0.3 -1.5,-0.7 -1.5,-0.1 -1.5,1 -1.5,-0.9 -1.5,0 -1.5,0.1 -1.5,1.2 -1.5,-1.4 -1.5,0.3 -1.5,0 -1.5,-0.3 -1.5,0.6 -1.5,-0.2 -1.5,-0.6 -1.5,-0 -1.5,0.7 -1.5,-0.3 -1.5,0.2 -1.5,-0.7 -1.5,-0.2 -1.5,0.1 -1.5,0.2 -1.5,-0.2 -1.5,-0.2 -1.5,0.2 -1.5,0.4 -1.5,-0.6 -1.5,0.3 -1.5,-0.4 -1.5,0.7 -1.5,-0.5 -1.5,-0.1 -1.5,-0.1 -1.5,-0 -1.5,-0.2 -1.5,0.3 -1.5,-0.1 -1.5,-0 -1.5,-0.2 -1.5,0.3 -1.5,-0.3 -1.5,0 -1.5,-0.2 -1.5,-0 -1.5,0.2 -1.5,-0.2 -1.5,-0.1 -1.5,0.2 -1.5,-0.2 -1.5,0.9 -1.5,-1.2 -1.5,0.2 -1.5,-0 -1.5,-0 -1.5,-0.2 -1.5,0.9 -1.5,-0.6 -1.5,-0.5 -1.5,1.5 -1.5,-1.5 -1.5,0.3 -1.5,-0.5 -1.5,0.3 -1.5,0.1 -1.5,-0.3 -1.5,-0.3 -1.5,0.1 -1.5,-0.1 -1.5,-0.1 -1.5,0.2 -1.5,0.1 -1.5,0 -1.5,-0.3 -1.5,-0.2 -1.5,0.5 -1.5,-0.3 -1.5,0.4 -1.5,-0.6 -1.5,-0.2 -1.5,0.3 -1.5,-0.3 -1.5,0 -1.5,0.3 -1.5,-0.5 -1.5,0.8 -1.5,0.7 -1.5,-1.3 -1.5,-0.2 -1.5,-0.2 -1.5,0.1 -1.5,0.3 -1.5,-0.5 -1.5,-0.1 -1.5,0 -1.5,0.4 -1.5,-0.4 -1.5,1.6 -1.5,-0.9 -1.5,-0.6 -1.5,0.1 -1.5,-0 -1.5,-0.3 -1.5,1 -1.5,-1.1 -1.5,-0.2 -1.5,0.1 -1.5,0.2 -1.5,0.1 -1.5,-0.5 -1.5,0.3 -1.5,-0.6 -1.5,0.4 -1.5,-0.2 -1.5,-0.4 -1.5,-0.1 -1.5,0.6 -1.5,-0.5 -1.5,-0.3 -1.5,-0.1 -1.5,0.1 -1.5,-0.1 -1.5,0 -1.5,-0.2 -1.5,0.2 -1.5,-0.4 -1.5,-0.1 -1.5,-0.1 -1.5,-0.1 -1.5,0.3 -1.5,-0.4 -1.5,0.1 -1.5,-0.4 -1.5,0 -1.5,0.2 -1.5,-0.6 -1.5,-0.2 -1.5,-0.1 -1.5,0.3 -1.5,-0.7 -1.5,-0.1 -1.5,0.4 -1.5,-0.5 -1.5,0 -1.5,-0.6 -1.5,0.1 -1.5,-0.4 -1.5,0.1 -1.5,-0.5 -1.5,0 -1.5,0.1 -1.5,-0.9 -1.5,-0.3 -1.5,-0.1 -1.5,-0.5 -1.5,-0.3 -1.5,0.5 -1.5,-0.8 -1.5,-0.3 -1.5,0.1 -1.5,-0.2 -1.5,-0.7 -1.5,-0.2 -1.5,0.1 -1.5,-0.7 -1.5,-0.4 -1.5,0 -1.5,-0.5 -1.5,-0 -1.5,-0.5 -1.5,0.9 -1.5,-1.6 -1.5,-0.3 -1.5,-0.3 -1.5,-0.5 -1.5,-0 -1.5,-0.7 -1.5,-0.3 -1.5,-0.5 -1.5,0.3 -1.5,-1.1 -1.5,-0.2 -1.5,-0.7 -1.5,-0.4 -1.5,-0.7 -1.5,-0.3 -1.5,-0.8 -1.5,-0.7 -1.5,-0.5 -1.5,-1.3 -1.5,-0.7 -1.5,-0.1 -1.5,-1.8 -1.5,-1.1 -1.5,-0.7 -1.5,-1.1 -1.5,-2.1 -1.5,-1.6 -1.5,-1.6 -1.5,-1.8 -1.5,-2.3 -1.5,-2.2 -1.5,-2.6 -1.5,-3 -1.5,-3 -1.5,-3.7 -1.5,-3.8 -1.5,-4 -1.5,-3.3 -1.5,-3.5 -1.5,-1.2 -1.5,0 -1.5,0.1 -1.5,-0 -1.5,0.2 -1.5,-0.7 -1.5,1 -1.5,-0.9 -1.5,0 -1.5,0.2 -1.5,-0.3 -1.5,0.6 -1.5,0.3 -1.5,-0.5 -1.5,-0.6 -1.5,0 -1.5,-0.3 -1.5,0.4 -1.5,-0.5 -1.5,-0.4 -1.5,0.1 -1.5,0.1 -1.5,-0.8 -1.5,-0.3 -1.5,-0.1 -1.5,-0.4 -1.5,-0.3 -1.5,-0.1 -1.5,0.4 -1.5,-0.8 -1.5,-0.3 -1.5,-0.4 -1.5,0.2 -1.5,-0.7 -1.5,0.1 -1.5,-0.5 -1.5,-0.3 -1.5,-0.4 -1.5,-0.2 -1.5,-0 -1.5,-0.8 -1.5,-0.7 -1.5,-0.3 -1.5,-1 -1.5,0.8 -1.5,-0.9 -1.5,-0.2 -1.5,-0.4 -1.5,-0.1 -1.5,-0.1 -1.5,0.8 -1.5,-0.1 -1.5,-0.2 -1.5,0.5 -1.5,-0.3 -1.5,-0.1 -1.5,0.1 -1.5,0.2 -1.5,-0.3 -1.5,-0 -1.5,0.1 -1.5,0.3 -1.5,-0.3 -1.5,0 -1.5,-0.1 -1.5,0 -1.5,0 -1.5,-0 -1.5,0.2 -1.5,0.2 -1.5,-0.5 -1.5,0.4 -1.5,-0.3 -1.5,0.1 -1.5,-0.1 -1.5,0 -1.5,0 -1.5,0.2 -1.5,-0 -1.5,-0.2 -1.5,-0.1 -1.5,-0.1 -1.5,-0.1 -1.5,0 -1.5,0 -1.5,0.2 -1.5,-0.4 -1.5,0.1 -1.5,-0.2 -1.5,0.1 -1.5,0.1 -1.5,-0.1 -1.5,0.2 -1.5,0.8 -1.5,-1.1 -1.5,0.1 -1.5,0.7 -1.5,-0.9 -1.5,0.6 -1.5,-0.4 -1.5,0.2 -1.5,-0.2 -1.5,0.4 -1.5,-0.2 -1.5,1.3 -1.5,-1.2 -1.5,-0.2 -1.5,0.1 -1.5,0.2 -1.5,-0.1 -1.5,-0.2 -1.5,0.1 -1.5,-0.2 -1.5,0.3 -1.5,-0.3 -1.5,-0 -1.5,0.3 -1.5,0.1 -1.5,1.3 -1.5,-1.6 -1.5,0.1 -1.5,0.4 -1.5,-0.4 -1.5,1.5 -1.5,0.1 -1.5,-1 -1.5,0.7 -1.5,-1 -1.5,0.5 -1.5,-0 -1.5,-0.1 -1.5,0.1 -1.5,-0 -1.5,-0.1 -1.5,-0.1 -1.5,-0 -1.5,-0.2 -1.5,0.2 -1.5,0.1 -1.5,-0.1 -1.5,-0.2 -1.5,0.2 -1.5,0 -1.5,-0.1 -1.5,-0.2 -1.5,0.1 -1.5,-0.2 -1.5,-0 -1.5,0.3 -1.5,1 -1.5,-1 -1.5,-0.3 -1.5,0.5 -1.5,-0.4 -1.5,0.1 -1.5,-0 -1.5,-0.1 -1.5,-0.1 -1.5,0.1 -1.5,0.5 -1.5,-0.2 -1.5,-0.3 -1.5,0.3 -1.5,-0.3 -1.5,0 -1.5,-0.1 -1.5,-0.2 -1.5,0.5 -1.5,-0.2 -1.5,-0 -1.5,1.5 -1.5,-2 -1.5,0.1 -1.5,0 -1.5,0.3 -1.5,-0.2 -1.5,-0.1 -1.5,-0.2 -1.5,0.3 -1.5,-0.3 -1.5,0.3 -1.5,-0 -1.5,0.1 -1.5,0.4 -1.5,-0.2 -1.5,-0.3 -1.5,-0.1 -1.5,0.1 -1.5,-0.1 -1.5,1.5 -1.5,-1.2 -1.5,0 -1.5,-0.2 -1.5,-0.1 -1.5,-0.1 -1.5,-0 -1.5,0.1 -1.5,0.4 -1.5,0.1 -1.5,-0.6 -1.5,1.3 -1.5,-0.9 -1.5,0.1 -1.5,-0.4 -1.5,0 -1.5,0.2 -1.5,0 -1.5,0.3 -1.5,0.3 -1.5,-0 -1.5,-0.5 -1.5,0.1 -1.5,0.4 -1.5,-0.2 -1.5,-0.2 -1.5,0.2 -1.5,0.5 -1.5,-0.3 -1.5,-0 -1.5,0.1 -1.5,0 -1.5,-0.5 -1.5,0.3 -1.5,-0.1 -1.5,0 -1.5,-0.3 -1.5,-0.1 -1.5,0.1 -1.5,0.3 -1.5,0 -1.5,-0.3 -1.5,0.7 -1.5,-0.5 -1.5,-0.2 -1.5,0.1 -1.5,0.1 -1.5,0.2 -1.5,-0 -1.5,-0.3 -1.5,-0.1 -1.5,0 -1.5,-0 -1.5,0.3 -1.5,0.7 -1.5,0.2 -1.5,-0.8 -1.5,-0.6 -1.5,0.2 -1.5,-0.1 -1.5,-0.1 -1.5,0.2 -1.5,-0.2 -1.5,0.2 -1.5,1.3 -1.5,-1.7 -1.5,1.3 -1.5,-1.3 -1.5,0.1 -1.5,0.5 -1.5,-0.5 -1.5,0.1 -1.5,-0.2 -1.5,0.3 -1.5,-0.2 -1.5,0.2 -1.5,-0.2 -1.5,0.3 -1.5,-0.3 -1.5,0.2 -1.5,-0.1 -1.5,0.1 -1.5,0.1 -1.5,0.1 -1.5,0.4 -1.5,-0.6 -1.5,1.3 -1.5,-1.5 -1.5,0.1 -1.5,-0.2 -1.5,0.3 -1.5,0 -1.5,-0.2 -1.5,0.5 -1.5,-0.4 -1.5,-0.1 -1.5,-0 -1.5,0 -1.5,0.3 -1.5,0.3 -1.5,-0.6 -1.5,0 -1.5,0.5 -1.5,-0.1 -1.5,-0.2 -1.5,-0 -1.5,0.4 -1.5,0 -1.5,0.1 -1.5,-0.2 -1.5,-0.3 -1.5,0.3 -1.5,-0 -1.5,-0 -1.5,-0.3 -1.5,0.3 -1.5,-0 -1.5,-0.4 -1.5,-0 -1.5,0 -1.5,0.6 -1.5,-0.4 -1.5,-0.2 -1.5,0.1 -1.5,-0.1 -1.5,0.2 -1.5,0.1 -1.5,1.1 -1.5,-1.2 -1.5,0.3 -1.5,-0.2 -1.5,0.1 -1.5,-0.1 -1.5,0.2 -1.5,0 -1.5,-0 -1.5,0.1 -1.5,-0.3 -1.5,0.4 -1.5,0.3 -1.5,-0.8 -1.5,0.1 -1.5,-0.1 -1.5,-0.2 -1.5,0 -1.5,0.8 -1.5,-0.6 -1.5,-0.2 -1.5,0.6 -1.5,-0.3 -1.5,-0.3 -1.5,0.2 -1.5,0.4 -1.5,-0 -1.5,-0.5 -1.5,-0.1 -1.5,0.4 -1.5,-0.4 -1.5,0.5 -1.5,-0.5 -1.5,0.1 -1.5,0.6 -1.5,0.3 -1.5,-0.8 -1.5,0.2 -1.5,-0.1 -1.5,0.3 -1.5,-0.6 -1.5,0 -1.5,0.6 -1.5,-0.7 -1.5,-0 -1.5,0.6 -1.5,-0.3 -1.5,1 -1.5,-1.3 -1.5,0.1 -1.5,0.1 -1.5,-0.2 -1.5,-0 -1.5,-0.1 -1.5,0.1 -1.5,-0.1 -1.5,0.2 -1.5,-0.1 -1.5,0.4 -1.5,-0.2 -1.5,-0.1 -1.5,-0 -1.5,0.5 -1.5,-0.5 -1.5,1 -1.5,0.7 -1.5,-1.7 -1.5,0.8 -1.5,-0.8 -1.5,0.7 -1.5,-0.7 -1.5,0.6 -1.5,-0.5 -1.5,-0.2 -1.5,0 -1.5,0.2 -1.5,0.4 -1.5,-0.6 -1.5,0.1 -1.5,0.3 -1.5,-0.3 -1.5,0.4 -1.5,1 -1.5,-1.1 -1.5,0.2 -1.5,0 -1.5,0.1 -1.5,-0.4 -1.5,0.3 -1.5,-0.2 -1.5,-0.1 -1.5,0.3 -1.5,-0.3 -1.5,0 -1.5,-0 -1.5,0.1 -1.5,0.4 -1.5,-0.5 -1.5,0 -1.5,0.3 -1.5,-0.3 -1.5,-0.1 -1.5,-0.1 -1.5,0.4 -1.5,0 -1.5,-0.3 -1.5,0 -1.5,0.2 -1.5,-0.2 -1.5,0.7 -1.5,-0.7 -1.5,0.2 -1.5,-0.1 -1.5,-0 -1.5,0.2 -1.5,0 -1.5,-0.3 -1.5,1.7 -1.5,-1.6 -1.5,0.3 -1.5,-0.2 -1.5,-0.2 -1.5,0.3 -1.5,-0.1 -1.5,-0.1 -1.5,-0.2 -1.5,1.2 -1.5,-0.9 -1.5,-0 -1.5,0.4 -1.5,-0.6 -1.5,-0.2 -1.5,0 -1.5,0.2 -1.5,-0.3 -1.5,0.5 -1.5,-0.3 -1.5,0.1 -1.5,0.4 -1.5,-0.2 -1.5,-0.4 -1.5,0.2 -1.5,0.1 -1.5,-0.1 -1.5,0.1 -1.5,-0.2 -1.5,0.4 -1.5,-0 -1.5,-0 -1.5,-0.5 -1.5,0.4 -1.5,-0.3 -1.5,0.1 -1.5,-0.1 -1.5,-0.1 -1.5,-0 -1.5,0 -1.5,-0.2 -1.5,0 -1.5,0.6 -1.5,-0.1 -1.5,-0.3 -1.5,0.1 -1.5,-0.1 -1.5,0.3 -1.5,0.1 -1.5,-0.1 -1.5,0 -1.5,0.4 -1.5,-0.2 -1.5,-0.3 -1.5,-0.1 -1.5,0.5 -1.5,-0.2 -1.5,0 -1.5,0.2 -1.5,-0.3 -1.5,-0.2 -1.5,0.2 -1.5,-0 -1.5,0.4 -1.5,-0.6 -1.5,0.9 -1.5,-0.4 -1.5,-0.6 -1.5,0.2 -1.5,0.2 -1.5,0.2 -1.5,-0 -1.5,0.1 -1.5,0.1 -1.5,-0.4 -1.5,-0.2 -1.5,0.5 -1.5,-0.2 -1.5,-0.1 -1.5,0.2 -1.5,-0.2 -1.5,0 -1.5,0.5 -1.5,-0.2 -1.5,0.2 -1.5,-0.3 -1.5,-0 -1.5,-0.2 -1.5,-0.1 -1.5,-0 -1.5,0 -1.5,0.5 -1.5,-0.4 -1.5,-0.2 -1.5,0.4 -1.5,-0.2 -1.5,-0.2 -1.5,0.1 -1.5,0.2 -1.5,-0.3 -1.5,0.3 -1.5,-0.2 -1.5,-0.2 -1.5,0.1 -1.5,0.3 -1.5,1.5 -1.5,-1.8 -1.5,0 -1.5,0.2 -1.5,0.4 -1.5,-0.5 -1.5,-0.1 -1.5,0.2 -1.5,-0.3 -1.5,0.1 -1.5,0.2 -1.5,-0.4 -1.5,-0.1 -1.5,0.4 -1.5,0 -1.5,-0.4 -1.5,-0 -1.5,0.2 -1.5,0.4 -1.5,-0.6 -1.5,-0.2 -1.5,0.1 -1.5,-0 -1.5,0.6 -1.5,-0.7 -1.5,0.2 -1.5,0.2 -1.5,-0.1 -1.5,0 -1.5,0.1 -1.5,-0.2 -1.5,0.5 -1.5,-0.3 -1.5,0 -1.5,0.3 -1.5,-0 -1.5,0 -1.5,-0.4 -1.5,0.3 -1.5,-0.3 -1.5,0.2 -1.5,-0.1 -1.5,0.1 -1.5,-0.2 -1.5,0.1 -1.5,0.1 -1.5,-0.1 -1.5,0.1 -1.5,0.1 -1.5,-0.1 -1.5,0.4 -1.5,-0.2 -1.5,-0.1 -1.5,0.1 -1.5,0.3 -1.5,-0.3 -1.5,0.2 -1.5,0.2 -1.5,0.2 -1.5,0.9 -1.5,-1.4 -1.5,0.1 -1.5,0.3 -1.5,-0.3 -1.5,0.7 -1.5,-0.6 -1.5,0.3 -1.5,0.2 -1.5,-0.3 -1.5,-0.5 -1.5,0.2 -1.5,-0.2 -1.5,-0.1 -1.5,0.2 -1.5,-0.1 -1.5,0 -1.5,0.1 -1.5,-0.2 -1.5,-0.1 -1.5,0.3 -1.5,-0.2 -1.5,-0 -1.5,0.2 -1.5,0 -1.5,0 -1.5,0 -1.5,0.2 -1.5,-0.3 -1.5,0.6 -1.5,-0.6 -1.5,0.1 -1.5,-0.3 -1.5,1 -1.5,-0.7 -1.5,-0.6 -1.5,0.1 -1.5,0.1 -1.5,-0.2 -1.5,-0.1 -1.5,0 -1.5,0.1 -1.5,-0.3 -1.5,0.1 -1.5,-0 -1.5,0.3 -1.5,-0.3 -1.5,0.3 -1.5,-0.3 -1.5,0 -1.5,0.3 -1.5,-0.1 -1.5,0.2 -1.5,-0.3 -1.5,0.1 -1.5,0.2 -1.5,0 -1.5,0.3 -1.5,-0.3 -1.5,-0.1 -1.5,0 -1.5,0.1 -1.5,-0.1 -1.5,0.1 -1.5,0.3 -1.5,0.9 -1.5,-1.3 -1.5,0.2 -1.5,-0.1 -1.5,0.5 -1.5,-0.1 -1.5,-0.1 -1.5,1.1 -1.5,-0.7 -1.5,-0.6 -1.5,0.4 -1.5,-0.3 -1.5,0.5 -1.5,0.3 -1.5,0.2 -1.5,-0.7 -1.5,-0 -1.5,0.5 -1.5,-0.4 -1.5,0.2 -1.5,-0.4 -1.5,0.1 -1.5,0.1 -1.5,-0.1 -1.5,0.1 -1.5,-0 -1.5,0.1 -1.5,-0.3 -1.5,0 -1.5,1.8 -1.5,-1.8 -1.5,-0.3 -1.5,0.3 -1.5,0.5 -1.5,-0.5 -1.5,-0.2 -1.5,-0 -1.5,-0.2 -1.5,0.2 -1.5,0.6 -1.5,-0.5 -1.5,-0.1 -1.5,0.2 -1.5,-0.3 -1.5,0.2 -1.5,0.7 -1.5,-1 -1.5,1 -1.5,-0.8 -1.5,-0.2 -1.5,-0.1 -1.5,0.2 -1.5,-0.3 -1.5,-0.1 -1.5,0.5 -1.5,-0.3 -1.5,0.2 -1.5,0.3 -1.5,-0.7 -1.5,0.3 -1.5,-0.3 -1.5,0.9 -1.5,-0.5 -1.5,-0.3 -1.5,0.3 -1.5,0 -1.5,-0.1 -1.5,-0.1 -1.5,0.2 -1.5,-0.1 -1.5,-0.1 -1.5,0.1 -1.5,0.2 -1.5,-0.3 -1.5,0.7 -1.5,-0.7 -1.5,0.1 -1.5,0.3 -1.5,-0.2 -1.5,0.7 -1.5,-0.7 -1.5,0.2 -1.5,-0.1 -1.5,-0.2 -1.5,0 -1.5,0.1z" fill="#e4304e"/>
  <path d="M1125,771.9 1126,772.9 1127,774.8 1128,777 1129,779.4 1130,782.1 1131,784.8 1132,787.4 1133,789.8 1134,792.1 1135,794.2 1136,796.2 1137,798 1138,799.6 1139,801.2 1140,802.6 1141,804 1142,805.3 1143,806.5 1144,807.7 1145,808.8 1146,809.7 1147,810.7 1148,811.5 1149,812.4 1150,813.1 1151,813.9 1152,814.6 1153,815.2 1154,815.8 1155,816.4 1156,817 1157,817.5 1158,818 1159,818.5 1160,819 1161,819.5 1162,819.9 1163,820.3 1164,820.7 1165,821 1166,821.4 1167,821.7 1168,822 1169,822.3 1170,822.6 1171,822.9 1172,823.1 1173,823.4 1174,823.7 1175,823.9 1176,824.2 1177,824.5 1178,824.7 1179,825 1180,825.2 1181,825.4 1182,825.6 1183,825.9 1184,826.1 1185,826.3" stroke="#e4304e" stroke-width="3" fill="none" stroke-linejoin="round"/>
  <path d="M4,992.4l1.5,-0 1.5,-0.1 1.5,-0.1 1.5,-0.6 1.5,0.5 1.5,-0.2 1.5,-0 1.5,0.2 1.5,0 1.5,-0 1.5,-0.5 1.5,0.3 1.5,-0 1.5,-0.4 1.5,0.1 1.5,0.2 1.5,-0.3 1.5,0 1.5,0.3 1.5,0.1 1.5,-0.1 1.5,0.4 1.5,0.1 1.5,0.1 1.5,0.1 1.5,0.4 1.5,-0.1 1.5,0 1.5,-0 1.5,0.2 1.5,0.3 1.5,-0.1 1.5,0.3 1.5,-0.1 1.5,-0.1 1.5,-0.1 1.5,-0.7 1.5,0.4 1.5,-0 1.5,-0.6 1.5,0.3 1.5,-0.1 1.5,-0.5 1.5,0.4 1.5,-1.6 1.5,-0.5 1.5,1.4 1.5,0.4 1.5,-0.9 1.5,1.5 1.5,-0.2 1.5,0.4 1.5,-0.2 1.5,0.3 1.5,0.2 1.5,-2 1.5,1.8 1.5,0.2 1.5,-1.3 1.5,-0.6 1.5,1.3 1.5,0.1 1.5,-0.3 1.5,0 1.5,-0.2 1.5,-0.4 1.5,-0.2 1.5,-0.1 1.5,0.2 1.5,-0.1 1.5,-0 1.5,-0.3 1.5,-0.1 1.5,-1.1 1.5,1.1 1.5,0.7 1.5,0.1 1.5,0.2 1.5,0.1 1.5,0.2 1.5,-0.1 1.5,0.2 1.5,0 1.5,0.3 1.5,0.1 1.5,0 1.5,-0.2 1.5,0.1 1.5,-0.1 1.5,-0.4 1.5,0.2 1.5,-1.2 1.5,0.6 1.5,-0.1 1.5,-0.4 1.5,0.4 1.5,-0 1.5,-0.3 1.5,0.2 1.5,-0.1 1.5,-0.1 1.5,0.1 1.5,0.3 1.5,-0.2 1.5,0.4 1.5,0 1.5,0.2 1.5,-0 1.5,-0.5 1.5,0.1 1.5,0.8 1.5,0.1 1.5,-0 1.5,0.2 1.5,-0.2 1.5,0.1 1.5,0.2 1.5,-0.4 1.5,0.2 1.5,-0.1 1.5,-0 1.5,-0.4 1.5,0.5 1.5,-0.1 1.5,0 1.5,-0.1 1.5,-0.1 1.5,-0.3 1.5,0.4 1.5,0.1 1.5,-0.5 1.5,0.1 1.5,-0.8 1.5,1 1.5,-0.1 1.5,-0.3 1.5,0.3 1.5,-0 1.5,-0.1 1.5,-0.3 1.5,-0.3 1.5,0.3 1.5,-0.1 1.5,0.1 1.5,0 1.5,-0.3 1.5,0.3 1.5,-0.3 1.5,0.2 1.5,-0.1 1.5,-0 1.5,0.2 1.5,-0 1.5,0.1 1.5,-0.5 1.5,0.5 1.5,0.1 1.5,-0.6 1.5,-0.1 1.5,0.4 1.5,0.3 1.5,-0 1.5,-0.3 1.5,0.1 1.5,-0.4 1.5,0.1 1.5,-0.1 1.5,-0.2 1.5,0.2 1.5,-0.1 1.5,0.3 1.5,0 1.5,-0.1 1.5,-1.4 1.5,1.7 1.5,-0.1 1.5,0 1.5,0.4 1.5,-0.6 1.5,0.3 1.5,0.7 1.5,-0 1.5,0.1 1.5,-0.1 1.5,-0.2 1.5,-0.1 1.5,-0 1.5,0.3 1.5,-0.1 1.5,-0.1 1.5,-0.8 1.5,0.6 1.5,-0.3 1.5,-0.3 1.5,-0.5 1.5,0.7 1.5,-0 1.5,-0.4 1.5,0.5 1.5,-0.1 1.5,0.1 1.5,0.1 1.5,0.1 1.5,0.1 1.5,0.4 1.5,0.3 1.5,0 1.5,-1.9 1.5,2.3 1.5,-0.8 1.5,1 1.5,-0.1 1.5,-0.2 1.5,-0.1 1.5,0.2 1.5,-0.6 1.5,0.1 1.5,-0.1 1.5,-0.2 1.5,-0.3 1.5,-0.4 1.5,-0.1 1.5,-0 1.5,-0.7 1.5,0.4 1.5,-0 1.5,-0.2 1.5,-0.3 1.5,0.2 1.5,-1.2 1.5,1.5 1.5,0.1 1.5,-0.2 1.5,0.5 1.5,0.1 1.5,0.1 1.5,-0.1 1.5,0.4 1.5,-0.5 1.5,-0.6 1.5,1 1.5,0.2 1.5,-0.3 1.5,-1.9 1.5,1.9 1.5,-0.1 1.5,-1.3 1.5,1 1.5,-0 1.5,-1.4 1.5,1.2 1.5,-0.2 1.5,0.2 1.5,-0.2 1.5,0.3 1.5,0.1 1.5,-0.1 1.5,-0.1 1.5,-0.6 1.5,1.2 1.5,0 1.5,0.3 1.5,-0 1.5,0.2 1.5,0.1 1.5,-0.4 1.5,0 1.5,0.3 1.5,-0 1.5,-0.3 1.5,0.2 1.5,-0.2 1.5,-0.4 1.5,0.4 1.5,-0 1.5,-0.4 1.5,0.1 1.5,0 1.5,0.2 1.5,-0.2 1.5,-0.1 1.5,0.4 1.5,-0 1.5,-0.3 1.5,-0.1 1.5,0.4 1.5,-0 1.5,0.2 1.5,-0.6 1.5,0.3 1.5,-0.9 1.5,0.9 1.5,-0.1 1.5,0.1 1.5,0.4 1.5,-0.1 1.5,-1.3 1.5,1.2 1.5,-0.1 1.5,-0.3 1.5,-0.2 1.5,0.1 1.5,0.4 1.5,-0.2 1.5,-0.2 1.5,0.1 1.5,0 1.5,0.2 1.5,0 1.5,-0.4 1.5,0.3 1.5,-1.4 1.5,1.4 1.5,-0.4 1.5,-0.5 1.5,-0.4 1.5,0.7 1.5,0.1 1.5,-0.2 1.5,-0.1 1.5,-0.3 1.5,0.1 1.5,-1.8 1.5,1.9 1.5,-0.4 1.5,0.5 1.5,-0.1 1.5,0.1 1.5,-0.3 1.5,0.2 1.5,0 1.5,0.6 1.5,0.4 1.5,-0.2 1.5,0.3 1.5,0.4 1.5,-0.1 1.5,-0.6 1.5,0.9 1.5,-0.1 1.5,-0.2 1.5,-0.1 1.5,0.1 1.5,0 1.5,-0.4 1.5,-0.3 1.5,0.3 1.5,-0 1.5,-0.4 1.5,-0 1.5,-0.7 1.5,0.6 1.5,-1.3 1.5,1.2 1.5,-0.1 1.5,0.4 1.5,-0.2 1.5,0.2 1.5,-0.7 1.5,1.1 1.5,-0.4 1.5,0.5 1.5,0.3 1.5,0.2 1.5,-0.4 1.5,0.2 1.5,0 1.5,0.3 1.5,-0.1 1.5,-0.6 1.5,0.1 1.5,-0.2 1.5,0.2 1.5,-0.8 1.5,0.5 1.5,-0.3 1.5,-0.1 1.5,-0.3 1.5,0.1 1.5,0 1.5,-0.1 1.5,0.3 1.5,0 1.5,-0.5 1.5,0.3 1.5,0.6 1.5,-0.9 1.5,1 1.5,-0.5 1.5,0.6 1.5,0.3 1.5,-0.3 1.5,-0.4 1.5,-0.5 1.5,0.5 1.5,0.3 1.5,-0.6 1.5,0.6 1.5,-0.7 1.5,0.1 1.5,0 1.5,-0 1.5,-0.3 1.5,-0.2 1.5,-1.3 1.5,0.9 1.5,0.3 1.5,-0.5 1.5,0.4 1.5,-0.6 1.5,0.5 1.5,0.3 1.5,-0.1 1.5,0.4 1.5,0.3 1.5,-0.5 1.5,0.6 1.5,0.2 1.5,0.1 1.5,-1.2 1.5,1.3 1.5,0.2 1.5,0.1 1.5,-0.1 1.5,0.1 1.5,-0 1.5,-1 1.5,0.9 1.5,-0.2 1.5,0.3 1.5,0 1.5,-0.2 1.5,0.2 1.5,-0 1.5,-0.5 1.5,0.5 1.5,-0.9 1.5,0.7 1.5,-0.7 1.5,0.6 1.5,-0.5 1.5,0.7 1.5,0 1.5,-1.3 1.5,1.2 1.5,-0.1 1.5,-0.2 1.5,0.1 1.5,-0.2 1.5,-0.1 1.5,-0.4 1.5,0.4 1.5,0.2 1.5,-0.3 1.5,-1.8 1.5,1.7 1.5,0.2 1.5,-0 1.5,0.1 1.5,0.1 1.5,0.2 1.5,-0.1 1.5,0.3 1.5,-0.3 1.5,0.4 1.5,-0 1.5,-0.2 1.5,-0.2 1.5,0.1 1.5,-0.3 1.5,-0.3 1.5,0.3 1.5,-0.9 1.5,0.2 1.5,-0.2 1.5,0.4 1.5,-0.2 1.5,-0 1.5,-1.5 1.5,0.9 1.5,0.1 1.5,0.7 1.5,0.1 1.5,-0.1 1.5,0 1.5,0.1 1.5,0.2 1.5,-1.6 1.5,2 1.5,-0.3 1.5,0.2 1.5,-0.2 1.5,0.3 1.5,0 1.5,0.1 1.5,-0.1 1.5,-0.3 1.5,-0.2 1.5,-0 1.5,-0.2 1.5,0.1 1.5,0 1.5,-0.3 1.5,0.1 1.5,-0.5 1.5,-0.1 1.5,0.4 1.5,0.3 1.5,0.1 1.5,0 1.5,0.4 1.5,0 1.5,0.5 1.5,-0 1.5,-0.6 1.5,0.8 1.5,0.4 1.5,0.2 1.5,0.1 1.5,-0.4 1.5,0 1.5,-0.1 1.5,0.2 1.5,0 1.5,-0.6 1.5,0.2 1.5,-0.3 1.5,-0.3 1.5,-0 1.5,-0.3 1.5,-0 1.5,-0.4 1.5,-0 1.5,-0.4 1.5,0.2 1.5,-0.3 1.5,0.3 1.5,-0.9 1.5,1.1 1.5,0.3 1.5,0.2 1.5,0.1 1.5,-0.3 1.5,0.2 1.5,-0.3 1.5,0.7 1.5,-0.2 1.5,0.1 1.5,0.3 1.5,-0.3 1.5,0.2 1.5,-0.3 1.5,-0.4 1.5,0.2 1.5,0.1 1.5,-0.3 1.5,0.1 1.5,-0.3 1.5,0 1.5,0.1 1.5,-0.1 1.5,-0.2 1.5,0.2 1.5,-0 1.5,-0.3 1.5,0.4 1.5,-1.2 1.5,1.2 1.5,-0.2 1.5,0.3 1.5,0.1 1.5,0.1 1.5,-0.2 1.5,-0.4 1.5,0 1.5,0.4 1.5,0.2 1.5,-0.3 1.5,0.1 1.5,0.1 1.5,-0 1.5,0 1.5,-1 1.5,1 1.5,-0.5 1.5,0.5 1.5,-0 1.5,0 1.5,0.2 1.5,-0.4 1.5,0.4 1.5,-0.4 1.5,0.7 1.5,-0.3 1.5,0.2 1.5,0.1 1.5,-0.1 1.5,-0.2 1.5,-0.3 1.5,0.7 1.5,-0.6 1.5,0.6 1.5,-0.1 1.5,-0.1 1.5,0 1.5,0.1 1.5,-0.1 1.5,-0.2 1.5,0.1 1.5,0.2 1.5,-0.3 1.5,0.2 1.5,-0 1.5,0 1.5,-0.1 1.5,0.3 1.5,-0.1 1.5,0 1.5,0.1 1.5,-0.3 1.5,-0.1 1.5,-0.1 1.5,0.1 1.5,-0.4 1.5,-0.1 1.5,-0.1 1.5,0 1.5,-1.3 1.5,1.1 1.5,-0.2 1.5,-0.1 1.5,0 1.5,-0.2 1.5,0.1 1.5,-0.1 1.5,-0.1 1.5,0.6 1.5,-0.2 1.5,0.5 1.5,-0.2 1.5,0.5 1.5,-0.2 1.5,0.2 1.5,0.2 1.5,0.1 1.5,0 1.5,0.2 1.5,0 1.5,0 1.5,-0.1 1.5,-0.3 1.5,-0.2 1.5,0.1 1.5,-0.1 1.5,-0.1 1.5,-0.3 1.5,-0.2 1.5,-0.1 1.5,-0.1 1.5,0 1.5,-0.2 1.5,0.1 1.5,0.3 1.5,-0.1 1.5,0.1 1.5,0.4 1.5,-0.1 1.5,0.4 1.5,0.1 1.5,-0.4 1.5,0.1 1.5,0.8 1.5,-0.4 1.5,0.4 1.5,-0.2 1.5,-0.8 1.5,0.9 1.5,-0 1.5,-0.6 1.5,0.5 1.5,-0.3 1.5,0.1 1.5,-0.2 1.5,0.1 1.5,-0.7 1.5,0.6 1.5,-0.2 1.5,-1.7 1.5,1.3 1.5,0.3 1.5,0.1 1.5,-0 1.5,0.2 1.5,0 1.5,-0 1.5,-0.3 1.5,0.3 1.5,-0.5 1.5,-0.1 1.5,-0.5 1.5,0.7 1.5,1 1.5,1.7 1.5,1.9 1.5,1.3 1.5,1.7 1.5,1.1 1.5,0.6 1.5,1.1 1.5,0.8 1.5,0.8 1.5,-0.2 1.5,1.8 1.5,0.5 1.5,1 1.5,0.6 1.5,0.5 1.5,0.5 1.5,1 1.5,0.5 1.5,0.5 1.5,0.3 1.5,1.1 1.5,0.5 1.5,0 1.5,1.1 1.5,0 1.5,0.8 1.5,0.4 1.5,0.4 1.5,-0.1 1.5,1.5 1.5,0.4 1.5,0.2 1.5,0.6 1.5,-0.3 1.5,1.1 1.5,-0 1.5,0.8 1.5,-1.2 1.5,2.1 1.5,-0.2 1.5,1 1.5,0.4 1.5,0 1.5,0.4 1.5,0.9 1.5,1 1.5,2.9 1.5,5.5 1.5,10.5 1.5,10.3 1.5,10.2 1.5,9.5 1.5,9.5 1.5,7.2 1.5,8.5 1.5,5.3 1.5,5.3 1.5,5.3 1.5,4.4 1.5,4.3 1.5,3.8 1.5,2.8 1.5,1.2 1.5,3.8 1.5,1.9 1.5,1.5 1.5,2.4 1.5,1.9 1.5,1.5 1.5,1.6 1.5,1.1 1.5,1.7 1.5,0.6 1.5,2 1.5,0.4 1.5,1.6 1.5,1 1.5,1.2 1.5,0.2 1.5,1.5 1.5,0.2 1.5,1 1.5,0.8 1.5,0.4 1.5,0.7 1.5,0.2 1.5,0.4 1.5,0.3 1.5,0.1 1.5,0.9 1.5,0.3 1.5,0.4 1.5,0.6 1.5,0.4 1.5,0.1 1.5,0.1 1.5,0.7 1.5,-1.1 1.5,1.2 1.5,0 1.5,0.6 1.5,0.3 1.5,-0.1 1.5,0.4 1.5,-0.1 1.5,0.4 1.5,-0.1 1.5,0.4 1.5,-0.2 1.5,0.3 1.5,0 1.5,0 1.5,0.1 1.5,-0 1.5,0.2 1.5,-0.1 1.5,0.2 1.5,-0.4 1.5,0.3 1.5,0.1 1.5,-0.2 1.5,0.2 1.5,-0.3 1.5,0.3 1.5,-0 1.5,0.1 1.5,0.1 1.5,0.2 1.5,-0.3 1.5,0.4 1.5,-0 1.5,-0.3 1.5,0.2 1.5,0.2 1.5,0 1.5,-0.1 1.5,0.1 1.5,-2.1 1.5,2.1 1.5,-0.1 1.5,0.1 1.5,0.1 1.5,-0.5 1.5,0.6 1.5,-0.2 1.5,0.1 1.5,-0.1 1.5,0.2 1.5,-0.3 1.5,-0 1.5,0.2 1.5,-0.1 1.5,0.2 1.5,-0.4 1.5,0.5 1.5,-1.5 1.5,1.1 1.5,0.4 1.5,-0.5 1.5,0 1.5,0.1 1.5,-0.2 1.5,0.5 1.5,0.1 1.5,-0.4 1.5,0.4 1.5,0.1 1.5,-0 1.5,-0.3 1.5,0.2 1.5,-0.2 1.5,0.2 1.5,0.1 1.5,0 1.5,0.2 1.5,-0.5 1.5,-0 1.5,0.5 1.5,-0.2 1.5,0.3 1.5,-0.1 1.5,-0.1 1.5,-0.4 1.5,0.4 1.5,0.2 1.5,-0.2 1.5,-0.1 1.5,-0.3 1.5,0 1.5,0.6 1.5,-0 1.5,-1.5 1.5,1.3 1.5,0.2 1.5,-0.1 1.5,-0.5 1.5,0.3 1.5,-0.1 1.5,0.4 1.5,-0.5 1.5,0.5 1.5,0.1 1.5,-0.4 1.5,0.3 1.5,0 1.5,-0.1 1.5,-0.2 1.5,0.5 1.5,-0.2 1.5,-0.1 1.5,0.2 1.5,0 1.5,0.1 1.5,-0.3 1.5,0.1 1.5,0.3 1.5,-0.1 1.5,-0.2 1.5,0.1 1.5,-0.2 1.5,0.2 1.5,0.3 1.5,-0.8 1.5,0.6 1.5,-0 1.5,0.2 1.5,-0.1 1.5,-0.1 1.5,-0.3 1.5,0.2 1.5,0.1 1.5,-0.3 1.5,0.3 1.5,0 1.5,0.1 1.5,-0.1 1.5,0 1.5,0.1 1.5,-0.2 1.5,0.4 1.5,-0.1 1.5,-0.2 1.5,0.3 1.5,-0.5 1.5,0.3 1.5,0 1.5,0.1 1.5,0 1.5,-0.1 1.5,0.2 1.5,0.1 1.5,0 1.5,-0.5 1.5,-0.9 1.5,1.1 1.5,0.2 1.5,-0 1.5,-0 1.5,0.2 1.5,-0.1 1.5,-1.2 1.5,1.1 1.5,0 1.5,-1.8 1.5,2 1.5,-0.5 1.5,0.1 1.5,0.3 1.5,0 1.5,0.1 1.5,-0.5 1.5,0.5 1.5,-0.3 1.5,0.3 1.5,-0.4 1.5,0.4 1.5,-0.1 1.5,0.1 1.5,-0.3 1.5,0.3 1.5,-0.1 1.5,0.2 1.5,-0.1 1.5,0.1 1.5,-0.9 1.5,-0.2 1.5,1 1.5,0.1 1.5,0 1.5,0.1 1.5,-0.4 1.5,0.3 1.5,-0 1.5,0.1 1.5,-0.2 1.5,-0.4 1.5,0.6 1.5,-0.1 1.5,-0.5 1.5,0.6 1.5,-0.2 1.5,-0 1.5,0.1 1.5,-0.1 1.5,0.1 1.5,-0 1.5,0.2 1.5,-0.2 1.5,-0.2 1.5,-0 1.5,-0.4 1.5,0.7 1.5,-0.5 1.5,0.3 1.5,-1.8 1.5,1.5 1.5,-0.1 1.5,0.4 1.5,0 1.5,0.3 1.5,-0.3 1.5,-0.1 1.5,-0 1.5,-0 1.5,0.4 1.5,-0.5 1.5,0.5 1.5,-0.1 1.5,-0.1 1.5,-1.3 1.5,0.9 1.5,0.3 1.5,0.2 1.5,-0.2 1.5,0.4 1.5,-0.7 1.5,0.2 1.5,0.2 1.5,-0 1.5,-0.2 1.5,0.4 1.5,-0.1 1.5,-0.2 1.5,0.3 1.5,-0 1.5,-0.2 1.5,-0.9 1.5,1.3 1.5,-0.1 1.5,-0.1 1.5,0 1.5,-0.1 1.5,0 1.5,0 1.5,0.2 1.5,-0.4 1.5,-1 1.5,1.3 1.5,-0 1.5,0.2 1.5,-0.1 1.5,-1.9 1.5,1.8 1.5,0.2 1.5,-0.1 1.5,0.1 1.5,-0 1.5,0 1.5,-2 1.5,2 1.5,0 1.5,-0.6 1.5,0.6 1.5,-0.7 1.5,0.7 1.5,0.1 1.5,-0.1 1.5,0 1.5,-0.3 1.5,-0.4 1.5,0.4 1.5,-0.4 1.5,0.8 1.5,-0.4 1.5,0 1.5,0.4 1.5,-0.2 1.5,-0.1 1.5,0.1 1.5,0.1 1.5,0 1.5,-0.1 1.5,-0 1.5,0 1.5,-0.2 1.5,0.2 1.5,0 1.5,-0.1 1.5,-0 1.5,-0.1 1.5,0.2 1.5,0.2 1.5,-0 1.5,-0.8 1.5,0.3 1.5,0.3 1.5,0.1 1.5,0.2 1.5,-0.4 1.5,0.1 1.5,0.1 1.5,-0 1.5,-0.1 1.5,0 1.5,0.1 1.5,-0.5 1.5,0.6 1.5,-0.5 1.5,0.5 1.5,-0.2 1.5,0.3 1.5,-0.3 1.5,0.2 1.5,-0 1.5,0.1 1.5,0 1.5,-0.5 1.5,-0 1.5,0.3 1.5,0 1.5,0.2 1.5,-1.9 1.5,1 1.5,0.9 1.5,-0.3 1.5,0.1 1.5,0.2 1.5,-0.3 1.5,-0.1 1.5,0.3 1.5,-0.2 1.5,0.3 1.5,-0.2 1.5,0.3 1.5,-0 1.5,-0.4 1.5,0.4 1.5,-0.3 1.5,0.2 1.5,-0.6 1.5,0.3 1.5,0.4 1.5,-1 1.5,0.6 1.5,-0.9 1.5,0.6 1.5,0.3 1.5,0.4 1.5,-0.1 1.5,-0.4 1.5,0.2 1.5,0.4 1.5,-0.4 1.5,0.2 1.5,-0.1 1.5,0.3 1.5,-1.8 1.5,0.8 1.5,-1 1.5,1.9 1.5,-0.2 1.5,-0.1 1.5,-0.2 1.5,0.4 1.5,0.2 1.5,-0.3 1.5,-0.1 1.5,0.3 1.5,0.1 1.5,-1.7 1.5,1.7 1.5,-0.3 1.5,0.3 1.5,-0.2 1.5,0 1.5,-0.1 1.5,0.3 1.5,0 1.5,-0.3 1.5,0.1 1.5,0.1 1.5,-0.5 1.5,0.1 1.5,0.4 1.5,-0.3 1.5,-0.1 1.5,0.5 1.5,-0.5 1.5,0.2 1.5,0 1.5,-0.1 1.5,0 1.5,0.3 1.5,-0.4 1.5,0.6 1.5,-0.1 1.5,-0.2 1.5,0.3 1.5,-0.4 1.5,0.1 1.5,0 1.5,0.1 1.5,-2 1.5,2.1 1.5,0.1 1.5,-0.6 1.5,0.5 1.5,-0.5 1.5,0.6 1.5,-0.9 1.5,0.5 1.5,-0.3 1.5,0.4 1.5,0 1.5,0.3 1.5,-0.1 1.5,-0.2 1.5,-0.8 1.5,0.5 1.5,0.4 1.5,-1.4 1.5,1.5 1.5,-0 1.5,0.2 1.5,-0.4 1.5,0.2 1.5,-0.8 1.5,0.7 1.5,-0.3 1.5,0.2 1.5,0.2 1.5,0.2 1.5,-0.4 1.5,0.3 1.5,-0.4 1.5,0.2 1.5,0 1.5,-0.4 1.5,0.4 1.5,0.1 1.5,0 1.5,-0.3 1.5,0.4 1.5,-0.2 1.5,0.1 1.5,0.2 1.5,-0.6 1.5,-0 1.5,0.6 1.5,-0.2 1.5,0.1 1.5,-0.5 1.5,0.5 1.5,-0.2 1.5,0.2 1.5,-0.1 1.5,-0.2 1.5,0.2 1.5,-0.2 1.5,0.2 1.5,-0 1.5,-0.2 1.5,0.3 1.5,-0.5 1.5,0.4 1.5,-0.3 1.5,0.4 1.5,-0.2 1.5,0.3 1.5,-0.1 1.5,0 1.5,-0.2 1.5,-0.1 1.5,-0.3 1.5,0.5 1.5,-0.2 1.5,0.4 1.5,-0.3 1.5,0.1 1.5,-0.5 1.5,0.2 1.5,0.5 1.5,-0.2 1.5,-0.3 1.5,0.2 1.5,0.3 1.5,-0.2 1.5,-1.8 1.5,1.9 1.5,0 1.5,-0.5 1.5,0.4 1.5,-0.2 1.5,0.5 1.5,-0.3 1.5,0.1 1.5,-0.1 1.5,0.1 1.5,-0.4 1.5,0.5 1.5,-0 1.5,-0.3 1.5,0.3 1.5,0 1.5,-0.3 1.5,-0.3 1.5,0.1 1.5,0.6 1.5,-0.5 1.5,0.4 1.5,0 1.5,-0.2 1.5,0 1.5,-0.4 1.5,-1.7 1.5,1.7 1.5,0.2 1.5,0.2 1.5,0 1.5,-0.1 1.5,0.2 1.5,-0 1.5,0.1 1.5,0.1 1.5,-0.2 1.5,-0.2 1.5,0.3 1.5,0.1 1.5,-1 1.5,0.7 1.5,0.1 1.5,-0.5 1.5,0.2 1.5,0.3 1.5,-0 1.5,0.2 1.5,-0.2 1.5,-0 1.5,0.2 1.5,-0.3 1.5,0.3 1.5,-0.5 1.5,0.4 1.5,-0.4 1.5,0.4 1.5,0.1 1.5,-0.1 1.5,-0.2 1.5,-0 1.5,-1.4 1.5,1.5 1.5,-0.1 1.5,0 1.5,-1.5 1.5,1.6 1.5,0.1 1.5,0.1 1.5,-0.8 1.5,0.6 1.5,-0.2 1.5,-0.9 1.5,1 1.5,0.2 1.5,-0 1.5,0.1 1.5,-0 1.5,-0.3 1.5,-0.1 1.5,-0.2 1.5,-0.1 1.5,0.8 1.5,-0.1 1.5,-0.3 1.5,-0.3 1.5,0.4 1.5,0.2 1.5,0.1 1.5,-0.3 1.5,-0.1 1.5,0.2 1.5,-0.6 1.5,0.3 1.5,0.2 1.5,0.2 1.5,0 1.5,-0.3 1.5,0.3 1.5,-0.2 1.5,0.3 1.5,-0.2 1.5,-0.9 1.5,0.9 1.5,-0.2 1.5,-0.1 1.5,-0.3 1.5,0.8 1.5,-0.2 1.5,-0.1 1.5,0 1.5,0.2 1.5,-0.2 1.5,0.2 1.5,0 1.5,-0.3 1.5,-0.9 1.5,0.8 1.5,-0 1.5,0.4 1.5,-0 1.5,-0.2 1.5,0.2 1.5,0.1 1.5,-0.1 1.5,-0.3 1.5,0.3 1.5,0.1 1.5,-0.2 1.5,-0.1 1.5,-0.9 1.5,0.7 1.5,0.5 1.5,-0.4 1.5,0.4 1.5,-0.3 1.5,-0.2 1.5,0.1 1.5,-0.1 1.5,0.3 1.5,-0 1.5,0.1 1.5,-0.3 1.5,0.2 1.5,-0.5 1.5,0.1 1.5,0.5 1.5,0.1 1.5,-0.2 1.5,-0.3 1.5,0.4 1.5,0.1 1.5,-0.1 1.5,0.1 1.5,-0.2 1.5,0.1 1.5,-0.3 1.5,0.4 1.5,0 1.5,-0.2 1.5,-0.1 1.5,-0.5 1.5,0.6 1.5,-0.1 1.5,0.2 1.5,-0.2 1.5,-0.3 1.5,0.6 1.5,-0.1 1.5,-0.1 1.5,0.2 1.5,-0.1 1.5,-0 1.5,-1.9 1.5,1.7 1.5,0.3 1.5,-0.6 1.5,0.2 1.5,0.3 1.5,0.1 1.5,-0.1 1.5,-1.4 1.5,1.4 1.5,0 1.5,0 1.5,-0.3 1.5,-0.2 1.5,0.5 1.5,0.1 1.5,-0.1 1.5,0.1 1.5,-0.2 1.5,0.1 1.5,0.1 1.5,-0.4 1.5,-0 1.5,0.3 1.5,-0.5 1.5,0.5 1.5,-0.1 1.5,-0 1.5,-1.2 1.5,1.3 1.5,-0 1.5,-0 1.5,0 1.5,-0.3 1.5,0.1 1.5,-0.2 1.5,0.3 1.5,-0.1 1.5,-0.3 1.5,0.6 1.5,-0.5 1.5,0.5 1.5,-0.4 1.5,0.3 1.5,0 1.5,0.1 1.5,0 1.5,-0.5 1.5,0.6 1.5,-0.5 1.5,0.2 1.5,-0.6 1.5,0.8 1.5,0 1.5,-0.1 1.5,0.2 1.5,-0.7 1.5,0.5 1.5,0.1 1.5,0.1 1.5,-0.2 1.5,-0.4 1.5,-0 1.5,-0.2 1.5,0.5 1.5,0.1 1.5,-1 1.5,1.1 1.5,0 1.5,-0.4 1.5,0.5 1.5,-0.2 1.5,0.1 1.5,0.1 1.5,0 1.5,-0.1 1.5,-0.5 1.5,0.3 1.5,0.2 1.5,-0.1 1.5,-0.2 1.5,0.4 1.5,-0 1.5,-0.2 1.5,-0.1 1.5,-0.1 1.5,0.2 1.5,0.1 1.5,0 1.5,0 1.5,-0.1 1.5,-0.4 1.5,0.5 1.5,0.1 1.5,-0.4 1.5,0.2 1.5,0.3 1.5,-0.4 1.5,-0.3 1.5,-0.1 1.5,0.5 1.5,0.3 1.5,-0.4 1.5,0 1.5,-0.3 1.5,0.4 1.5,0.1 1.5,-0.2 1.5,0.2 1.5,-0.1 1.5,-0.4 1.5,0.7 1.5,-0.1 1.5,-0.8 1.5,0.5 1.5,0.4 1.5,-0.6 1.5,0.5 1.5,-1.8 1.5,1.6 1.5,-0.3 1.5,-0.1 1.5,0.7 1.5,-0.2 1.5,0.2 1.5,-0.1 1.5,-0.3 1.5,-0.1 1.5,0.4 1.5,-0.1 1.5,0.2 1.5,-0 1.5,-0.6 1.5,0.2 1.5,-0.6 1.5,0.9 1.5,0 1.5,-0 1.5,-0.4 1.5,0.1 1.5,0.4 1.5,-0 1.5,-0.4 1.5,0.1 1.5,0.1 1.5,-0.7 1.5,0.9 1.5,-0.2 1.5,-0.1 1.5,-0.2 1.5,0.3 1.5,-0.4 1.5,0.4 1.5,-0.1 1.5,0.1 1.5,-1.3 1.5,1.5 1.5,-0.5 1.5,0.5 1.5,-0.3 1.5,0.1 1.5,-1.2 1.5,1.1 1.5,0.1 1.5,0 1.5,-0.3 1.5,0.5 1.5,-0 1.5,-0.2 1.5,0.1 1.5,0.1 1.5,-0.5 1.5,0.2 1.5,-1.5 0,8.2 -1.5,0 -1.5,-0.3 -1.5,0.4 -1.5,0.3 -1.5,-0.7 -1.5,-0.1 -1.5,0.2 -1.5,0.3 -1.5,-0.5 -1.5,0.2 -1.5,-0.3 -1.5,0.3 -1.5,-0.3 -1.5,0.2 -1.5,0.2 -1.5,-0.2 -1.5,-0.1 -1.5,1 -1.5,-1 -1.5,0.1 -1.5,-0.1 -1.5,0 -1.5,0.1 -1.5,-0.1 -1.5,0.6 -1.5,-0.5 -1.5,-0.1 -1.5,0.2 -1.5,0 -1.5,-0.3 -1.5,-0 -1.5,0.5 -1.5,-0.4 -1.5,0.1 -1.5,-0.2 -1.5,0.3 -1.5,-0.2 -1.5,0.3 -1.5,-0 -1.5,-0.2 -1.5,-0.2 -1.5,0.2 -1.5,-0.2 -1.5,0.2 -1.5,0.1 -1.5,-0.3 -1.5,0.6 -1.5,-0.6 -1.5,0.5 -1.5,-0.1 -1.5,-0.4 -1.5,0.5 -1.5,-0.6 -1.5,0.3 -1.5,1.6 -1.5,-1.5 -1.5,0.1 -1.5,1 -1.5,-1.5 -1.5,0.4 -1.5,0 -1.5,-0.4 -1.5,0.3 -1.5,0 -1.5,0.7 -1.5,-0.8 -1.5,0.2 -1.5,-0.3 -1.5,0.3 -1.5,0.6 -1.5,-0.9 -1.5,-0.1 -1.5,0.1 -1.5,0.3 -1.5,0.1 -1.5,0 -1.5,-0.4 -1.5,0.3 -1.5,-0.4 -1.5,0.3 -1.5,-0.2 -1.5,0.4 -1.5,-0.4 -1.5,0.1 -1.5,0.2 -1.5,0.2 -1.5,0 -1.5,-0.2 -1.5,-0.4 -1.5,-0 -1.5,1.1 -1.5,-1.1 -1.5,0.3 -1.5,-0.2 -1.5,0.1 -1.5,1.2 -1.5,-1 -1.5,0.1 -1.5,0.1 -1.5,-0.6 -1.5,0.3 -1.5,-0.2 -1.5,0.8 -1.5,-0.6 -1.5,-0.1 -1.5,-0.2 -1.5,0.3 -1.5,-0.1 -1.5,-0.1 -1.5,0.2 -1.5,0.5 -1.5,-0.8 -1.5,-0 -1.5,0.1 -1.5,0.2 -1.5,-0.2 -1.5,0.1 -1.5,-0 -1.5,0.1 -1.5,-0.4 -1.5,0 -1.5,0.5 -1.5,1.1 -1.5,-1.6 -1.5,0.4 -1.5,-0.4 -1.5,0.3 -1.5,-0.1 -1.5,-0.1 -1.5,0.2 -1.5,0.3 -1.5,-0.6 -1.5,0.3 -1.5,0.1 -1.5,0.3 -1.5,-0.7 -1.5,0 -1.5,0.3 -1.5,0 -1.5,0 -1.5,-0.2 -1.5,-0 -1.5,0.5 -1.5,0.3 -1.5,-0.9 -1.5,0.3 -1.5,-0.1 -1.5,0.2 -1.5,-0.3 -1.5,1.5 -1.5,-1.4 -1.5,-0.2 -1.5,0 -1.5,0 -1.5,0.2 -1.5,0 -1.5,-0.1 -1.5,-0.1 -1.5,1.4 -1.5,-1 -1.5,-0.3 -1.5,0 -1.5,0.2 -1.5,-0.1 -1.5,0 -1.5,0.8 -1.5,-0.6 -1.5,0.2 -1.5,-0.5 -1.5,-0 -1.5,-0.1 -1.5,0 -1.5,0.5 -1.5,-0.4 -1.5,0.1 -1.5,-0.2 -1.5,0.3 -1.5,-0.1 -1.5,0.1 -1.5,-0.3 -1.5,0.1 -1.5,-0.1 -1.5,0.4 -1.5,-0 -1.5,-0.4 -1.5,0.2 -1.5,0.6 -1.5,-0.8 -1.5,-0 -1.5,0.6 -1.5,-0.2 -1.5,0.9 -1.5,-0.8 -1.5,-0.2 -1.5,-0.3 -1.5,0 -1.5,0.2 -1.5,-0.2 -1.5,-0.1 -1.5,0.5 -1.5,-0.2 -1.5,0 -1.5,1.3 -1.5,-1.3 -1.5,-0.2 -1.5,0.1 -1.5,0 -1.5,0.3 -1.5,-0.3 -1.5,0 -1.5,-0.1 -1.5,0.2 -1.5,0.5 -1.5,-0.8 -1.5,0.3 -1.5,-0.2 -1.5,0.2 -1.5,0 -1.5,0.6 -1.5,-0.8 -1.5,0 -1.5,0.3 -1.5,0.7 -1.5,-0.8 -1.5,-0.2 -1.5,-0.1 -1.5,0.2 -1.5,0.5 -1.5,-0.6 -1.5,0.1 -1.5,-0.1 -1.5,0.3 -1.5,-0.3 -1.5,-0 -1.5,0.5 -1.5,-0.1 -1.5,-0.5 -1.5,0.1 -1.5,0.2 -1.5,0.7 -1.5,-0.9 -1.5,1.4 -1.5,-1.5 -1.5,0.4 -1.5,-0.1 -1.5,-0.1 -1.5,0.1 -1.5,0.2 -1.5,-0.2 -1.5,0 -1.5,1.3 -1.5,-1.6 -1.5,0.1 -1.5,0.1 -1.5,0 -1.5,0 -1.5,-0.2 -1.5,-0 -1.5,0.4 -1.5,-0.3 -1.5,-0.1 -1.5,0.6 -1.5,-0.4 -1.5,0.4 -1.5,-0.3 -1.5,-0.1 -1.5,1.1 -1.5,-1 -1.5,-0.3 -1.5,0 -1.5,1.4 -1.5,-1.3 -1.5,1.3 -1.5,-1.3 -1.5,-0.1 -1.5,0 -1.5,0.4 -1.5,-0 -1.5,0.2 -1.5,-0.5 -1.5,0.2 -1.5,-0.3 -1.5,0.2 -1.5,-0.1 -1.5,0.3 -1.5,-0.2 -1.5,-0.1 -1.5,0.3 -1.5,0.1 -1.5,-0.5 -1.5,0.1 -1.5,0.2 -1.5,-0.1 -1.5,0.1 -1.5,-0.2 -1.5,0.1 -1.5,0.2 -1.5,-0.1 -1.5,-0.3 -1.5,0.1 -1.5,0.2 -1.5,-0.2 -1.5,1.5 -1.5,-1.2 -1.5,-0 -1.5,0.2 -1.5,-0.6 -1.5,0.2 -1.5,-0.1 -1.5,0.1 -1.5,-0 -1.5,0 -1.5,-0.1 -1.5,-0.2 -1.5,0.5 -1.5,-0.5 -1.5,1.4 -1.5,-1.2 -1.5,-0.1 -1.5,0.1 -1.5,-0.1 -1.5,0.1 -1.5,0.2 -1.5,-0.3 -1.5,0.3 -1.5,0.1 -1.5,-0.4 -1.5,-0.1 -1.5,0.9 -1.5,-0.6 -1.5,-0.3 -1.5,0.2 -1.5,-0.2 -1.5,0.5 -1.5,-0.4 -1.5,-0.1 -1.5,0.8 -1.5,-0.7 -1.5,0 -1.5,1.3 -1.5,-1 -1.5,-0.3 -1.5,0.2 -1.5,-0.3 -1.5,0 -1.5,1.3 -1.5,-0.9 -1.5,-0.2 -1.5,-0.1 -1.5,0.3 -1.5,-0.1 -1.5,-0.1 -1.5,0.1 -1.5,0.5 -1.5,-0.6 -1.5,-0.2 -1.5,0.1 -1.5,1.8 -1.5,-0.4 -1.5,-1.5 -1.5,0.1 -1.5,0.5 -1.5,-0.4 -1.5,0.2 -1.5,-0.1 -1.5,0.1 -1.5,-0.2 -1.5,-0.2 -1.5,0.3 -1.5,0 -1.5,-0.3 -1.5,-0.1 -1.5,0.3 -1.5,-0.3 -1.5,0.2 -1.5,1.3 -1.5,-1.3 -1.5,-0.1 -1.5,-0.1 -1.5,0 -1.5,0.2 -1.5,0.1 -1.5,-0.3 -1.5,0.2 -1.5,0 -1.5,0 -1.5,0.3 -1.5,-0.5 -1.5,0.1 -1.5,0.5 -1.5,-0 -1.5,-0.5 -1.5,-0 -1.5,0.4 -1.5,-0.4 -1.5,-0.1 -1.5,0.2 -1.5,0.8 -1.5,-0.9 -1.5,0.1 -1.5,1.4 -1.5,-1.4 -1.5,-0.2 -1.5,0.1 -1.5,-0.1 -1.5,1.3 -1.5,-1.1 -1.5,-0.2 -1.5,0.5 -1.5,-0.4 -1.5,-0.1 -1.5,0.2 -1.5,-0 -1.5,-0.1 -1.5,0.5 -1.5,-0.3 -1.5,0.5 -1.5,-0.7 -1.5,-0.1 -1.5,0.3 -1.5,0.8 -1.5,-0.9 -1.5,0 -1.5,-0 -1.5,-0.3 -1.5,1.8 -1.5,-1.6 -1.5,0.2 -1.5,0 -1.5,0.2 -1.5,-0.6 -1.5,0.1 -1.5,-0.1 -1.5,0.3 -1.5,0 -1.5,-0 -1.5,-0.2 -1.5,1.3 -1.5,-1.1 -1.5,-0.2 -1.5,-0.1 -1.5,0.2 -1.5,0 -1.5,0.1 -1.5,-0.2 -1.5,0.1 -1.5,1.5 -1.5,-1.5 -1.5,0.3 -1.5,0.2 -1.5,-0.7 -1.5,0.5 -1.5,1.4 -1.5,-1.5 -1.5,1.1 -1.5,-1.5 -1.5,0.2 -1.5,-0.2 -1.5,0.6 -1.5,-0.6 -1.5,0.1 -1.5,0.2 -1.5,-0.3 -1.5,0.1 -1.5,0 -1.5,-0.1 -1.5,0.1 -1.5,-0 -1.5,0.2 -1.5,-0 -1.5,1.3 -1.5,-1.4 -1.5,-0 -1.5,-0.2 -1.5,0.1 -1.5,0.3 -1.5,-0.3 -1.5,-0.1 -1.5,-0 -1.5,0.3 -1.5,0.4 -1.5,-0.6 -1.5,0.2 -1.5,-0.2 -1.5,0.1 -1.5,0.5 -1.5,-0.5 -1.5,-0.3 -1.5,0.2 -1.5,-0.1 -1.5,0.1 -1.5,1.4 -1.5,-1.6 -1.5,0.1 -1.5,0.5 -1.5,-0.3 -1.5,0.4 -1.5,-0 -1.5,-0.1 -1.5,-0.3 -1.5,-0.2 -1.5,0.2 -1.5,-0.3 -1.5,0.1 -1.5,0.8 -1.5,0 -1.5,0.4 -1.5,-1.2 -1.5,0.4 -1.5,-0.1 -1.5,-0.3 -1.5,0.4 -1.5,0.4 -1.5,-0.9 -1.5,-0.1 -1.5,0.2 -1.5,-0.2 -1.5,0 -1.5,0.2 -1.5,0.5 -1.5,-0.7 -1.5,0.4 -1.5,-0 -1.5,-0 -1.5,-0.4 -1.5,0.5 -1.5,-0 -1.5,-0.5 -1.5,0.1 -1.5,0.1 -1.5,-0.1 -1.5,0.1 -1.5,-0.1 -1.5,-0.1 -1.5,0.6 -1.5,-0.1 -1.5,-0.4 -1.5,0.3 -1.5,1.1 -1.5,-1.2 -1.5,-0.3 -1.5,0.3 -1.5,-0.4 -1.5,0 -1.5,0.9 -1.5,-0.7 -1.5,0.2 -1.5,0.1 -1.5,-0.3 -1.5,-0.1 -1.5,0.1 -1.5,0.1 -1.5,-0.2 -1.5,0.2 -1.5,-0.3 -1.5,0.2 -1.5,0.4 -1.5,-0 -1.5,-0.4 -1.5,-0 -1.5,0.2 -1.5,-0.1 -1.5,-0.2 -1.5,-0.1 -1.5,0.1 -1.5,0.2 -1.5,0.6 -1.5,-0.8 -1.5,0.3 -1.5,-0.1 -1.5,-0 -1.5,-0.4 -1.5,0.5 -1.5,-0.2 -1.5,-0 -1.5,-0.1 -1.5,0.6 -1.5,-0.4 -1.5,-0.4 -1.5,-0 -1.5,-0 -1.5,1.8 -1.5,-1.7 -1.5,0.2 -1.5,-0.1 -1.5,0.2 -1.5,-0.1 -1.5,-0.3 -1.5,0.3 -1.5,0.2 -1.5,-0 -1.5,-0.4 -1.5,0.3 -1.5,-0 -1.5,1.5 -1.5,-1.9 -1.5,0.8 -1.5,-0.8 -1.5,-0 -1.5,0.1 -1.5,-0.1 -1.5,0 -1.5,-0.1 -1.5,0.1 -1.5,0.3 -1.5,-0.4 -1.5,-0.1 -1.5,1.2 -1.5,1 -1.5,-2.1 -1.5,0.6 -1.5,-0.5 -1.5,0 -1.5,-0.2 -1.5,0.2 -1.5,0.7 -1.5,-0.4 -1.5,-0.4 -1.5,0.1 -1.5,0.4 -1.5,-0.6 -1.5,0 -1.5,0.1 -1.5,0.1 -1.5,-0.2 -1.5,0.3 -1.5,-0.4 -1.5,0.1 -1.5,-0 -1.5,0.2 -1.5,0 -1.5,0.1 -1.5,-0.2 -1.5,-0 -1.5,0.1 -1.5,-0.3 -1.5,-0 -1.5,0.1 -1.5,0.4 -1.5,-0.1 -1.5,-0.2 -1.5,0 -1.5,-0.2 -1.5,0.4 -1.5,-0.3 -1.5,-0 -1.5,0.6 -1.5,-0.2 -1.5,0.7 -1.5,-0.9 -1.5,-0.3 -1.5,0.2 -1.5,0.2 -1.5,-0.2 -1.5,-0.3 -1.5,0.5 -1.5,-0.4 -1.5,-0 -1.5,-0 -1.5,0.3 -1.5,-0.2 -1.5,0 -1.5,-0.1 -1.5,1.6 -1.5,0.1 -1.5,-1.4 -1.5,-0.3 -1.5,-0.2 -1.5,0.1 -1.5,0 -1.5,0 -1.5,0.2 -1.5,-0.2 -1.5,0.6 -1.5,-0.6 -1.5,0.1 -1.5,0 -1.5,0.2 -1.5,-0.1 -1.5,-0 -1.5,-0.1 -1.5,-0.3 -1.5,0.4 -1.5,-0.2 -1.5,0.1 -1.5,0.2 -1.5,-0.4 -1.5,0.4 -1.5,-0 -1.5,-0.1 -1.5,-0.4 -1.5,-0 -1.5,0.2 -1.5,-0.1 -1.5,-0.2 -1.5,0.4 -1.5,0 -1.5,-0.3 -1.5,0.4 -1.5,0.2 -1.5,-0.6 -1.5,0.3 -1.5,-0 -1.5,0.4 -1.5,-0.5 -1.5,0.7 -1.5,0.1 -1.5,-1.2 -1.5,0.2 -1.5,-0.1 -1.5,0.1 -1.5,0.3 -1.5,-0.3 -1.5,0.1 -1.5,0.1 -1.5,-0 -1.5,-0.3 -1.5,1.4 -1.5,-1.5 -1.5,0.5 -1.5,-0.5 -1.5,0.6 -1.5,-0.7 -1.5,1.6 -1.5,-1.6 -1.5,0.3 -1.5,0.1 -1.5,-0.2 -1.5,0 -1.5,0.3 -1.5,-0.5 -1.5,0.5 -1.5,-0.4 -1.5,-0.1 -1.5,0.1 -1.5,0.7 -1.5,-0.7 -1.5,0.1 -1.5,-0.2 -1.5,-0 -1.5,-0.1 -1.5,0.5 -1.5,-0.5 -1.5,0.2 -1.5,-0 -1.5,1.8 -1.5,-1.8 -1.5,-0 -1.5,-0.2 -1.5,-0.1 -1.5,0.3 -1.5,0.3 -1.5,-0.5 -1.5,0.4 -1.5,-0.5 -1.5,-0.1 -1.5,0.2 -1.5,-0 -1.5,-0.1 -1.5,0.1 -1.5,0.2 -1.5,-0 -1.5,-0.1 -1.5,-0.3 -1.5,0.2 -1.5,-0.1 -1.5,0.3 -1.5,0 -1.5,-0.5 -1.5,-0.1 -1.5,0.2 -1.5,0.4 -1.5,-0.3 -1.5,-0.1 -1.5,-0.2 -1.5,0.3 -1.5,-0.3 -1.5,0.1 -1.5,-0.2 -1.5,0 -1.5,0.4 -1.5,0.2 -1.5,-0.3 -1.5,-0.3 -1.5,0.3 -1.5,-0.2 -1.5,0.4 -1.5,-0.3 -1.5,-0.2 -1.5,0.2 -1.5,-0.3 -1.5,0.1 -1.5,-0.1 -1.5,0.1 -1.5,0.1 -1.5,0.1 -1.5,0 -1.5,-0.2 -1.5,0 -1.5,-0.2 -1.5,0.4 -1.5,-0 -1.5,-0.5 -1.5,0.2 -1.5,0.4 -1.5,-0.4 -1.5,0.1 -1.5,1.7 -1.5,-2.1 -1.5,0.1 -1.5,0.4 -1.5,-0.3 -1.5,-0.3 -1.5,0.1 -1.5,-0 -1.5,-0.1 -1.5,0.1 -1.5,-0.1 -1.5,-0.1 -1.5,0.4 -1.5,-0.4 -1.5,-0 -1.5,0.1 -1.5,-0.3 -1.5,0 -1.5,0 -1.5,-0.1 -1.5,0.3 -1.5,-0.4 -1.5,0.3 -1.5,-0.1 -1.5,-0.3 -1.5,0.2 -1.5,-0.4 -1.5,0.3 -1.5,-0 -1.5,-0.5 -1.5,0 -1.5,0 -1.5,-0.1 -1.5,1.4 -1.5,-1.4 -1.5,-0.7 -1.5,0.1 -1.5,0.2 -1.5,-0.1 -1.5,-1.1 -1.5,0.1 -1.5,-0.1 -1.5,-0.5 -1.5,-0.1 -1.5,-0.8 -1.5,-0.4 -1.5,1 -1.5,-0.3 -1.5,-1.6 -1.5,-0.5 -1.5,-0.5 -1.5,-0.4 -1.5,-0.3 -1.5,-0.4 -1.5,-1 -1.5,-0.7 -1.5,-0.2 -1.5,-0.8 -1.5,-0.4 -1.5,-1.6 -1.5,-0.9 -1.5,-0.8 -1.5,-1.3 -1.5,-0.9 -1.5,-1.4 -1.5,-1 -1.5,0.3 -1.5,-3.6 -1.5,-1.5 -1.5,-1.4 -1.5,-1.7 -1.5,-2 -1.5,-1.6 -1.5,-2.2 -1.5,-2.4 -1.5,-0.4 -1.5,-5.1 -1.5,-3.8 -1.5,-3.7 -1.5,-4.6 -1.5,-5.5 -1.5,-5.4 -1.5,-5.5 -1.5,-7.1 -1.5,-8.4 -1.5,-9.6 -1.5,-8.8 -1.5,-10.1 -1.5,-10.8 -1.5,-8.9 -1.5,-7.2 -1.5,-2.9 -1.5,-1.1 -1.5,-1 -1.5,1.6 -1.5,-2.3 -1.5,-0.3 -1.5,-0.1 -1.5,-0.1 -1.5,-0.5 -1.5,-1.1 -1.5,-0.1 -1.5,-0.2 -1.5,-0.6 -1.5,-0.5 -1.5,-0.2 -1.5,0.9 -1.5,-1.4 -1.5,-1.2 -1.5,0 -1.5,-0.8 -1.5,-0.7 -1.5,-0.1 -1.5,-0.8 -1.5,-0.1 -1.5,-0.8 -1.5,-0.6 -1.5,-0.7 -1.5,-0.7 -1.5,-0.4 -1.5,-0.5 -1.5,-0.1 -1.5,-0.8 -1.5,-1.1 -1.5,-0.9 -1.5,-0.5 -1.5,-0.8 -1.5,0.4 -1.5,-0.6 -1.5,-2.3 -1.5,-0.7 -1.5,-0.8 -1.5,-1.1 -1.5,-0.7 -1.5,-1.4 -1.5,-1.9 -1.5,-1.5 -1.5,-1.7 -1.5,-0.8 -1.5,-0.7 -1.5,1.5 -1.5,-1.2 -1.5,0.6 -1.5,-0.4 -1.5,0 -1.5,0.5 -1.5,-0.4 -1.5,0.2 -1.5,-0.3 -1.5,0 -1.5,0.5 -1.5,-0.8 -1.5,0.4 -1.5,0.2 -1.5,0.3 -1.5,-0.6 -1.5,0.3 -1.5,1.4 -1.5,-1.2 -1.5,0.1 -1.5,1.7 -1.5,-1.7 -1.5,0.1 -1.5,0.9 -1.5,-0.9 -1.5,0.2 -1.5,-0 -1.5,0.2 -1.5,-0.6 -1.5,0.2 -1.5,-0.5 -1.5,-0.1 -1.5,-0.2 -1.5,-0.3 -1.5,-0.2 -1.5,0 -1.5,-0.2 -1.5,0 -1.5,-0.1 -1.5,0.5 -1.5,-0.4 -1.5,0.1 -1.5,0.3 -1.5,0.5 -1.5,-0.4 -1.5,0.3 -1.5,0.3 -1.5,0 -1.5,0.3 -1.5,0 -1.5,0.3 -1.5,0.4 -1.5,-0.6 -1.5,-0.2 -1.5,-0 -1.5,-0 -1.5,-0.3 -1.5,0.2 -1.5,-0.3 -1.5,-0.2 -1.5,0.3 -1.5,-0.7 -1.5,-0.2 -1.5,-0.1 -1.5,0.1 -1.5,0 -1.5,-0.2 -1.5,-0.1 -1.5,0.7 -1.5,-0.1 -1.5,-0.1 -1.5,1.4 -1.5,-0.7 -1.5,-0.6 -1.5,0.4 -1.5,0.5 -1.5,-0.4 -1.5,0.1 -1.5,0.1 -1.5,0.6 -1.5,-0.3 -1.5,0.1 -1.5,0.1 -1.5,-0.3 -1.5,0.5 -1.5,-0.5 -1.5,0.1 -1.5,0.1 -1.5,0.4 -1.5,-0.3 -1.5,0.1 -1.5,-0 -1.5,-0.4 -1.5,-0.1 -1.5,0.4 -1.5,-0.1 -1.5,0 -1.5,-0.1 -1.5,-0 -1.5,1.2 -1.5,-1.1 -1.5,0.2 -1.5,-0.2 -1.5,0.2 -1.5,-0.2 -1.5,-0.3 -1.5,0.5 -1.5,-0.3 -1.5,-0.4 -1.5,0.1 -1.5,0.5 -1.5,-0 -1.5,-0.7 -1.5,-0.1 -1.5,0.1 -1.5,-0.1 -1.5,0.1 -1.5,0.1 -1.5,0.1 -1.5,-0.4 -1.5,0.8 -1.5,-0.1 -1.5,-0.3 -1.5,-0.2 -1.5,0 -1.5,0.2 -1.5,0 -1.5,-0.2 -1.5,0.5 -1.5,-0.8 -1.5,0.1 -1.5,0 -1.5,-0.2 -1.5,0.4 -1.5,-0.5 -1.5,0.3 -1.5,0.4 -1.5,-0.6 -1.5,0 -1.5,0.3 -1.5,-0.1 -1.5,0.5 -1.5,0.1 -1.5,1.3 -1.5,-1.1 -1.5,0 -1.5,-0.2 -1.5,1 -1.5,-0.6 -1.5,-0.4 -1.5,0.2 -1.5,1.4 -1.5,-1.3 -1.5,-0.1 -1.5,0 -1.5,-0.3 -1.5,-0.1 -1.5,0.1 -1.5,-0.5 -1.5,0.3 -1.5,-0.1 -1.5,-0.5 -1.5,0.1 -1.5,-0.2 -1.5,0.6 -1.5,-0.2 -1.5,-0.2 -1.5,0.1 -1.5,0.2 -1.5,0.1 -1.5,0.5 -1.5,0.1 -1.5,0.1 -1.5,0.5 -1.5,0.1 -1.5,0.2 -1.5,0.4 -1.5,-0.5 -1.5,0.1 -1.5,0.2 -1.5,-0.3 -1.5,0.2 -1.5,-0.2 -1.5,-0.1 -1.5,-0.2 -1.5,-0.1 -1.5,-0.1 -1.5,-0.4 -1.5,0.3 -1.5,-0.9 -1.5,0.2 -1.5,-0.4 -1.5,-0.1 -1.5,-0.1 -1.5,0 -1.5,0.3 -1.5,-0.1 -1.5,0.2 -1.5,0.1 -1.5,-0.2 -1.5,0.4 -1.5,0.3 -1.5,-0.2 -1.5,0.4 -1.5,-0.4 -1.5,0.1 -1.5,-0.1 -1.5,0.3 -1.5,-0.2 -1.5,0.5 -1.5,0 -1.5,-0.7 -1.5,-0.3 -1.5,-0 -1.5,-0.1 -1.5,0.1 -1.5,-0.3 -1.5,0 -1.5,0.1 -1.5,-0.1 -1.5,-0.1 -1.5,1.9 -1.5,-1.6 -1.5,-0.1 -1.5,0.2 -1.5,-0.1 -1.5,0.5 -1.5,-0.2 -1.5,0.2 -1.5,0.8 -1.5,-0.5 -1.5,0.5 -1.5,-0.6 -1.5,0.4 -1.5,-0.3 -1.5,0.3 -1.5,0.2 -1.5,0.1 -1.5,-0.7 -1.5,0.1 -1.5,0.3 -1.5,0.3 -1.5,-0.9 -1.5,-0.1 -1.5,0 -1.5,0 -1.5,-0.1 -1.5,0.2 -1.5,-0 -1.5,0.2 -1.5,-0.2 -1.5,-0 -1.5,1.1 -1.5,-0.9 -1.5,-0 -1.5,-0 -1.5,1.2 -1.5,-1 -1.5,-0.1 -1.5,0.1 -1.5,0.3 -1.5,-0.2 -1.5,-0.1 -1.5,0.3 -1.5,-0.3 -1.5,-0.1 -1.5,0.3 -1.5,0 -1.5,-0.3 -1.5,0.2 -1.5,0.1 -1.5,0.2 -1.5,-0.2 -1.5,0.2 -1.5,-0.3 -1.5,0.1 -1.5,0 -1.5,-0.1 -1.5,-0.1 -1.5,0.1 -1.5,-0.3 -1.5,-0.2 -1.5,-0.3 -1.5,0.7 -1.5,-0.9 -1.5,0.1 -1.5,0.4 -1.5,-0.5 -1.5,0.7 -1.5,-0.7 -1.5,-0.6 -1.5,0.3 -1.5,0.1 -1.5,-0.1 -1.5,0 -1.5,-0 -1.5,0.2 -1.5,0.1 -1.5,0.3 -1.5,-0 -1.5,0.1 -1.5,1.8 -1.5,-1.4 -1.5,0.3 -1.5,0.6 -1.5,-0.4 -1.5,-0.2 -1.5,0.1 -1.5,-0.2 -1.5,-0 -1.5,-0.2 -1.5,0.3 -1.5,-0.2 -1.5,-0.3 -1.5,0 -1.5,-0.4 -1.5,-0.1 -1.5,0.4 -1.5,-0.6 -1.5,0.3 -1.5,-0.1 -1.5,-0 -1.5,0.3 -1.5,0.3 -1.5,-0.2 -1.5,0.7 -1.5,0.1 -1.5,0.1 -1.5,-0.4 -1.5,0.6 -1.5,-0.4 -1.5,0.2 -1.5,0 -1.5,-0.1 -1.5,1.1 -1.5,-1 -1.5,-0.2 -1.5,0.4 -1.5,-0.7 -1.5,-0 -1.5,0.1 -1.5,-0.4 -1.5,0.2 -1.5,-0.1 -1.5,-0.6 -1.5,0 -1.5,0.6 -1.5,-0.1 -1.5,-0.4 -1.5,-0 -1.5,1.8 -1.5,-1.4 -1.5,0.3 -1.5,0 -1.5,0 -1.5,0.2 -1.5,0.2 -1.5,0.2 -1.5,0 -1.5,-0.4 -1.5,0.8 -1.5,-0.2 -1.5,-0.5 -1.5,0.3 -1.5,-0.6 -1.5,-0 -1.5,-0.5 -1.5,0 -1.5,0.1 -1.5,-0.3 -1.5,-0.3 -1.5,0.6 -1.5,-0.6 -1.5,-0.3 -1.5,0 -1.5,0.2 -1.5,0.8 -1.5,-0.9 -1.5,-0.1 -1.5,0.5 -1.5,-0.1 -1.5,-0 -1.5,0.5 -1.5,-0.1 -1.5,0.3 -1.5,0.2 -1.5,-0.3 -1.5,0 -1.5,0.1 -1.5,0.2 -1.5,-0.2 -1.5,0.1 -1.5,0.2 -1.5,-0.3 -1.5,0 -1.5,0.2 -1.5,0.2 -1.5,0.2 -1.5,-0.5 -1.5,0.1 -1.5,-0.1 -1.5,0.2 -1.5,-0.1 -1.5,0.2 -1.5,0 -1.5,0.4 -1.5,0.2 -1.5,-0.5 -1.5,1.1 -1.5,-1.2 -1.5,-0 -1.5,0.2 -1.5,-0.2 -1.5,0.4 -1.5,-0.8 -1.5,0.3 -1.5,0.3 -1.5,-0.6 -1.5,0.4 -1.5,-0.4 -1.5,0.2 -1.5,-0.3 -1.5,0.2 -1.5,0.3 -1.5,-0.4 -1.5,0.6 -1.5,0.7 -1.5,-0.9 -1.5,-0.3 -1.5,0.6 -1.5,0 -1.5,0 -1.5,0.2 -1.5,-0.3 -1.5,0.2 -1.5,-0.1 -1.5,-0.6 -1.5,0.2 -1.5,-0.3 -1.5,-0.2 -1.5,0.2 -1.5,0.2 -1.5,-0.6 -1.5,-0 -1.5,1.3 -1.5,-1.2 -1.5,-0.4 -1.5,-0 -1.5,0.5 -1.5,-0.2 -1.5,-0 -1.5,0.3 -1.5,-0.3 -1.5,0.5 -1.5,-0 -1.5,0.1 -1.5,-0.3 -1.5,0.2 -1.5,0.1 -1.5,0 -1.5,-0.2 -1.5,0.6 -1.5,-0.8 -1.5,-0.1 -1.5,-0.2 -1.5,0 -1.5,-0.1 -1.5,-0 -1.5,1.2 -1.5,-1.4 -1.5,-0 -1.5,0.1 -1.5,-0.3 -1.5,0.1 -1.5,0.1 -1.5,0.3 -1.5,0.1 -1.5,0.2 -1.5,1.3 -1.5,-0.9 -1.5,0.2 -1.5,-0.1 -1.5,0.3 -1.5,0.2 -1.5,0.5 -1.5,-0.2 -1.5,-0.1 -1.5,0.4 -1.5,-0.1 -1.5,-0.4 -1.5,-0 -1.5,0.1 -1.5,-0.1 -1.5,-0.4 -1.5,-0.2 -1.5,-0.1 -1.5,-0.3 -1.5,-0.2 -1.5,-0.1 -1.5,0.1 -1.5,-0.1 -1.5,-0.1 -1.5,1.5 -1.5,-1.2 -1.5,-0.3 -1.5,0.5 -1.5,0.1 -1.5,-0.2 -1.5,-0 -1.5,0.1 -1.5,0.2 -1.5,0.4 -1.5,-0.3 -1.5,0.1 -1.5,-0 -1.5,0.1 -1.5,0 -1.5,0.4 -1.5,-0.1 -1.5,0.4 -1.5,-0.9 -1.5,-0.2 -1.5,0.1 -1.5,0.2 -1.5,-0.7 -1.5,-0.1 -1.5,0.2 -1.5,0.8 -1.5,-0.1 -1.5,-1 -1.5,0.6 -1.5,-0.5 -1.5,-0.1 -1.5,-0.1 -1.5,0.2 -1.5,0.2 -1.5,0.1 -1.5,0.3 -1.5,-0.3 -1.5,-0 -1.5,-0.1 -1.5,-0 -1.5,0.5 -1.5,-0.4 -1.5,-0.3 -1.5,0.2 -1.5,1.8 -1.5,-2 -1.5,0.5 -1.5,-0.5 -1.5,0.4 -1.5,0 -1.5,-0.6 -1.5,0.5 -1.5,-0.2 -1.5,0 -1.5,0.2 -1.5,0.2 -1.5,-0.4 -1.5,0 -1.5,0.7 -1.5,-0 -1.5,-0.4 -1.5,0.4 -1.5,0.5 -1.5,-0.6 -1.5,0.7 -1.5,-0.8 -1.5,0.4 -1.5,0 -1.5,-0.4 -1.5,0.1 -1.5,0.1 -1.5,1.6 -1.5,-0.2 -1.5,-1.2 -1.5,-0.3 -1.5,0.1 -1.5,0.6 -1.5,-0.6 -1.5,0.1 -1.5,-0 -1.5,0.4 -1.5,-0.4 -1.5,0.8 -1.5,-0.4 -1.5,0.2 -1.5,-0.7 -1.5,0.5 -1.5,1 -1.5,-0.8 -1.5,-1.2 -1.5,0.2 -1.5,0.6 -1.5,-1.1 -1.5,0 -1.5,0.3 -1.5,-0.2 -1.5,-0.5 -1.5,-0 -1.5,0.4 -1.5,-0.2 -1.5,0.2 -1.5,-0.3 -1.5,0.1 -1.5,0.1 -1.5,0.3 -1.5,0.3 -1.5,0.6 -1.5,1.3 -1.5,-1.4 -1.5,-0.1 -1.5,0.1 -1.5,-0.1 -1.5,0.4 -1.5,-0.3 -1.5,-0.2 -1.5,-0.1 -1.5,-0.1 -1.5,1.1 -1.5,-1.1 -1.5,-0.1 -1.5,-0.4 -1.5,-0.5 -1.5,0.5 -1.5,-0.7 -1.5,0.2 -1.5,0.2 -1.5,-0.3 -1.5,-0 -1.5,0.2 -1.5,0 -1.5,0.3 -1.5,-0 -1.5,0.1 -1.5,2 -1.5,-1.5 -1.5,1.6 -1.5,-1.6 -1.5,0.5 -1.5,1 -1.5,-0.7 -1.5,-0.5 -1.5,0.2 -1.5,-0.1 -1.5,-0.2 -1.5,0.5 -1.5,-0.6 -1.5,0.1 -1.5,0.1 -1.5,-0.5 -1.5,-0 -1.5,-0.2 -1.5,1.8 -1.5,-1.6 -1.5,-0.1 -1.5,1.3 -1.5,-1.2 -1.5,0.1 -1.5,1.8 -1.5,-1.7 -1.5,0.1 -1.5,0.6 -1.5,-0.3 -1.5,0.2 -1.5,-0 -1.5,0.2 -1.5,-0.1 -1.5,-0.1 -1.5,-0.1 -1.5,1.7 -1.5,-1.3 -1.5,-0.8 -1.5,-0 -1.5,-0.1 -1.5,0.4 -1.5,-0.6 -1.5,-0.2 -1.5,-0.2 -1.5,-0.2 -1.5,-0.1 -1.5,0.2 -1.5,-0.3 -1.5,1.3 -1.5,-1.1 -1.5,0 -1.5,0.1 -1.5,-0.1 -1.5,0.2 -1.5,0.2 -1.5,0 -1.5,0.3 -1.5,-0.2 -1.5,-0.3 -1.5,0.1 -1.5,0.6 -1.5,-0.5 -1.5,-0 -1.5,0.2 -1.5,-0.3z" fill="#80cc2a"/>
  <path d="M1125,1025.8 1126,1026.9 1127,1028.4 1128,1030.8 1129,1035 1130,1041.7 1131,1049.5 1132,1056.6 1133,1063 1134,1069.3 1135,1075.6 1136,1082 1137,1088.2 1138,1093.7 1139,1098.4 1140,1102.5 1141,1106.2 1142,1109.8 1143,1113.2 1144,1116.5 1145,1119.6 1146,1122.6 1147,1125.3 1148,1127.8 1149,1130 1150,1132 1151,1133.7 1152,1135.3 1153,1136.8 1154,1138.2 1155,1139.6 1156,1140.9 1157,1142.2 1158,1143.3 1159,1144.5 1160,1145.5 1161,1146.6 1162,1147.6 1163,1148.5 1164,1149.5 1165,1150.4 1166,1151.3 1167,1152.1 1168,1152.9 1169,1153.7 1170,1154.5 1171,1155.2 1172,1155.8 1173,1156.5 1174,1157.1 1175,1157.7 1176,1158.3 1177,1158.8 1178,1159.3 1179,1159.7 1180,1160.2 1181,1160.6 1182,1161 1183,1161.4 1184,1161.7 1185,1162.1 1186,1162.4 1187,1162.7 1188,1163 1189,1163.3 1190,1163.6 1191,1163.9 1192,1164.2 1193,1164.4 1194,1164.7 1195,1164.9" stroke="#80cc2a" stroke-width="3.2" fill="none" stroke-linejoin="round"/>
  <!-- grid -->
  <path d="M101,70V1268M348,70V1268M595,70V1268M842,70V1268M1089,70V1268M1336,70V1268M1584,70V1268M1831,70V1268M2078,70V1268M2325,70V1268" stroke="#4e4e4e" stroke-width="2" stroke-dasharray="6.2 6.82" stroke-dashoffset="-11" fill="none"/>
  <path d="M4,78.5H2433M4,200.6H2433M4,322.6H2433M4,444.7H2433M4,566.7H2433M4,688.8H2433M4,810.9H2433M4,932.9H2433M4,1055H2433M4,1177H2433" stroke="#4e4e4e" stroke-width="2" stroke-dasharray="6.2 6.82" fill="none"/>
</svg>


<!-- plot overlays -->
<svg width="2501" height="1407" viewBox="0 0 2501 1407">
  <!-- zoom corner -->
  <path d="M2424,78H2463Q2467.5,78 2467.5,82.5V121Q2467.5,125.5 2464,122.5L2422.5,81Q2420.5,78 2424,78Z" fill="#4b4b4b" stroke="#161616" stroke-width="1.8" stroke-linejoin="round"/>
  <circle cx="2457" cy="88" r="5.3" fill="none" stroke="#a6a6a6" stroke-width="2"/>
  <path d="M2445.8,99.2L2451.6,93.4" stroke="#a6a6a6" stroke-width="3.6" stroke-linecap="round"/>
  <!-- trigger T marker in plot -->
  <path d="M1075.5,70.5H1102L1089,83Z" fill="#8b6a28" stroke="#ff7a10" stroke-width="0.8"/>
  <path d="M1076,83.5H1101.5V110H1094L1089,118L1084,110H1076Z" fill="#8b6a28" stroke="#ff7a10" stroke-width="0.8"/>
  <path d="M1079,86.5H1098.5V107H1093L1089,112L1085,107H1079Z" fill="#080606"/>
  <path d="M1083,92H1095M1089,92V103.5" stroke="#a8803a" stroke-width="2.4" fill="none"/>
  <!-- header small T marker -->
  <path d="M1180,39.5H1199L1189.5,47Z" fill="#8b6a28" stroke="#ff7a10" stroke-width="0.6"/>
  <path d="M1180.5,47.5H1198.5V65H1193L1189.5,70L1186,65H1180.5Z" fill="#8b6a28" stroke="#ff7a10" stroke-width="0.6"/>
  <path d="M1182.5,49.5H1196.5V63H1192.5L1189.5,66L1186.5,63H1182.5Z" fill="#080606"/>
  <path d="M1185.5,52.5H1193.5M1189.5,52.5V60.5" stroke="#a8803a" stroke-width="2" fill="none"/>
  <!-- level arrow right -->
  <path d="M2447,248.3L2463,235V261Z" fill="#0d0908" stroke="#0d0908" stroke-width="1.5" stroke-linejoin="round"/>
  <path d="M2462,248.3H2475" stroke="#0d0908" stroke-width="3.5"/>
  <!-- channel markers -->
  <path d="M11,402H40L55,419L40,436H11Q8,436 8,433V405Q8,402 11,402Z" fill="#fdfdd8" stroke="#9cc850" stroke-width="1.2"/>
  <path d="M11,643H40L53,658.5L40,674.5H11Q8,674.5 8,671.5V646Q8,643 11,643Z" fill="#e2f8f9" stroke="#48d0d8" stroke-width="2"/>
  <path d="M12,971.5H40L54.5,987.5L40,1004H12Q8.5,1004 8.5,1000.5V975Q8.5,971.5 12,971.5Z" fill="#fcd3d6" stroke="#e0707c" stroke-width="1.5"/>
  <path d="M12,1160.5H40L54.5,1177L40,1193.5H12Q8.5,1193.5 8.5,1190V1164Q8.5,1160.5 12,1160.5Z" fill="#82c830" stroke="#2a2a1a" stroke-width="1.5"/>
  <g font-family="Liberation Sans" font-size="16" fill="#1a1a1a" stroke="#1a1a1a" stroke-width="0.35" letter-spacing="2.8">
    <text x="19" y="424.5">C1</text>
    <text x="19" y="663.5">C2</text>
    <text x="19" y="993">C3</text>
    <text x="19" y="1182.5">C4</text>
  </g>
  <!-- side handle dots -->
  <g fill="#a8a8a8"><circle cx="2489.5" cy="653.5" r="2.6"/><circle cx="2489.5" cy="664" r="2.6"/><circle cx="2489.5" cy="674.5" r="2.6"/></g>
  <!-- channel labels -->
  <g font-family="Liberation Sans" font-size="25" stroke-width="0.8" paint-order="stroke">
    <text x="52" y="362" fill="#d3d89a" stroke="#7a6a30">DIM</text>
    <text x="56.5" y="697" fill="#1ebfc8" stroke="#0f5a60" font-size="24">SW</text>
    <text x="50" y="931" fill="#d23a50" stroke="#7a2a30">VOUT</text>
    <text x="44.5" y="1144" fill="#86c83a" stroke="#4a6a20">IOUT</text>
  </g>
  <!-- y axis labels -->
  <g font-family="Liberation Sans" font-size="16.5" fill="#222" stroke="#3a3a20" stroke-width="0.6" letter-spacing="1">
    <text x="2444" y="206.5">8 A</text>
    <text x="2444" y="328.5">7 A</text>
    <text x="2444" y="450.5">6 A</text>
    <text x="2444" y="572.5">5 A</text>
    <text x="2444" y="694.5">4 A</text>
    <text x="2444" y="817">3 A</text>
    <text x="2444" y="939">2 A</text>
    <text x="2444" y="1061">1 A</text>
    <text x="2444" y="1183">0 A</text>
  </g>
  <!-- x axis labels -->
  <g font-family="Liberation Sans" font-size="17.6" font-weight="bold" fill="#1c1c1c" text-anchor="middle">
    <text transform="translate(101,1285) skewX(-8)">-400 µs</text>
    <text transform="translate(348,1285) skewX(-8)">-300 µs</text>
    <text transform="translate(595,1285) skewX(-8)">-200 µs</text>
    <text transform="translate(842,1285) skewX(-8)">-100 µs</text>
    <text transform="translate(1089,1285) skewX(-8)">0 s</text>
    <text transform="translate(1337,1285) skewX(-8)">100 µs</text>
    <text transform="translate(1584,1285) skewX(-8)">200 µs</text>
    <text transform="translate(1831,1285) skewX(-8)">300 µs</text>
    <text transform="translate(2078,1285) skewX(-8)">400 µs</text>
    <text transform="translate(2325,1285) skewX(-8)">500 µs</text>
  </g>
</svg>

<!-- bottom channel cards -->
<div class="card" style="left:4px"><div class="h" style="background:#4a4823"><span style="color:#f6f2b0;-webkit-text-stroke:0.4px #f6f2b0;text-shadow:0 0 1.5px #b07820,0 0 1px #b07820">Ch 1</span></div>
  <div class="t" style="top:30px">500 mV/div</div><div class="t" style="top:79px">20 MHz</div></div>
<div class="card" style="left:127px"><div class="h" style="background:#1c3c3e;box-shadow:inset 0 0 0 1px #2a8a90"><span style="color:#34c4cc">Ch 2</span></div>
  <div class="t" style="top:30px">5 V/div</div><div class="t" style="top:79px">20 MHz</div></div>
<div class="card" style="left:251px"><div class="h" style="background:#42201f;border-bottom:1px solid #c04040"><span style="color:#e06060">Ch 3</span></div>
  <div class="t" style="top:30px">2 V/div</div><div class="t" style="top:79px">20 MHz</div></div>
<div class="card" style="left:375px"><div class="h" style="background:#8ccc2c"><span style="color:#151515">Ch 4</span></div>
  <div class="t" style="top:30px">1 A/div</div><div class="t" style="top:56px">1 MΩ</div><div class="t" style="top:79px">20 MHz</div></div>

<div class="btn" style="left:1334px"><div class="bar" style="background:#fcd0c0;box-shadow:0 0 0 1px #b07838"></div><div class="bt" style="top:38px;font-size:25px">5</div></div>
<div class="btn" style="left:1392px"><div class="bar" style="background:#445088"></div><div class="bt" style="top:38px;font-size:25px">6</div></div>
<div class="sep" style="left:1457px"></div>
<div class="btn" style="left:1472px"><div class="bar" style="background:#a8782c;box-shadow:0 0 0 0.5px #c08030"></div><div class="bt" style="top:22.5px">Add<br>New<br>Math</div></div>
<div class="btn" style="left:1530px"><div class="bar" style="background:#d6d6d6"></div><div class="bt" style="top:22.5px">Add<br>New<br>Ref</div></div>
<div class="btn" style="left:1589px"><div class="bar" style="background:#eea4d4"></div><div class="bt" style="top:22.5px">Add<br>New<br>Bus</div></div>
<div class="sep" style="left:1654px"></div>

<div class="pan" style="left:1668px;width:260px"><div class="h"><span>Horizontal</span></div>
  <div class="t" style="left:10px;top:30px">100 µs/div</div><div class="t" style="left:148px;top:30px">1 ms</div>
  <div class="t" style="left:10px;top:55px;transform:scaleX(0.915);transform-origin:0 0">SR: 1.25 GS/s</div><div class="t" style="left:148px;top:55px">800 ps/pt</div>
  <div class="t" style="left:10px;top:80px">RL: 1.25 Mpts</div><div class="t" style="left:166px;top:80px">43.9%</div>
</div>
<div class="pan" style="left:1941px;width:209px"><div class="h"><span>Trigger</span></div>
  <div class="t" style="left:96px;top:30px">700 mV</div>
</div>
<div class="pan" style="left:2163px;width:195px"><div class="h"><span>Acquisition</span></div>
  <div class="t" style="left:8px;top:30px">Auto,</div><div class="t" style="left:86px;top:30px">Analyze</div>
  <div class="t" style="left:8px;top:55px">Sample: 12 bits</div>
  <div class="t" style="left:8px;top:80px">Single: 1 /1</div>
</div>
<div class="a" style="left:2372px;top:1300px;width:115px;height:45px;box-sizing:border-box;border:1px solid #8a5a40;border-radius:7px;background:#ff1a26;color:#ffd4d4;font-weight:bold;font-size:17px;line-height:43px;text-align:center;letter-spacing:-0.5px">Stopped</div>

<svg width="2501" height="1407" viewBox="0 0 2501 1407">
  <!-- probe icons -->
  <g fill="none" stroke="#222" stroke-width="1.3">
    <g><path d="M16,1367Q16,1357 24,1357Q31,1357 32.5,1365" stroke-width="1.5"/><circle cx="24.5" cy="1361" r="3.3" stroke-width="1.5"/><rect x="14" y="1364" width="4.5" height="8" rx="2.2" fill="#e8e8e8"/><rect x="29" y="1365" width="5" height="8" rx="1.5" fill="#e8e8e8"/></g><g transform="translate(123,0)"><path d="M16,1367Q16,1357 24,1357Q31,1357 32.5,1365" stroke-width="1.5"/><circle cx="24.5" cy="1361" r="3.3" stroke-width="1.5"/><rect x="14" y="1364" width="4.5" height="8" rx="2.2" fill="#e8e8e8"/><rect x="29" y="1365" width="5" height="8" rx="1.5" fill="#e8e8e8"/></g><g transform="translate(247,0)"><path d="M16,1367Q16,1357 24,1357Q31,1357 32.5,1365" stroke-width="1.5"/><circle cx="24.5" cy="1361" r="3.3" stroke-width="1.5"/><rect x="14" y="1364" width="4.5" height="8" rx="2.2" fill="#e8e8e8"/><rect x="29" y="1365" width="5" height="8" rx="1.5" fill="#e8e8e8"/></g>
  </g>
  <g font-family="Liberation Sans" font-size="13" font-weight="bold" fill="#111">
    <text x="100" y="1390">B</text><text x="107" y="1395" font-size="12">w</text>
    <text x="223" y="1390">B</text><text x="230" y="1395" font-size="12">w</text>
    <text x="347" y="1390">B</text><text x="354" y="1395" font-size="12">w</text>
    <text x="471" y="1390">B</text><text x="478" y="1395" font-size="12">w</text>
  </g>
  <!-- horizontal panel small T -->
  <path d="M1815,1381H1827V1393H1823.5L1821,1397L1818.5,1393H1815Z" fill="#111" stroke="#a07a30" stroke-width="1.5"/>
  <path d="M1818,1384.5H1824M1821,1384.5V1390.5" stroke="#f0f0f0" stroke-width="1.6"/>
  <!-- trigger badge -->
  <rect x="1951" y="1331.5" width="37.5" height="20" rx="6" fill="#fbf2bb" stroke="#2a2418" stroke-width="1.8"/>
  <text x="1970" y="1348" font-family="Liberation Sans" font-size="18" font-weight="bold" fill="#111" text-anchor="middle">1</text>
  <path d="M2003,1335H2008L2018,1346.5H2024" fill="none" stroke="#3a4a6a" stroke-width="1.6"/>
</svg>
</body></html>
